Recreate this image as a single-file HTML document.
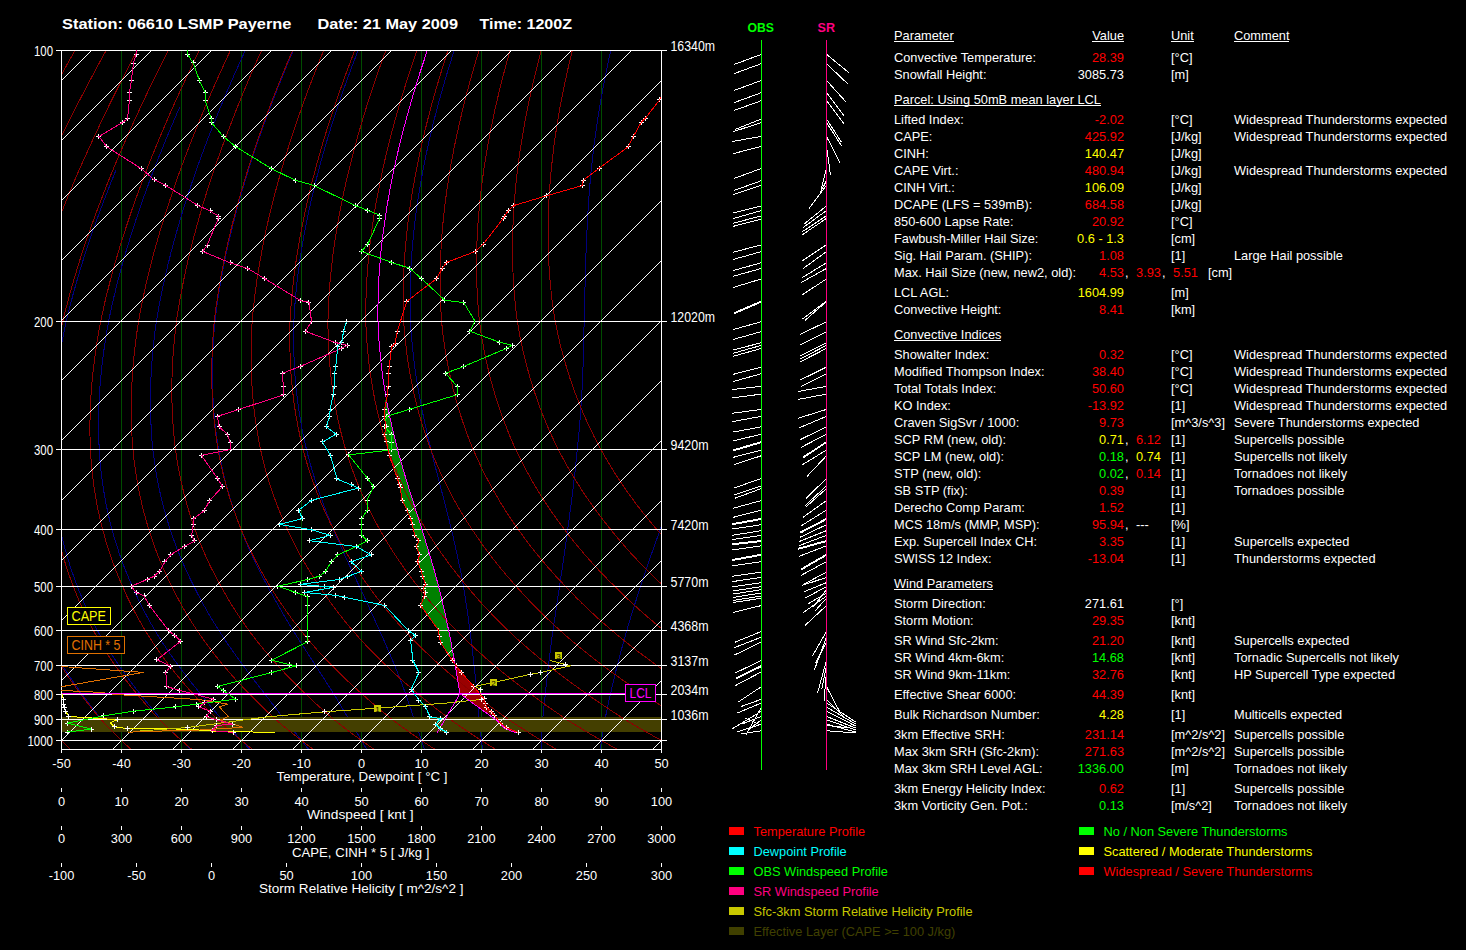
<!DOCTYPE html><html><head><meta charset="utf-8"><style>html,body{margin:0;padding:0;background:#000;overflow:hidden}</style></head><body><svg width="1466" height="950" viewBox="0 0 1466 950" style="display:block;font-family:'Liberation Sans',sans-serif">
<rect width="1466" height="950" fill="#000"/>
<defs><clipPath id="plot"><rect x="62" y="51" width="599" height="698"/></clipPath></defs>
<g clip-path="url(#plot)">
<line x1="121.50" y1="50.50" x2="121.50" y2="749.50" stroke="#004c00" stroke-width="1" shape-rendering="crispEdges"/>
<line x1="181.50" y1="50.50" x2="181.50" y2="749.50" stroke="#004c00" stroke-width="1" shape-rendering="crispEdges"/>
<line x1="241.50" y1="50.50" x2="241.50" y2="749.50" stroke="#004c00" stroke-width="1" shape-rendering="crispEdges"/>
<line x1="301.50" y1="50.50" x2="301.50" y2="749.50" stroke="#004c00" stroke-width="1" shape-rendering="crispEdges"/>
<line x1="361.50" y1="50.50" x2="361.50" y2="749.50" stroke="#004c00" stroke-width="1" shape-rendering="crispEdges"/>
<line x1="421.50" y1="50.50" x2="421.50" y2="749.50" stroke="#004c00" stroke-width="1" shape-rendering="crispEdges"/>
<line x1="481.50" y1="50.50" x2="481.50" y2="749.50" stroke="#004c00" stroke-width="1" shape-rendering="crispEdges"/>
<line x1="541.50" y1="50.50" x2="541.50" y2="749.50" stroke="#004c00" stroke-width="1" shape-rendering="crispEdges"/>
<line x1="601.50" y1="50.50" x2="601.50" y2="749.50" stroke="#004c00" stroke-width="1" shape-rendering="crispEdges"/>
<polyline points="56.1,230.1 55.2,232.5 54.3,235.0 53.4,237.3 52.5,239.7 51.7,242.1 50.8,244.4 50.0,246.7 49.2,249.0 48.4,251.3 47.6,253.5 46.8,255.8 46.0,258.0 45.3,260.2 44.5,262.4 43.8,264.5 43.0,266.7 42.3,268.8 41.6,270.9 40.9,273.0 40.2,275.1 39.6,277.1 38.9,279.2 38.2,281.2 37.6,283.2 37.0,285.3 36.3,287.2 35.7,289.2 35.1,291.2 34.5,293.1 33.9,295.0 33.4,297.0 32.8,298.9 32.2,300.7 31.7,302.6 31.1,304.5 30.6,306.3 30.1,308.2 29.6,310.0 29.0,311.8 28.5,313.6 28.0,315.4 27.5,317.1 27.1,318.9 26.6,320.7 26.1,322.4 25.7,324.1 25.3,325.7 24.9,327.4 24.5,329.1 24.1,330.7 23.7,332.3 23.3,334.0 22.9,335.6 22.6,337.2 22.2,338.8 21.8,340.4 21.5,341.9 21.1,343.5 20.8,345.0 20.4,346.6 20.1,348.1 19.8,349.6 19.5,351.2 19.1,352.7 18.8,354.2 18.5,355.6 18.2,357.1 17.9,358.6 17.6,360.0 17.4,361.5 17.1,362.9 16.8,364.4 16.5,365.8 16.3,367.2 16.0,368.6 15.8,370.0 15.5,371.4 15.3,372.8 15.0,374.2 14.8,375.5 14.6,376.9 14.3,378.2 14.1,379.6 13.9,380.9 13.7,382.2 13.5,383.6 13.2,384.9 13.0,386.2 12.8,387.5 12.6,388.8 12.5,390.1 12.3,391.3 12.1,392.6 11.9,393.9 11.7,395.1 11.6,396.4 11.4,397.6 11.2,398.9 11.1,400.1 10.9,401.3 10.7,402.5 10.6,403.7 10.4,405.0 10.3,406.2 10.2,407.3 10.0,408.5 9.9,409.7 9.8,410.9 9.6,412.0 9.5,413.2 9.4,414.4 9.3,415.5 9.2,416.7 9.0,417.8 8.9,418.9 8.8,420.1 8.7,421.2 8.6,422.3 8.5,423.4 8.4,424.5 8.3,425.6 8.2,426.7 8.2,427.8 8.1,428.9 8.0,430.0 7.9,431.0 7.8,432.1 7.8,433.2 7.7,434.2 7.6,435.3 7.6,436.3 7.5,437.4 7.4,438.4 7.4,439.4 7.3,440.5 7.3,441.5 7.2,442.5 7.2,443.5 7.1,444.5 7.1,445.5 7.0,446.5 7.0,447.5 6.9,448.5 6.9,449.5 6.9,451.4 6.7,457.0 6.7,462.5 6.7,467.8 6.8,473.0 6.9,478.0 7.1,483.0 7.4,487.8 7.7,492.5 8.0,497.1 8.4,501.6 8.8,506.0 9.3,510.4 9.8,514.6 10.3,518.7 10.9,522.8 11.5,526.7 12.1,530.6 12.7,534.5 13.4,538.2 14.1,541.9 14.8,545.5 15.6,549.1 16.3,552.6 17.1,556.0 17.9,559.4 18.8,562.7 19.6,565.9 20.5,569.1 21.4,572.3 22.3,575.3 23.2,578.4 24.1,581.4 25.1,584.3 26.0,587.2 27.0,590.1 27.9,592.9 28.9,595.7 29.9,598.5 30.8,601.2 31.8,603.9 32.8,606.5 33.8,609.1 34.9,611.7 35.9,614.2 36.9,616.7 38.0,619.2 39.1,621.6 40.1,624.0 41.2,626.3 42.3,628.7 43.4,630.9 44.5,633.2 45.6,635.4 46.7,637.6 47.8,639.8 48.9,642.0 50.0,644.1 51.2,646.2 52.3,648.2 53.4,650.3 54.6,652.3 55.7,654.3 56.9,656.3 58.0,658.2 59.2,660.1 60.3,662.0 61.5,663.9 62.7,665.8 63.8,667.6 65.0,669.4 66.1,671.3 67.3,673.0 68.4,674.8 69.6,676.6 70.8,678.3 71.9,680.0 73.1,681.7 74.3,683.4 75.5,685.0 76.6,686.7 77.8,688.3 79.0,689.9 80.1,691.5 81.3,693.1 82.5,694.7 83.6,696.2 84.8,697.8 85.9,699.3 87.1,700.9 88.2,702.4 89.3,703.9 90.5,705.4 91.6,706.9 92.8,708.3 93.9,709.8 95.0,711.2 96.2,712.6 97.3,714.1 98.5,715.4 99.6,716.8 100.7,718.2 101.9,719.6 103.0,720.9 104.2,722.2 105.4,723.5 106.5,724.8 107.7,726.0 108.9,727.3 110.0,728.5 111.2,729.8 112.3,731.0 113.5,732.2 114.6,733.4 115.8,734.6 116.9,735.8 118.1,737.0 119.2,738.2 120.4,739.3 121.5,740.5 123.4,742.4 127.3,746.3 131.1,750.0 134.9,753.6" fill="none" stroke="#000080" stroke-width="1" shape-rendering="crispEdges"/>
<polyline points="115.8,170.6 114.6,173.6 113.4,176.5 112.2,179.4 111.0,182.3 109.9,185.2 108.8,188.1 107.7,190.9 106.6,193.7 105.5,196.4 104.5,199.2 103.4,201.9 102.4,204.6 101.4,207.2 100.4,209.9 99.5,212.5 98.5,215.1 97.6,217.6 96.7,220.2 95.8,222.7 94.9,225.2 94.0,227.7 93.1,230.1 92.3,232.5 91.5,235.0 90.6,237.3 89.8,239.7 89.0,242.1 88.3,244.4 87.5,246.7 86.7,249.0 86.0,251.3 85.3,253.5 84.5,255.8 83.8,258.0 83.1,260.2 82.5,262.4 81.8,264.5 81.1,266.7 80.5,268.8 79.8,270.9 79.2,273.0 78.6,275.1 78.0,277.1 77.4,279.2 76.8,281.2 76.2,283.2 75.6,285.3 75.1,287.2 74.5,289.2 74.0,291.2 73.4,293.1 72.9,295.0 72.4,297.0 71.9,298.9 71.4,300.7 70.9,302.6 70.4,304.5 69.9,306.3 69.4,308.2 69.0,310.0 68.5,311.8 68.1,313.6 67.6,315.4 67.2,317.1 66.8,318.9 66.4,320.7 66.0,322.4 65.6,324.1 65.2,325.7 64.9,327.4 64.5,329.1 64.2,330.7 63.9,332.3 63.5,334.0 63.2,335.6 62.9,337.2 62.6,338.8 62.3,340.4 62.0,341.9 61.7,343.5 61.4,345.0 61.1,346.6 60.8,348.1 60.5,349.6 60.3,351.2 60.0,352.7 59.8,354.2 59.5,355.6 59.3,357.1 59.0,358.6 58.8,360.0 58.6,361.5 58.3,362.9 58.1,364.4 57.9,365.8 57.7,367.2 57.5,368.6 57.3,370.0 57.1,371.4 56.9,372.8 56.7,374.2 56.5,375.5 56.3,376.9 56.1,378.2 56.0,379.6 55.8,380.9 55.6,382.2 55.5,383.6 55.3,384.9 55.2,386.2 55.0,387.5 54.9,388.8 54.7,390.1 54.6,391.3 54.4,392.6 54.3,393.9 54.2,395.1 54.1,396.4 53.9,397.6 53.8,398.9 53.7,400.1 53.6,401.3 53.5,402.5 53.4,403.7 53.3,405.0 53.2,406.2 53.1,407.3 53.0,408.5 52.9,409.7 52.8,410.9 52.8,412.0 52.7,413.2 52.6,414.4 52.5,415.5 52.5,416.7 52.4,417.8 52.3,418.9 52.3,420.1 52.2,421.2 52.2,422.3 52.1,423.4 52.1,424.5 52.0,425.6 52.0,426.7 51.9,427.8 51.9,428.9 51.8,430.0 51.8,431.0 51.8,432.1 51.7,433.2 51.7,434.2 51.7,435.3 51.7,436.3 51.7,437.4 51.6,438.4 51.6,439.4 51.6,440.5 51.6,441.5 51.6,442.5 51.6,443.5 51.6,444.5 51.6,445.5 51.6,446.5 51.6,447.5 51.6,448.5 51.6,449.5 51.6,451.4 51.8,457.0 52.0,462.5 52.2,467.8 52.5,473.0 52.9,478.0 53.3,483.0 53.8,487.8 54.3,492.5 54.9,497.1 55.5,501.6 56.1,506.0 56.8,510.4 57.5,514.6 58.2,518.7 59.0,522.8 59.8,526.7 60.7,530.6 61.5,534.5 62.4,538.2 63.3,541.9 64.2,545.5 65.1,549.1 66.1,552.6 67.0,556.0 68.0,559.4 69.1,562.7 70.1,565.9 71.1,569.1 72.2,572.3 73.3,575.3 74.4,578.4 75.5,581.4 76.6,584.3 77.7,587.2 78.8,590.1 79.9,592.9 81.1,595.7 82.2,598.5 83.4,601.2 84.5,603.9 85.7,606.5 86.8,609.1 88.0,611.7 89.2,614.2 90.4,616.7 91.6,619.2 92.8,621.6 94.0,624.0 95.2,626.3 96.5,628.7 97.7,630.9 98.9,633.2 100.2,635.4 101.4,637.6 102.7,639.8 103.9,642.0 105.2,644.1 106.5,646.2 107.7,648.2 109.0,650.3 110.3,652.3 111.5,654.3 112.8,656.3 114.1,658.2 115.3,660.1 116.6,662.0 117.9,663.9 119.2,665.8 120.4,667.6 121.7,669.4 123.0,671.3 124.3,673.0 125.5,674.8 126.8,676.6 128.1,678.3 129.3,680.0 130.6,681.7 131.9,683.4 133.1,685.0 134.4,686.7 135.7,688.3 136.9,689.9 138.2,691.5 139.5,693.1 140.7,694.7 141.9,696.2 143.2,697.8 144.4,699.3 145.6,700.9 146.8,702.4 148.0,703.9 149.3,705.4 150.5,706.9 151.7,708.3 152.9,709.8 154.1,711.2 155.3,712.6 156.5,714.1 157.7,715.4 158.9,716.8 160.1,718.2 161.3,719.6 162.5,720.9 163.7,722.2 164.9,723.5 166.1,724.8 167.3,726.0 168.5,727.3 169.7,728.5 170.9,729.8 172.1,731.0 173.3,732.2 174.5,733.4 175.7,734.6 176.8,735.8 178.0,737.0 179.2,738.2 180.3,739.3 181.5,740.5 183.5,742.4 187.4,746.3 191.2,750.0 195.0,753.6" fill="none" stroke="#000080" stroke-width="1" shape-rendering="crispEdges"/>
<polyline points="179.7,107.2 178.1,110.9 176.5,114.6 174.9,118.1 173.4,121.7 171.9,125.2 170.4,128.7 169.0,132.1 167.6,135.5 166.2,138.9 164.8,142.2 163.5,145.5 162.2,148.7 160.9,152.0 159.6,155.1 158.3,158.3 157.1,161.4 155.9,164.5 154.7,167.5 153.6,170.6 152.4,173.6 151.3,176.5 150.2,179.4 149.1,182.3 148.1,185.2 147.0,188.1 146.0,190.9 145.0,193.7 144.0,196.4 143.0,199.2 142.1,201.9 141.1,204.6 140.2,207.2 139.3,209.9 138.4,212.5 137.5,215.1 136.7,217.6 135.8,220.2 135.0,222.7 134.2,225.2 133.4,227.7 132.6,230.1 131.8,232.5 131.1,235.0 130.3,237.3 129.6,239.7 128.9,242.1 128.1,244.4 127.5,246.7 126.8,249.0 126.1,251.3 125.4,253.5 124.8,255.8 124.1,258.0 123.5,260.2 122.9,262.4 122.3,264.5 121.7,266.7 121.1,268.8 120.5,270.9 120.0,273.0 119.4,275.1 118.9,277.1 118.3,279.2 117.8,281.2 117.3,283.2 116.8,285.3 116.3,287.2 115.8,289.2 115.3,291.2 114.9,293.1 114.4,295.0 113.9,297.0 113.5,298.9 113.1,300.7 112.6,302.6 112.2,304.5 111.8,306.3 111.4,308.2 111.0,310.0 110.6,311.8 110.2,313.6 109.8,315.4 109.5,317.1 109.1,318.9 108.7,320.7 108.4,322.4 108.1,324.1 107.8,325.7 107.5,327.4 107.2,329.1 106.9,330.7 106.7,332.3 106.4,334.0 106.1,335.6 105.9,337.2 105.6,338.8 105.4,340.4 105.1,341.9 104.9,343.5 104.7,345.0 104.4,346.6 104.2,348.1 104.0,349.6 103.8,351.2 103.6,352.7 103.4,354.2 103.2,355.6 103.0,357.1 102.8,358.6 102.6,360.0 102.4,361.5 102.3,362.9 102.1,364.4 101.9,365.8 101.8,367.2 101.6,368.6 101.5,370.0 101.3,371.4 101.2,372.8 101.1,374.2 100.9,375.5 100.8,376.9 100.7,378.2 100.6,379.6 100.4,380.9 100.3,382.2 100.2,383.6 100.1,384.9 100.0,386.2 99.9,387.5 99.8,388.8 99.7,390.1 99.7,391.3 99.6,392.6 99.5,393.9 99.4,395.1 99.3,396.4 99.3,397.6 99.2,398.9 99.1,400.1 99.1,401.3 99.0,402.5 99.0,403.7 98.9,405.0 98.9,406.2 98.8,407.3 98.8,408.5 98.8,409.7 98.7,410.9 98.7,412.0 98.7,413.2 98.6,414.4 98.6,415.5 98.6,416.7 98.6,417.8 98.6,418.9 98.6,420.1 98.5,421.2 98.5,422.3 98.5,423.4 98.5,424.5 98.5,425.6 98.5,426.7 98.5,427.8 98.6,428.9 98.6,430.0 98.6,431.0 98.6,432.1 98.6,433.2 98.6,434.2 98.7,435.3 98.7,436.3 98.7,437.4 98.7,438.4 98.8,439.4 98.8,440.5 98.8,441.5 98.9,442.5 98.9,443.5 99.0,444.5 99.0,445.5 99.1,446.5 99.1,447.5 99.2,448.5 99.2,449.5 99.3,451.4 99.7,457.0 100.2,462.5 100.7,467.8 101.3,473.0 101.9,478.0 102.5,483.0 103.3,487.8 104.0,492.5 104.8,497.1 105.6,501.6 106.5,506.0 107.4,510.4 108.3,514.6 109.3,518.7 110.3,522.8 111.3,526.7 112.4,530.6 113.4,534.5 114.5,538.2 115.6,541.9 116.7,545.5 117.9,549.1 119.0,552.6 120.2,556.0 121.4,559.4 122.6,562.7 123.8,565.9 125.1,569.1 126.3,572.3 127.6,575.3 128.8,578.4 130.1,581.4 131.4,584.3 132.7,587.2 134.0,590.1 135.3,592.9 136.6,595.7 137.9,598.5 139.2,601.2 140.5,603.9 141.8,606.5 143.1,609.1 144.5,611.7 145.8,614.2 147.1,616.7 148.5,619.2 149.8,621.6 151.2,624.0 152.6,626.3 153.9,628.7 155.3,630.9 156.6,633.2 158.0,635.4 159.4,637.6 160.8,639.8 162.1,642.0 163.5,644.1 164.9,646.2 166.3,648.2 167.6,650.3 169.0,652.3 170.4,654.3 171.8,656.3 173.1,658.2 174.5,660.1 175.9,662.0 177.3,663.9 178.6,665.8 180.0,667.6 181.3,669.4 182.7,671.3 184.0,673.0 185.4,674.8 186.7,676.6 188.0,678.3 189.4,680.0 190.7,681.7 192.0,683.4 193.3,685.0 194.7,686.7 196.0,688.3 197.3,689.9 198.6,691.5 199.9,693.1 201.2,694.7 202.5,696.2 203.7,697.8 205.0,699.3 206.2,700.9 207.5,702.4 208.7,703.9 209.9,705.4 211.1,706.9 212.4,708.3 213.6,709.8 214.8,711.2 216.0,712.6 217.2,714.1 218.4,715.4 219.6,716.8 220.8,718.2 221.9,719.6 223.1,720.9 224.3,722.2 225.5,723.5 226.7,724.8 227.9,726.0 229.1,727.3 230.2,728.5 231.4,729.8 232.5,731.0 233.7,732.2 234.8,733.4 235.9,734.6 237.1,735.8 238.2,737.0 239.3,738.2 240.4,739.3 241.5,740.5 243.4,742.4 247.0,746.3 250.6,750.0 254.1,753.6" fill="none" stroke="#000080" stroke-width="1" shape-rendering="crispEdges"/>
<polyline points="253.7,32.4 251.5,37.1 249.4,41.6 247.3,46.2 245.2,50.6 243.2,55.0 241.2,59.3 239.3,63.6 237.4,67.8 235.5,72.0 233.7,76.1 232.0,80.2 230.2,84.2 228.5,88.1 226.8,92.1 225.2,95.9 223.6,99.7 222.0,103.5 220.5,107.2 218.9,110.9 217.5,114.6 216.0,118.1 214.6,121.7 213.2,125.2 211.8,128.7 210.5,132.1 209.1,135.5 207.8,138.9 206.6,142.2 205.3,145.5 204.1,148.7 202.9,152.0 201.7,155.1 200.6,158.3 199.4,161.4 198.3,164.5 197.2,167.5 196.2,170.6 195.1,173.6 194.1,176.5 193.1,179.4 192.1,182.3 191.1,185.2 190.2,188.1 189.2,190.9 188.3,193.7 187.4,196.4 186.5,199.2 185.6,201.9 184.8,204.6 184.0,207.2 183.1,209.9 182.3,212.5 181.5,215.1 180.8,217.6 180.0,220.2 179.3,222.7 178.5,225.2 177.8,227.7 177.1,230.1 176.4,232.5 175.7,235.0 175.1,237.3 174.4,239.7 173.8,242.1 173.1,244.4 172.5,246.7 171.9,249.0 171.3,251.3 170.7,253.5 170.2,255.8 169.6,258.0 169.1,260.2 168.5,262.4 168.0,264.5 167.5,266.7 167.0,268.8 166.5,270.9 166.0,273.0 165.5,275.1 165.0,277.1 164.6,279.2 164.1,281.2 163.7,283.2 163.2,285.3 162.8,287.2 162.4,289.2 162.0,291.2 161.6,293.1 161.2,295.0 160.8,297.0 160.5,298.9 160.1,300.7 159.7,302.6 159.4,304.5 159.0,306.3 158.7,308.2 158.4,310.0 158.1,311.8 157.7,313.6 157.4,315.4 157.1,317.1 156.8,318.9 156.6,320.7 156.3,322.4 156.0,324.1 155.8,325.7 155.6,327.4 155.4,329.1 155.1,330.7 154.9,332.3 154.7,334.0 154.5,335.6 154.3,337.2 154.2,338.8 154.0,340.4 153.8,341.9 153.6,343.5 153.5,345.0 153.3,346.6 153.1,348.1 153.0,349.6 152.8,351.2 152.7,352.7 152.6,354.2 152.4,355.6 152.3,357.1 152.2,358.6 152.1,360.0 152.0,361.5 151.9,362.9 151.8,364.4 151.7,365.8 151.6,367.2 151.5,368.6 151.4,370.0 151.3,371.4 151.2,372.8 151.1,374.2 151.1,375.5 151.0,376.9 150.9,378.2 150.9,379.6 150.8,380.9 150.8,382.2 150.7,383.6 150.7,384.9 150.6,386.2 150.6,387.5 150.6,388.8 150.5,390.1 150.5,391.3 150.5,392.6 150.5,393.9 150.4,395.1 150.4,396.4 150.4,397.6 150.4,398.9 150.4,400.1 150.4,401.3 150.4,402.5 150.4,403.7 150.4,405.0 150.4,406.2 150.4,407.3 150.5,408.5 150.5,409.7 150.5,410.9 150.5,412.0 150.6,413.2 150.6,414.4 150.6,415.5 150.7,416.7 150.7,417.8 150.7,418.9 150.8,420.1 150.8,421.2 150.9,422.3 150.9,423.4 151.0,424.5 151.0,425.6 151.1,426.7 151.1,427.8 151.2,428.9 151.3,430.0 151.3,431.0 151.4,432.1 151.5,433.2 151.5,434.2 151.6,435.3 151.7,436.3 151.8,437.4 151.9,438.4 151.9,439.4 152.0,440.5 152.1,441.5 152.2,442.5 152.3,443.5 152.4,444.5 152.5,445.5 152.6,446.5 152.7,447.5 152.8,448.5 152.9,449.5 153.1,451.4 153.8,457.0 154.6,462.5 155.4,467.8 156.2,473.0 157.1,478.0 158.0,483.0 159.0,487.8 160.0,492.5 161.1,497.1 162.2,501.6 163.3,506.0 164.5,510.4 165.7,514.6 166.9,518.7 168.1,522.8 169.3,526.7 170.6,530.6 171.9,534.5 173.2,538.2 174.5,541.9 175.9,545.5 177.2,549.1 178.6,552.6 180.0,556.0 181.4,559.4 182.8,562.7 184.2,565.9 185.6,569.1 187.1,572.3 188.5,575.3 190.0,578.4 191.4,581.4 192.9,584.3 194.4,587.2 195.8,590.1 197.2,592.9 198.7,595.7 200.1,598.5 201.6,601.2 203.0,603.9 204.5,606.5 206.0,609.1 207.4,611.7 208.9,614.2 210.4,616.7 211.8,619.2 213.3,621.6 214.8,624.0 216.2,626.3 217.7,628.7 219.1,630.9 220.6,633.2 222.1,635.4 223.5,637.6 225.0,639.8 226.4,642.0 227.8,644.1 229.3,646.2 230.7,648.2 232.1,650.3 233.6,652.3 235.0,654.3 236.4,656.3 237.8,658.2 239.2,660.1 240.6,662.0 242.0,663.9 243.4,665.8 244.7,667.6 246.1,669.4 247.4,671.3 248.8,673.0 250.1,674.8 251.4,676.6 252.7,678.3 254.0,680.0 255.3,681.7 256.6,683.4 257.9,685.0 259.2,686.7 260.5,688.3 261.7,689.9 263.0,691.5 264.2,693.1 265.4,694.7 266.6,696.2 267.8,697.8 269.0,699.3 270.1,700.9 271.3,702.4 272.4,703.9 273.6,705.4 274.7,706.9 275.8,708.3 276.9,709.8 278.0,711.2 279.1,712.6 280.2,714.1 281.3,715.4 282.4,716.8 283.4,718.2 284.5,719.6 285.5,720.9 286.6,722.2 287.7,723.5 288.7,724.8 289.7,726.0 290.8,727.3 291.8,728.5 292.8,729.8 293.8,731.0 294.8,732.2 295.8,733.4 296.7,734.6 297.7,735.8 298.7,737.0 299.6,738.2 300.6,739.3 301.5,740.5 303.1,742.4 306.2,746.3 309.1,750.0 312.0,753.6" fill="none" stroke="#000080" stroke-width="1" shape-rendering="crispEdges"/>
<polyline points="303.3,27.7 301.2,32.4 299.1,37.1 297.1,41.6 295.2,46.2 293.3,50.6 291.4,55.0 289.5,59.3 287.7,63.6 286.0,67.8 284.3,72.0 282.6,76.1 280.9,80.2 279.3,84.2 277.7,88.1 276.2,92.1 274.7,95.9 273.2,99.7 271.8,103.5 270.3,107.2 268.9,110.9 267.6,114.6 266.3,118.1 264.9,121.7 263.7,125.2 262.4,128.7 261.2,132.1 260.0,135.5 258.8,138.9 257.7,142.2 256.5,145.5 255.4,148.7 254.3,152.0 253.3,155.1 252.2,158.3 251.2,161.4 250.2,164.5 249.3,167.5 248.3,170.6 247.4,173.6 246.4,176.5 245.5,179.4 244.7,182.3 243.8,185.2 243.0,188.1 242.1,190.9 241.3,193.7 240.5,196.4 239.7,199.2 239.0,201.9 238.2,204.6 237.5,207.2 236.8,209.9 236.1,212.5 235.4,215.1 234.7,217.6 234.1,220.2 233.4,222.7 232.8,225.2 232.2,227.7 231.6,230.1 231.0,232.5 230.4,235.0 229.8,237.3 229.3,239.7 228.7,242.1 228.2,244.4 227.7,246.7 227.2,249.0 226.7,251.3 226.2,253.5 225.7,255.8 225.3,258.0 224.8,260.2 224.4,262.4 223.9,264.5 223.5,266.7 223.1,268.8 222.7,270.9 222.3,273.0 221.9,275.1 221.5,277.1 221.1,279.2 220.8,281.2 220.4,283.2 220.1,285.3 219.8,287.2 219.4,289.2 219.1,291.2 218.8,293.1 218.5,295.0 218.2,297.0 217.9,298.9 217.7,300.7 217.4,302.6 217.1,304.5 216.9,306.3 216.6,308.2 216.4,310.0 216.1,311.8 215.9,313.6 215.7,315.4 215.5,317.1 215.3,318.9 215.1,320.7 214.9,322.4 214.7,324.1 214.6,325.7 214.4,327.4 214.3,329.1 214.1,330.7 214.0,332.3 213.9,334.0 213.8,335.6 213.7,337.2 213.6,338.8 213.5,340.4 213.4,341.9 213.3,343.5 213.2,345.0 213.1,346.6 213.0,348.1 213.0,349.6 212.9,351.2 212.8,352.7 212.8,354.2 212.7,355.6 212.7,357.1 212.6,358.6 212.6,360.0 212.6,361.5 212.5,362.9 212.5,364.4 212.5,365.8 212.4,367.2 212.4,368.6 212.4,370.0 212.4,371.4 212.4,372.8 212.4,374.2 212.4,375.5 212.4,376.9 212.4,378.2 212.4,379.6 212.5,380.9 212.5,382.2 212.5,383.6 212.5,384.9 212.6,386.2 212.6,387.5 212.6,388.8 212.7,390.1 212.7,391.3 212.8,392.6 212.8,393.9 212.9,395.1 212.9,396.4 213.0,397.6 213.1,398.9 213.1,400.1 213.2,401.3 213.3,402.5 213.3,403.7 213.4,405.0 213.5,406.2 213.6,407.3 213.7,408.5 213.7,409.7 213.8,410.9 213.9,412.0 214.0,413.2 214.1,414.4 214.2,415.5 214.3,416.7 214.4,417.8 214.5,418.9 214.6,420.1 214.8,421.2 214.9,422.3 215.0,423.4 215.1,424.5 215.2,425.6 215.3,426.7 215.5,427.8 215.6,428.9 215.7,430.0 215.9,431.0 216.0,432.1 216.1,433.2 216.3,434.2 216.4,435.3 216.5,436.3 216.7,437.4 216.8,438.4 217.0,439.4 217.1,440.5 217.3,441.5 217.4,442.5 217.6,443.5 217.7,444.5 217.9,445.5 218.1,446.5 218.2,447.5 218.4,448.5 218.5,449.5 218.9,451.4 219.9,457.0 221.0,462.5 222.2,467.8 223.3,473.0 224.6,478.0 225.8,483.0 227.1,487.8 228.4,492.5 229.8,497.1 231.2,501.6 232.6,506.0 234.0,510.4 235.5,514.6 236.9,518.7 238.4,522.8 239.9,526.7 241.4,530.6 243.0,534.5 244.5,538.2 246.0,541.9 247.6,545.5 249.2,549.1 250.7,552.6 252.3,556.0 253.9,559.4 255.5,562.7 257.0,565.9 258.6,569.1 260.2,572.3 261.8,575.3 263.4,578.4 265.0,581.4 266.6,584.3 268.2,587.2 269.7,590.1 271.2,592.9 272.8,595.7 274.3,598.5 275.8,601.2 277.3,603.9 278.8,606.5 280.3,609.1 281.8,611.7 283.3,614.2 284.8,616.7 286.2,619.2 287.7,621.6 289.1,624.0 290.6,626.3 292.0,628.7 293.4,630.9 294.8,633.2 296.2,635.4 297.6,637.6 299.0,639.8 300.4,642.0 301.7,644.1 303.1,646.2 304.4,648.2 305.7,650.3 307.0,652.3 308.3,654.3 309.6,656.3 310.8,658.2 312.1,660.1 313.3,662.0 314.5,663.9 315.7,665.8 316.9,667.6 318.1,669.4 319.3,671.3 320.4,673.0 321.6,674.8 322.7,676.6 323.8,678.3 324.9,680.0 326.0,681.7 327.0,683.4 328.1,685.0 329.2,686.7 330.2,688.3 331.2,689.9 332.2,691.5 333.2,693.1 334.2,694.7 335.2,696.2 336.1,697.8 337.0,699.3 337.9,700.9 338.8,702.4 339.7,703.9 340.6,705.4 341.5,706.9 342.3,708.3 343.2,709.8 344.0,711.2 344.9,712.6 345.7,714.1 346.5,715.4 347.3,716.8 348.1,718.2 348.9,719.6 349.7,720.9 350.5,722.2 351.3,723.5 352.1,724.8 352.8,726.0 353.6,727.3 354.4,728.5 355.1,729.8 355.9,731.0 356.6,732.2 357.3,733.4 358.0,734.6 358.7,735.8 359.4,737.0 360.1,738.2 360.8,739.3 361.5,740.5 362.6,742.4 364.9,746.3 367.0,750.0 369.1,753.6" fill="none" stroke="#000080" stroke-width="1" shape-rendering="crispEdges"/>
<polyline points="367.1,27.7 365.2,32.4 363.3,37.1 361.5,41.6 359.7,46.2 358.0,50.6 356.3,55.0 354.7,59.3 353.0,63.6 351.5,67.8 349.9,72.0 348.4,76.1 347.0,80.2 345.5,84.2 344.1,88.1 342.7,92.1 341.4,95.9 340.1,99.7 338.8,103.5 337.6,107.2 336.3,110.9 335.1,114.6 334.0,118.1 332.8,121.7 331.7,125.2 330.6,128.7 329.6,132.1 328.5,135.5 327.5,138.9 326.5,142.2 325.6,145.5 324.6,148.7 323.7,152.0 322.8,155.1 321.9,158.3 321.0,161.4 320.2,164.5 319.4,167.5 318.6,170.6 317.8,173.6 317.0,176.5 316.3,179.4 315.5,182.3 314.8,185.2 314.1,188.1 313.4,190.9 312.8,193.7 312.1,196.4 311.5,199.2 310.9,201.9 310.3,204.6 309.7,207.2 309.1,209.9 308.5,212.5 308.0,215.1 307.4,217.6 306.9,220.2 306.4,222.7 305.9,225.2 305.4,227.7 305.0,230.1 304.5,232.5 304.1,235.0 303.6,237.3 303.2,239.7 302.8,242.1 302.4,244.4 302.0,246.7 301.6,249.0 301.3,251.3 300.9,253.5 300.6,255.8 300.2,258.0 299.9,260.2 299.6,262.4 299.3,264.5 299.0,266.7 298.7,268.8 298.4,270.9 298.2,273.0 297.9,275.1 297.6,277.1 297.4,279.2 297.2,281.2 296.9,283.2 296.7,285.3 296.5,287.2 296.3,289.2 296.1,291.2 295.9,293.1 295.7,295.0 295.5,297.0 295.4,298.9 295.2,300.7 295.1,302.6 294.9,304.5 294.8,306.3 294.6,308.2 294.5,310.0 294.4,311.8 294.3,313.6 294.2,315.4 294.1,317.1 294.0,318.9 293.9,320.7 293.8,322.4 293.8,324.1 293.7,325.7 293.7,327.4 293.7,329.1 293.6,330.7 293.6,332.3 293.6,334.0 293.6,335.6 293.6,337.2 293.6,338.8 293.6,340.4 293.6,341.9 293.6,343.5 293.6,345.0 293.7,346.6 293.7,348.1 293.7,349.6 293.8,351.2 293.8,352.7 293.8,354.2 293.9,355.6 294.0,357.1 294.0,358.6 294.1,360.0 294.1,361.5 294.2,362.9 294.3,364.4 294.4,365.8 294.4,367.2 294.5,368.6 294.6,370.0 294.7,371.4 294.8,372.8 294.9,374.2 295.0,375.5 295.1,376.9 295.2,378.2 295.3,379.6 295.4,380.9 295.5,382.2 295.7,383.6 295.8,384.9 295.9,386.2 296.0,387.5 296.2,388.8 296.3,390.1 296.4,391.3 296.6,392.6 296.7,393.9 296.9,395.1 297.0,396.4 297.2,397.6 297.3,398.9 297.5,400.1 297.6,401.3 297.8,402.5 297.9,403.7 298.1,405.0 298.3,406.2 298.4,407.3 298.6,408.5 298.8,409.7 299.0,410.9 299.1,412.0 299.3,413.2 299.5,414.4 299.7,415.5 299.9,416.7 300.1,417.8 300.2,418.9 300.4,420.1 300.6,421.2 300.8,422.3 301.0,423.4 301.2,424.5 301.4,425.6 301.6,426.7 301.8,427.8 302.0,428.9 302.2,430.0 302.5,431.0 302.7,432.1 302.9,433.2 303.1,434.2 303.3,435.3 303.5,436.3 303.7,437.4 304.0,438.4 304.2,439.4 304.4,440.5 304.6,441.5 304.9,442.5 305.1,443.5 305.3,444.5 305.6,445.5 305.8,446.5 306.0,447.5 306.3,448.5 306.5,449.5 307.0,451.4 308.4,457.0 309.9,462.5 311.4,467.8 312.9,473.0 314.5,478.0 316.0,483.0 317.6,487.8 319.2,492.5 320.9,497.1 322.5,501.6 324.1,506.0 325.8,510.4 327.4,514.6 329.1,518.7 330.7,522.8 332.4,526.7 334.0,530.6 335.6,534.5 337.2,538.2 338.8,541.9 340.4,545.5 342.0,549.1 343.6,552.6 345.1,556.0 346.7,559.4 348.2,562.7 349.7,565.9 351.2,569.1 352.7,572.3 354.1,575.3 355.6,578.4 357.0,581.4 358.4,584.3 359.8,587.2 361.1,590.1 362.4,592.9 363.7,595.7 365.0,598.5 366.2,601.2 367.4,603.9 368.7,606.5 369.8,609.1 371.0,611.7 372.2,614.2 373.3,616.7 374.4,619.2 375.5,621.6 376.6,624.0 377.7,626.3 378.7,628.7 379.7,630.9 380.7,633.2 381.7,635.4 382.7,637.6 383.7,639.8 384.6,642.0 385.5,644.1 386.4,646.2 387.3,648.2 388.2,650.3 389.1,652.3 389.9,654.3 390.8,656.3 391.6,658.2 392.4,660.1 393.2,662.0 394.0,663.9 394.8,665.8 395.5,667.6 396.2,669.4 397.0,671.3 397.7,673.0 398.4,674.8 399.1,676.6 399.7,678.3 400.4,680.0 401.1,681.7 401.7,683.4 402.3,685.0 403.0,686.7 403.6,688.3 404.2,689.9 404.8,691.5 405.4,693.1 406.0,694.7 406.5,696.2 407.0,697.8 407.6,699.3 408.1,700.9 408.6,702.4 409.1,703.9 409.6,705.4 410.1,706.9 410.6,708.3 411.1,709.8 411.5,711.2 412.0,712.6 412.5,714.1 412.9,715.4 413.4,716.8 413.8,718.2 414.2,719.6 414.7,720.9 415.2,722.2 415.6,723.5 416.1,724.8 416.5,726.0 417.0,727.3 417.4,728.5 417.8,729.8 418.2,731.0 418.7,732.2 419.1,733.4 419.5,734.6 419.9,735.8 420.3,737.0 420.7,738.2 421.1,739.3 421.5,740.5 422.2,742.4 423.5,746.3 424.7,750.0 425.9,753.6" fill="none" stroke="#000080" stroke-width="1" shape-rendering="crispEdges"/>
<polyline points="461.9,27.7 460.3,32.4 458.7,37.1 457.2,41.6 455.7,46.2 454.2,50.6 452.8,55.0 451.4,59.3 450.1,63.6 448.8,67.8 447.5,72.0 446.2,76.1 445.0,80.2 443.9,84.2 442.7,88.1 441.6,92.1 440.5,95.9 439.5,99.7 438.4,103.5 437.4,107.2 436.5,110.9 435.5,114.6 434.6,118.1 433.7,121.7 432.8,125.2 432.0,128.7 431.2,132.1 430.4,135.5 429.6,138.9 428.8,142.2 428.1,145.5 427.4,148.7 426.7,152.0 426.0,155.1 425.4,158.3 424.7,161.4 424.1,164.5 423.5,167.5 422.9,170.6 422.4,173.6 421.8,176.5 421.3,179.4 420.8,182.3 420.3,185.2 419.8,188.1 419.3,190.9 418.9,193.7 418.4,196.4 418.0,199.2 417.6,201.9 417.2,204.6 416.8,207.2 416.5,209.9 416.1,212.5 415.8,215.1 415.4,217.6 415.1,220.2 414.8,222.7 414.5,225.2 414.2,227.7 414.0,230.1 413.7,232.5 413.4,235.0 413.2,237.3 413.0,239.7 412.8,242.1 412.6,244.4 412.4,246.7 412.2,249.0 412.0,251.3 411.8,253.5 411.7,255.8 411.5,258.0 411.4,260.2 411.2,262.4 411.1,264.5 411.0,266.7 410.9,268.8 410.8,270.9 410.7,273.0 410.6,275.1 410.5,277.1 410.4,279.2 410.4,281.2 410.3,283.2 410.2,285.3 410.2,287.2 410.2,289.2 410.1,291.2 410.1,293.1 410.1,295.0 410.1,297.0 410.1,298.9 410.1,300.7 410.1,302.6 410.1,304.5 410.1,306.3 410.1,308.2 410.2,310.0 410.2,311.8 410.2,313.6 410.3,315.4 410.3,317.1 410.4,318.9 410.4,320.7 410.5,322.4 410.6,324.1 410.7,325.7 410.8,327.4 410.9,329.1 411.0,330.7 411.2,332.3 411.3,334.0 411.4,335.6 411.5,337.2 411.7,338.8 411.8,340.4 412.0,341.9 412.1,343.5 412.3,345.0 412.4,346.6 412.6,348.1 412.7,349.6 412.9,351.2 413.1,352.7 413.2,354.2 413.4,355.6 413.6,357.1 413.7,358.6 413.9,360.0 414.1,361.5 414.3,362.9 414.5,364.4 414.7,365.8 414.8,367.2 415.0,368.6 415.2,370.0 415.4,371.4 415.6,372.8 415.8,374.2 416.0,375.5 416.2,376.9 416.4,378.2 416.6,379.6 416.9,380.9 417.1,382.2 417.3,383.6 417.5,384.9 417.7,386.2 417.9,387.5 418.1,388.8 418.4,390.1 418.6,391.3 418.8,392.6 419.0,393.9 419.3,395.1 419.5,396.4 419.7,397.6 419.9,398.9 420.2,400.1 420.4,401.3 420.6,402.5 420.9,403.7 421.1,405.0 421.3,406.2 421.6,407.3 421.8,408.5 422.0,409.7 422.3,410.9 422.5,412.0 422.7,413.2 423.0,414.4 423.2,415.5 423.5,416.7 423.7,417.8 423.9,418.9 424.2,420.1 424.4,421.2 424.7,422.3 424.9,423.4 425.1,424.5 425.4,425.6 425.6,426.7 425.9,427.8 426.1,428.9 426.3,430.0 426.6,431.0 426.8,432.1 427.1,433.2 427.3,434.2 427.6,435.3 427.8,436.3 428.0,437.4 428.3,438.4 428.5,439.4 428.8,440.5 429.0,441.5 429.2,442.5 429.5,443.5 429.7,444.5 430.0,445.5 430.2,446.5 430.4,447.5 430.7,448.5 430.9,449.5 431.4,451.4 432.8,457.0 434.2,462.5 435.6,467.8 436.9,473.0 438.3,478.0 439.5,483.0 440.8,487.8 442.0,492.5 443.2,497.1 444.4,501.6 445.6,506.0 446.7,510.4 447.7,514.6 448.8,518.7 449.8,522.8 450.8,526.7 451.7,530.6 452.6,534.5 453.5,538.2 454.3,541.9 455.2,545.5 455.9,549.1 456.7,552.6 457.4,556.0 458.2,559.4 458.8,562.7 459.5,565.9 460.2,569.1 460.8,572.3 461.4,575.3 462.0,578.4 462.5,581.4 463.1,584.3 463.6,587.2 464.1,590.1 464.5,592.9 465.0,595.7 465.4,598.5 465.8,601.2 466.2,603.9 466.6,606.5 467.0,609.1 467.4,611.7 467.7,614.2 468.1,616.7 468.4,619.2 468.7,621.6 469.0,624.0 469.4,626.3 469.7,628.7 470.0,630.9 470.2,633.2 470.5,635.4 470.8,637.6 471.1,639.8 471.3,642.0 471.6,644.1 471.9,646.2 472.1,648.2 472.3,650.3 472.6,652.3 472.8,654.3 473.0,656.3 473.3,658.2 473.5,660.1 473.7,662.0 473.9,663.9 474.1,665.8 474.3,667.6 474.5,669.4 474.7,671.3 474.9,673.0 475.1,674.8 475.3,676.6 475.4,678.3 475.6,680.0 475.8,681.7 476.0,683.4 476.1,685.0 476.3,686.7 476.5,688.3 476.6,689.9 476.8,691.5 476.9,693.1 477.1,694.7 477.2,696.2 477.3,697.8 477.5,699.3 477.6,700.9 477.7,702.4 477.8,703.9 477.9,705.4 478.1,706.9 478.2,708.3 478.3,709.8 478.4,711.2 478.5,712.6 478.6,714.1 478.8,715.4 478.9,716.8 479.0,718.2 479.1,719.6 479.2,720.9 479.4,722.2 479.5,723.5 479.7,724.8 479.8,726.0 480.0,727.3 480.1,728.5 480.2,729.8 480.4,731.0 480.5,732.2 480.7,733.4 480.8,734.6 480.9,735.8 481.1,737.0 481.2,738.2 481.4,739.3 481.5,740.5 481.7,742.4 482.2,746.3 482.7,750.0 483.1,753.6" fill="none" stroke="#000080" stroke-width="1" shape-rendering="crispEdges"/>
<polyline points="616.3,27.7 615.1,32.4 614.0,37.1 612.9,41.6 611.8,46.2 610.8,50.6 609.8,55.0 608.8,59.3 607.9,63.6 607.0,67.8 606.2,72.0 605.3,76.1 604.5,80.2 603.7,84.2 603.0,88.1 602.3,92.1 601.6,95.9 600.9,99.7 600.2,103.5 599.6,107.2 599.0,110.9 598.4,114.6 597.9,118.1 597.3,121.7 596.8,125.2 596.3,128.7 595.8,132.1 595.3,135.5 594.9,138.9 594.5,142.2 594.0,145.5 593.6,148.7 593.3,152.0 592.9,155.1 592.5,158.3 592.2,161.4 591.9,164.5 591.5,167.5 591.2,170.6 590.9,173.6 590.7,176.5 590.4,179.4 590.1,182.3 589.9,185.2 589.7,188.1 589.4,190.9 589.2,193.7 589.0,196.4 588.8,199.2 588.6,201.9 588.4,204.6 588.2,207.2 588.1,209.9 587.9,212.5 587.8,215.1 587.6,217.6 587.5,220.2 587.3,222.7 587.2,225.2 587.1,227.7 587.0,230.1 586.8,232.5 586.7,235.0 586.6,237.3 586.5,239.7 586.4,242.1 586.3,244.4 586.2,246.7 586.2,249.0 586.1,251.3 586.0,253.5 585.9,255.8 585.8,258.0 585.8,260.2 585.7,262.4 585.6,264.5 585.6,266.7 585.5,268.8 585.4,270.9 585.4,273.0 585.3,275.1 585.3,277.1 585.2,279.2 585.1,281.2 585.1,283.2 585.0,285.3 585.0,287.2 584.9,289.2 584.9,291.2 584.8,293.1 584.8,295.0 584.7,297.0 584.7,298.9 584.6,300.7 584.6,302.6 584.5,304.5 584.5,306.3 584.4,308.2 584.4,310.0 584.3,311.8 584.3,313.6 584.2,315.4 584.2,317.1 584.1,318.9 584.1,320.7 584.0,322.4 584.0,324.1 584.0,325.7 584.0,327.4 583.9,329.1 583.9,330.7 583.9,332.3 583.9,334.0 583.8,335.6 583.8,337.2 583.8,338.8 583.7,340.4 583.7,341.9 583.7,343.5 583.6,345.0 583.6,346.6 583.6,348.1 583.5,349.6 583.5,351.2 583.4,352.7 583.4,354.2 583.4,355.6 583.3,357.1 583.3,358.6 583.2,360.0 583.2,361.5 583.1,362.9 583.1,364.4 583.0,365.8 583.0,367.2 582.9,368.6 582.9,370.0 582.8,371.4 582.8,372.8 582.7,374.2 582.7,375.5 582.6,376.9 582.5,378.2 582.5,379.6 582.4,380.9 582.4,382.2 582.3,383.6 582.2,384.9 582.2,386.2 582.1,387.5 582.0,388.8 582.0,390.1 581.9,391.3 581.8,392.6 581.7,393.9 581.7,395.1 581.6,396.4 581.5,397.6 581.4,398.9 581.4,400.1 581.3,401.3 581.2,402.5 581.1,403.7 581.1,405.0 581.0,406.2 580.9,407.3 580.8,408.5 580.7,409.7 580.7,410.9 580.6,412.0 580.5,413.2 580.4,414.4 580.3,415.5 580.2,416.7 580.1,417.8 580.1,418.9 580.0,420.1 579.9,421.2 579.8,422.3 579.7,423.4 579.6,424.5 579.5,425.6 579.4,426.7 579.3,427.8 579.2,428.9 579.2,430.0 579.1,431.0 579.0,432.1 578.9,433.2 578.8,434.2 578.7,435.3 578.6,436.3 578.5,437.4 578.4,438.4 578.3,439.4 578.2,440.5 578.1,441.5 578.0,442.5 577.9,443.5 577.8,444.5 577.7,445.5 577.6,446.5 577.5,447.5 577.4,448.5 577.3,449.5 577.1,451.4 576.6,457.0 576.0,462.5 575.4,467.8 574.9,473.0 574.3,478.0 573.7,483.0 573.1,487.8 572.6,492.5 572.0,497.1 571.4,501.6 570.9,506.0 570.3,510.4 569.7,514.6 569.2,518.7 568.7,522.8 568.1,526.7 567.6,530.6 567.0,534.5 566.5,538.2 566.0,541.9 565.5,545.5 565.0,549.1 564.5,552.6 564.0,556.0 563.5,559.4 563.0,562.7 562.5,565.9 562.1,569.1 561.6,572.3 561.2,575.3 560.7,578.4 560.3,581.4 559.9,584.3 559.5,587.2 559.0,590.1 558.6,592.9 558.1,595.7 557.7,598.5 557.3,601.2 556.9,603.9 556.5,606.5 556.1,609.1 555.7,611.7 555.4,614.2 555.0,616.7 554.6,619.2 554.3,621.6 553.9,624.0 553.6,626.3 553.3,628.7 553.0,630.9 552.6,633.2 552.3,635.4 552.0,637.6 551.7,639.8 551.5,642.0 551.2,644.1 550.9,646.2 550.6,648.2 550.4,650.3 550.1,652.3 549.9,654.3 549.6,656.3 549.4,658.2 549.1,660.1 548.9,662.0 548.7,663.9 548.5,665.8 548.2,667.6 548.0,669.4 547.8,671.3 547.6,673.0 547.4,674.8 547.2,676.6 547.0,678.3 546.8,680.0 546.6,681.7 546.4,683.4 546.3,685.0 546.1,686.7 545.9,688.3 545.7,689.9 545.6,691.5 545.4,693.1 545.3,694.7 545.1,696.2 544.9,697.8 544.7,699.3 544.6,700.9 544.4,702.4 544.2,703.9 544.1,705.4 543.9,706.9 543.8,708.3 543.6,709.8 543.5,711.2 543.3,712.6 543.2,714.1 543.1,715.4 542.9,716.8 542.8,718.2 542.7,719.6 542.6,720.9 542.5,722.2 542.4,723.5 542.3,724.8 542.3,726.0 542.2,727.3 542.1,728.5 542.0,729.8 542.0,731.0 541.9,732.2 541.8,733.4 541.8,734.6 541.7,735.8 541.7,737.0 541.6,738.2 541.5,739.3 541.5,740.5 541.4,742.4 541.3,746.3 541.2,750.0 541.1,753.6" fill="none" stroke="#000080" stroke-width="1" shape-rendering="crispEdges"/>
<polyline points="863.3,27.7 861.7,32.4 860.1,37.1 858.5,41.6 857.0,46.2 855.4,50.6 853.8,55.0 852.3,59.3 850.8,63.6 849.3,67.8 847.7,72.0 846.2,76.1 844.8,80.2 843.3,84.2 841.8,88.1 840.3,92.1 838.9,95.9 837.5,99.7 836.0,103.5 834.6,107.2 833.2,110.9 831.8,114.6 830.4,118.1 829.1,121.7 827.7,125.2 826.3,128.7 825.0,132.1 823.6,135.5 822.3,138.9 821.0,142.2 819.7,145.5 818.4,148.7 817.1,152.0 815.8,155.1 814.5,158.3 813.3,161.4 812.0,164.5 810.8,167.5 809.5,170.6 808.3,173.6 807.1,176.5 805.9,179.4 804.7,182.3 803.5,185.2 802.3,188.1 801.1,190.9 800.0,193.7 798.8,196.4 797.7,199.2 796.5,201.9 795.4,204.6 794.3,207.2 793.1,209.9 792.0,212.5 790.9,215.1 789.9,217.6 788.8,220.2 787.7,222.7 786.6,225.2 785.6,227.7 784.5,230.1 783.5,232.5 782.4,235.0 781.4,237.3 780.4,239.7 779.4,242.1 778.4,244.4 777.4,246.7 776.4,249.0 775.4,251.3 774.4,253.5 773.5,255.8 772.5,258.0 771.5,260.2 770.6,262.4 769.7,264.5 768.7,266.7 767.8,268.8 766.9,270.9 766.0,273.0 765.0,275.1 764.1,277.1 763.2,279.2 762.4,281.2 761.5,283.2 760.6,285.3 759.7,287.2 758.9,289.2 758.0,291.2 757.2,293.1 756.3,295.0 755.5,297.0 754.6,298.9 753.8,300.7 753.0,302.6 752.2,304.5 751.4,306.3 750.6,308.2 749.8,310.0 749.0,311.8 748.2,313.6 747.4,315.4 746.6,317.1 745.8,318.9 745.1,320.7 744.3,322.4 743.6,324.1 742.9,325.7 742.2,327.4 741.5,329.1 740.8,330.7 740.1,332.3 739.4,334.0 738.7,335.6 738.0,337.2 737.3,338.8 736.6,340.4 736.0,341.9 735.3,343.5 734.6,345.0 734.0,346.6 733.3,348.1 732.7,349.6 732.0,351.2 731.4,352.7 730.7,354.2 730.1,355.6 729.5,357.1 728.8,358.6 728.2,360.0 727.6,361.5 727.0,362.9 726.4,364.4 725.8,365.8 725.2,367.2 724.6,368.6 724.0,370.0 723.4,371.4 722.8,372.8 722.2,374.2 721.6,375.5 721.1,376.9 720.5,378.2 719.9,379.6 719.4,380.9 718.8,382.2 718.2,383.6 717.7,384.9 717.1,386.2 716.6,387.5 716.0,388.8 715.5,390.1 715.0,391.3 714.4,392.6 713.9,393.9 713.4,395.1 712.8,396.4 712.3,397.6 711.8,398.9 711.3,400.1 710.8,401.3 710.3,402.5 709.8,403.7 709.2,405.0 708.7,406.2 708.2,407.3 707.8,408.5 707.3,409.7 706.8,410.9 706.3,412.0 705.8,413.2 705.3,414.4 704.8,415.5 704.4,416.7 703.9,417.8 703.4,418.9 703.0,420.1 702.5,421.2 702.0,422.3 701.6,423.4 701.1,424.5 700.7,425.6 700.2,426.7 699.8,427.8 699.3,428.9 698.9,430.0 698.4,431.0 698.0,432.1 697.6,433.2 697.1,434.2 696.7,435.3 696.3,436.3 695.8,437.4 695.4,438.4 695.0,439.4 694.6,440.5 694.2,441.5 693.7,442.5 693.3,443.5 692.9,444.5 692.5,445.5 692.1,446.5 691.7,447.5 691.3,448.5 690.9,449.5 690.1,451.4 687.9,457.0 685.7,462.5 683.6,467.8 681.6,473.0 679.6,478.0 677.7,483.0 675.8,487.8 674.0,492.5 672.3,497.1 670.5,501.6 668.9,506.0 667.3,510.4 665.7,514.6 664.2,518.7 662.7,522.8 661.2,526.7 659.8,530.6 658.4,534.5 657.1,538.2 655.7,541.9 654.5,545.5 653.2,549.1 652.0,552.6 650.8,556.0 649.6,559.4 648.5,562.7 647.4,565.9 646.3,569.1 645.3,572.3 644.2,575.3 643.2,578.4 642.2,581.4 641.3,584.3 640.3,587.2 639.4,590.1 638.4,592.9 637.5,595.7 636.6,598.5 635.8,601.2 634.9,603.9 634.1,606.5 633.3,609.1 632.5,611.7 631.7,614.2 630.9,616.7 630.2,619.2 629.4,621.6 628.7,624.0 628.0,626.3 627.3,628.7 626.7,630.9 626.0,633.2 625.4,635.4 624.8,637.6 624.1,639.8 623.5,642.0 623.0,644.1 622.4,646.2 621.8,648.2 621.3,650.3 620.7,652.3 620.2,654.3 619.7,656.3 619.2,658.2 618.7,660.1 618.2,662.0 617.7,663.9 617.2,665.8 616.8,667.6 616.3,669.4 615.8,671.3 615.4,673.0 615.0,674.8 614.5,676.6 614.1,678.3 613.7,680.0 613.3,681.7 612.9,683.4 612.5,685.0 612.1,686.7 611.8,688.3 611.4,689.9 611.1,691.5 610.7,693.1 610.4,694.7 610.0,696.2 609.6,697.8 609.3,699.3 608.9,700.9 608.6,702.4 608.2,703.9 607.9,705.4 607.6,706.9 607.3,708.3 607.0,709.8 606.7,711.2 606.4,712.6 606.1,714.1 605.8,715.4 605.5,716.8 605.2,718.2 604.9,719.6 604.7,720.9 604.5,722.2 604.2,723.5 604.0,724.8 603.8,726.0 603.6,727.3 603.4,728.5 603.2,729.8 603.0,731.0 602.8,732.2 602.6,733.4 602.4,734.6 602.2,735.8 602.0,737.0 601.8,738.2 601.7,739.3 601.5,740.5 601.2,742.4 600.7,746.3 600.2,750.0 599.7,753.6" fill="none" stroke="#000080" stroke-width="1" shape-rendering="crispEdges"/>
<rect x="62" y="717" width="599" height="15" fill="#443f00"/>
<polygon points="385.5,400.0 387.3,404.2 388.6,411.1 390.0,417.8 391.5,424.3 392.9,430.7 394.4,436.8 395.9,442.8 397.4,448.7 398.9,454.3 400.5,459.8 402.0,465.2 403.5,470.4 405.0,475.5 406.6,480.5 408.0,485.4 409.5,490.2 411.0,494.8 412.4,499.4 413.8,503.8 415.2,508.2 416.5,512.5 417.9,516.6 419.2,520.7 420.5,524.7 421.7,528.6 422.9,532.5 424.1,536.3 425.2,540.0 426.3,543.7 427.4,547.3 428.5,550.8 429.5,554.2 430.5,557.6 431.5,560.9 432.5,564.2 433.4,567.4 434.3,570.6 435.2,573.7 436.0,576.8 436.8,579.8 437.7,582.7 438.4,585.7 439.2,588.5 439.9,591.4 440.6,594.2 441.2,597.0 441.9,599.7 442.5,602.4 443.1,605.1 443.7,607.7 444.3,610.3 444.9,612.8 445.4,615.3 446.0,617.8 446.5,620.2 447.0,622.6 447.5,625.0 448.0,627.4 448.5,629.7 448.9,631.9 449.4,634.2 449.8,636.4 450.3,638.6 450.7,640.7 451.1,642.9 451.5,645.0 451.9,647.1 452.3,649.1 452.7,651.1 453.1,653.1 453.4,655.1 451.5,657.5 440.8,642.8 439.1,636.0 438.3,630.0 420.6,605.5 424.0,596.3 425.1,592.9 423.1,588.7 425.6,584.5 422.8,576.9 421.4,571.3 417.7,561.7 419.4,555.0 416.4,546.6 418.9,540.7 414.7,535.3 412.2,524.7 410.5,518.8 407.1,510.4 402.0,500.3 400.2,487.4 399.3,484.9 397.6,479.0 389.2,455.4 386.7,441.8 384.5,434.4 386.0,426.7 384.2,416.4 384.5,409.4" fill="#008000" stroke="none" stroke-width="0" shape-rendering="crispEdges"/>
<polygon points="451.5,657.5 452.0,660.0 456.3,665.8 461.5,672.6 473.6,686.3 484.2,699.0 485.2,703.2 486.8,707.4 491.5,711.6 494.7,715.3 494.0,716.5 481.5,709.5 470.5,701.5 460.0,693.7 459.9,693.7 459.6,692.1 459.4,690.5 459.1,688.9 458.9,687.3 458.6,685.7 458.3,684.0 458.1,682.4 457.8,680.7 457.5,679.0 457.3,677.3 457.0,675.5 456.7,673.8 456.4,672.0 456.1,670.2 455.8,668.4 455.5,666.5 455.1,664.7 454.8,662.8 454.5,660.9 454.1,659.0 453.8,657.1" fill="#9a0000" stroke="none" stroke-width="0" shape-rendering="crispEdges"/>
<polyline points="88.2,27.7 78.2,45.0 68.8,61.4 60.1,77.1 51.9,92.0 44.3,106.2 37.1,119.8 30.3,132.9 23.9,145.4 17.9,157.4 12.3,168.9 6.9,180.0 1.9,190.7 -2.9,201.1 -7.4,211.0 -11.7,220.7 -15.8,230.0 -19.6,239.0 -23.3,247.7 -26.7,256.1 -30.0,264.4 -33.1,272.3 -36.1,280.0 -38.9,287.6 -41.6,294.9 -44.2,302.0 -46.6,308.9 -48.9,315.6 -51.1,322.2 -53.1,328.5 -55.0,334.6 -56.7,340.6 -58.4,346.4 -60.0,352.1 -61.6,357.7 -63.0,363.1 -64.4,368.4 -65.7,373.6 -66.9,378.7 -68.1,383.7 -69.2,388.6 -70.3,393.4 -71.2,398.0 -72.2,402.6 -73.1,407.1 -73.9,411.6 -74.7,415.9 -75.5,420.1 -76.2,424.3 -76.8,428.4 -77.4,432.4 -78.0,436.4 -78.6,440.3 -79.1,444.1 -79.5,447.8 -80.0,451.5 -80.3,455.1 -80.7,458.6 -81.0,462.1 -81.3,465.6 -81.6,468.9 -81.8,472.3 -82.0,475.5 -82.2,478.7 -82.4,481.9 -82.5,485.0 -82.6,488.1 -82.7,491.2 -82.8,494.1 -82.8,497.1 -82.9,500.0 -82.9,502.9 -82.9,505.7 -82.9,508.5 -82.8,511.2 -82.8,513.9 -82.7,516.6 -82.6,519.2 -82.5,521.8 -82.4,524.4 -82.2,526.9 -82.1,529.4 -81.9,531.9 -81.7,534.4 -81.6,536.8 -81.4,539.2 -81.2,541.6 -80.9,543.9 -80.7,546.2 -80.5,548.5 -80.2,550.7 -80.0,553.0 -79.7,555.2 -79.4,557.3 -79.1,559.5 -78.8,561.6 -78.5,563.7 -78.2,565.8 -77.8,567.9 -77.5,569.9 -77.1,571.9 -76.8,573.9 -76.4,575.9 -76.1,577.8 -75.7,579.7 -75.3,581.7 -74.9,583.5 -74.5,585.4 -74.1,587.3 -73.7,589.1 -73.3,591.0 -72.9,592.8 -72.5,594.6 -72.1,596.4 -71.7,598.2 -71.3,599.9 -70.8,601.6 -70.4,603.4 -69.9,605.1 -69.5,606.7 -69.0,608.4 -68.6,610.1 -68.1,611.7 -67.7,613.3 -67.2,614.9 -66.7,616.5 -66.2,618.1 -65.7,619.7 -65.3,621.2 -64.8,622.8 -64.3,624.3 -63.8,625.8 -63.3,627.3 -62.8,628.8 -62.2,630.3 -61.7,631.7 -61.2,633.2 -60.7,634.6 -60.1,636.0 -59.6,637.5 -59.1,638.9 -58.5,640.2 -58.0,641.6 -57.5,643.0 -56.9,644.3 -56.4,645.7 -55.8,647.0 -55.2,648.3 -54.7,649.7 -54.1,651.0 -53.6,652.3 -53.0,653.5 -52.4,654.8 -51.9,656.1 -51.3,657.3 -50.7,658.6 -50.1,659.8 -49.6,661.0 -49.0,662.2 -48.4,663.5 -47.8,664.7 -47.2,665.8 -46.7,667.0 -46.1,668.2 -45.5,669.4 -44.9,670.5 -44.3,671.7 -43.7,672.8 -43.1,674.0 -42.5,675.1 -41.9,676.2 -41.4,677.4 -40.8,678.5 -40.2,679.6 -39.6,680.7 -39.0,681.7 -38.4,682.8 -37.8,683.9 -37.1,685.0 -36.5,686.0 -35.9,687.1 -35.3,688.1 -34.7,689.1 -34.1,690.2 -33.5,691.2 -32.9,692.2 -32.3,693.2 -31.7,694.2 -31.1,695.2 -30.5,696.2 -29.9,697.3 -29.3,698.3 -28.7,699.2 -28.1,700.2 -27.5,701.2 -26.9,702.2 -26.3,703.2 -25.7,704.1 -25.1,705.1 -24.5,706.0 -23.9,707.0 -23.3,707.9 -22.6,708.8 -22.0,709.8 -21.4,710.7 -20.8,711.6 -20.2,712.5 -19.6,713.4 -19.0,714.3 -18.4,715.2 -17.8,716.1 -17.2,717.0 -16.6,717.9 -15.9,718.8 -15.3,719.6 -14.7,720.5 -14.1,721.3 -13.4,722.2 -12.8,723.0 -12.1,723.8 -11.5,724.6 -10.9,725.5 -10.2,726.3 -9.6,727.1 -9.0,727.9 -8.3,728.7 -7.7,729.5 -7.1,730.3 -6.4,731.1 -5.8,731.8 -5.1,732.6 -4.5,733.4 -3.9,734.2 -3.2,734.9 -2.6,735.7 -2.0,736.5 -1.3,737.2 -0.7,738.0 -0.0,738.7 0.6,739.5 1.2,740.2 1.9,740.9 2.5,741.7 3.2,742.4 3.8,743.1 4.4,743.8 5.1,744.6 5.7,745.3 6.4,746.0 7.0,746.7 7.6,747.4 8.3,748.1 8.9,748.8 9.5,749.5 10.2,750.2 10.8,750.9 11.5,751.6 12.1,752.2 12.7,752.9 13.4,753.6" fill="none" stroke="#8c0000" stroke-width="1" shape-rendering="crispEdges"/>
<polyline points="118.8,27.7 109.1,45.0 100.1,61.4 91.7,77.1 83.9,92.0 76.5,106.2 69.6,119.8 63.1,132.9 57.1,145.4 51.3,157.4 46.0,168.9 40.9,180.0 36.1,190.7 31.6,201.1 27.3,211.0 23.3,220.7 19.5,230.0 15.9,239.0 12.5,247.7 9.2,256.1 6.2,264.4 3.3,272.3 0.5,280.0 -2.1,287.6 -4.6,294.9 -6.9,302.0 -9.1,308.9 -11.2,315.6 -13.2,322.2 -15.0,328.5 -16.7,334.6 -18.2,340.6 -19.7,346.4 -21.1,352.1 -22.5,357.7 -23.7,363.1 -24.9,368.4 -26.0,373.6 -27.1,378.7 -28.1,383.7 -29.0,388.6 -29.9,393.4 -30.7,398.0 -31.5,402.6 -32.2,407.1 -32.9,411.6 -33.5,415.9 -34.1,420.1 -34.6,424.3 -35.1,428.4 -35.6,432.4 -36.0,436.4 -36.4,440.3 -36.7,444.1 -37.1,447.8 -37.3,451.5 -37.6,455.1 -37.8,458.6 -37.9,462.1 -38.1,465.6 -38.2,468.9 -38.3,472.3 -38.4,475.5 -38.4,478.7 -38.4,481.9 -38.4,485.0 -38.4,488.1 -38.4,491.2 -38.3,494.1 -38.2,497.1 -38.1,500.0 -38.0,502.9 -37.9,505.7 -37.7,508.5 -37.5,511.2 -37.3,513.9 -37.1,516.6 -36.9,519.2 -36.7,521.8 -36.4,524.4 -36.2,526.9 -35.9,529.4 -35.6,531.9 -35.3,534.4 -35.0,536.8 -34.7,539.2 -34.4,541.6 -34.0,543.9 -33.7,546.2 -33.3,548.5 -33.0,550.7 -32.6,553.0 -32.2,555.2 -31.8,557.3 -31.4,559.5 -31.0,561.6 -30.5,563.7 -30.1,565.8 -29.7,567.9 -29.2,569.9 -28.7,571.9 -28.3,573.9 -27.8,575.9 -27.3,577.8 -26.8,579.7 -26.3,581.7 -25.8,583.5 -25.3,585.4 -24.8,587.3 -24.3,589.1 -23.8,591.0 -23.3,592.8 -22.8,594.6 -22.3,596.4 -21.8,598.2 -21.3,599.9 -20.7,601.6 -20.2,603.4 -19.7,605.1 -19.1,606.7 -18.6,608.4 -18.0,610.1 -17.4,611.7 -16.9,613.3 -16.3,614.9 -15.7,616.5 -15.2,618.1 -14.6,619.7 -14.0,621.2 -13.4,622.8 -12.8,624.3 -12.2,625.8 -11.6,627.3 -11.0,628.8 -10.4,630.3 -9.8,631.7 -9.2,633.2 -8.6,634.6 -7.9,636.0 -7.3,637.5 -6.7,638.9 -6.1,640.2 -5.4,641.6 -4.8,643.0 -4.2,644.3 -3.5,645.7 -2.9,647.0 -2.2,648.3 -1.6,649.7 -0.9,651.0 -0.3,652.3 0.4,653.5 1.0,654.8 1.7,656.1 2.3,657.3 3.0,658.6 3.6,659.8 4.3,661.0 5.0,662.2 5.6,663.5 6.3,664.7 7.0,665.8 7.6,667.0 8.3,668.2 9.0,669.4 9.6,670.5 10.3,671.7 11.0,672.8 11.6,674.0 12.3,675.1 13.0,676.2 13.7,677.4 14.3,678.5 15.0,679.6 15.7,680.7 16.4,681.7 17.1,682.8 17.7,683.9 18.4,685.0 19.1,686.0 19.8,687.1 20.5,688.1 21.2,689.1 21.9,690.2 22.5,691.2 23.2,692.2 23.9,693.2 24.6,694.2 25.3,695.2 26.0,696.2 26.6,697.3 27.3,698.3 28.0,699.2 28.6,700.2 29.3,701.2 30.0,702.2 30.7,703.2 31.3,704.1 32.0,705.1 32.7,706.0 33.4,707.0 34.1,707.9 34.7,708.8 35.4,709.8 36.1,710.7 36.8,711.6 37.5,712.5 38.1,713.4 38.8,714.3 39.5,715.2 40.2,716.1 40.9,717.0 41.5,717.9 42.2,718.8 42.9,719.6 43.6,720.5 44.3,721.3 45.0,722.2 45.7,723.0 46.4,723.8 47.1,724.6 47.8,725.5 48.5,726.3 49.2,727.1 49.9,727.9 50.7,728.7 51.4,729.5 52.1,730.3 52.8,731.1 53.5,731.8 54.2,732.6 54.9,733.4 55.6,734.2 56.3,734.9 57.0,735.7 57.7,736.5 58.4,737.2 59.1,738.0 59.8,738.7 60.5,739.5 61.2,740.2 61.9,740.9 62.6,741.7 63.3,742.4 64.0,743.1 64.7,743.8 65.4,744.6 66.1,745.3 66.8,746.0 67.5,746.7 68.2,747.4 68.9,748.1 69.6,748.8 70.3,749.5 71.0,750.2 71.7,750.9 72.4,751.6 73.1,752.2 73.9,752.9 74.6,753.6" fill="none" stroke="#8c0000" stroke-width="1" shape-rendering="crispEdges"/>
<polyline points="149.4,27.7 140.1,45.0 131.4,61.4 123.3,77.1 115.8,92.0 108.7,106.2 102.2,119.8 96.0,132.9 90.2,145.4 84.8,157.4 79.6,168.9 74.8,180.0 70.3,190.7 66.1,201.1 62.1,211.0 58.3,220.7 54.7,230.0 51.4,239.0 48.2,247.7 45.2,256.1 42.4,264.4 39.7,272.3 37.2,280.0 34.8,287.6 32.5,294.9 30.4,302.0 28.4,308.9 26.5,315.6 24.7,322.2 23.1,328.5 21.7,334.6 20.3,340.6 19.0,346.4 17.7,352.1 16.6,357.7 15.5,363.1 14.5,368.4 13.6,373.6 12.7,378.7 11.9,383.7 11.1,388.6 10.4,393.4 9.8,398.0 9.2,402.6 8.6,407.1 8.1,411.6 7.7,415.9 7.3,420.1 6.9,424.3 6.6,428.4 6.3,432.4 6.0,436.4 5.8,440.3 5.6,444.1 5.4,447.8 5.3,451.5 5.2,455.1 5.2,458.6 5.1,462.1 5.1,465.6 5.2,468.9 5.2,472.3 5.3,475.5 5.4,478.7 5.5,481.9 5.6,485.0 5.8,488.1 6.0,491.2 6.2,494.1 6.4,497.1 6.6,500.0 6.9,502.9 7.2,505.7 7.5,508.5 7.8,511.2 8.1,513.9 8.4,516.6 8.8,519.2 9.1,521.8 9.5,524.4 9.9,526.9 10.3,529.4 10.7,531.9 11.1,534.4 11.5,536.8 12.0,539.2 12.4,541.6 12.9,543.9 13.3,546.2 13.8,548.5 14.3,550.7 14.8,553.0 15.3,555.2 15.8,557.3 16.3,559.5 16.9,561.6 17.4,563.7 18.0,565.8 18.5,567.9 19.1,569.9 19.7,571.9 20.2,573.9 20.8,575.9 21.4,577.8 22.0,579.7 22.6,581.7 23.2,583.5 23.8,585.4 24.4,587.3 25.0,589.1 25.6,591.0 26.2,592.8 26.9,594.6 27.5,596.4 28.1,598.2 28.7,599.9 29.4,601.6 30.0,603.4 30.6,605.1 31.3,606.7 31.9,608.4 32.6,610.1 33.3,611.7 33.9,613.3 34.6,614.9 35.3,616.5 35.9,618.1 36.6,619.7 37.3,621.2 38.0,622.8 38.7,624.3 39.3,625.8 40.0,627.3 40.7,628.8 41.4,630.3 42.1,631.7 42.8,633.2 43.6,634.6 44.3,636.0 45.0,637.5 45.7,638.9 46.4,640.2 47.1,641.6 47.9,643.0 48.6,644.3 49.3,645.7 50.0,647.0 50.8,648.3 51.5,649.7 52.2,651.0 53.0,652.3 53.7,653.5 54.5,654.8 55.2,656.1 55.9,657.3 56.7,658.6 57.4,659.8 58.2,661.0 58.9,662.2 59.7,663.5 60.4,664.7 61.2,665.8 61.9,667.0 62.7,668.2 63.4,669.4 64.2,670.5 64.9,671.7 65.7,672.8 66.4,674.0 67.2,675.1 67.9,676.2 68.7,677.4 69.5,678.5 70.2,679.6 71.0,680.7 71.7,681.7 72.5,682.8 73.3,683.9 74.0,685.0 74.8,686.0 75.5,687.1 76.3,688.1 77.1,689.1 77.8,690.2 78.6,691.2 79.4,692.2 80.1,693.2 80.9,694.2 81.6,695.2 82.4,696.2 83.1,697.3 83.9,698.3 84.6,699.2 85.4,700.2 86.1,701.2 86.9,702.2 87.6,703.2 88.4,704.1 89.1,705.1 89.9,706.0 90.6,707.0 91.4,707.9 92.1,708.8 92.9,709.8 93.6,710.7 94.4,711.6 95.1,712.5 95.9,713.4 96.6,714.3 97.4,715.2 98.1,716.1 98.9,717.0 99.6,717.9 100.4,718.8 101.1,719.6 101.9,720.5 102.7,721.3 103.5,722.2 104.2,723.0 105.0,723.8 105.8,724.6 106.6,725.5 107.3,726.3 108.1,727.1 108.9,727.9 109.6,728.7 110.4,729.5 111.2,730.3 112.0,731.1 112.7,731.8 113.5,732.6 114.3,733.4 115.0,734.2 115.8,734.9 116.6,735.7 117.3,736.5 118.1,737.2 118.9,738.0 119.7,738.7 120.4,739.5 121.2,740.2 122.0,740.9 122.7,741.7 123.5,742.4 124.3,743.1 125.0,743.8 125.8,744.6 126.6,745.3 127.3,746.0 128.1,746.7 128.9,747.4 129.6,748.1 130.4,748.8 131.1,749.5 131.9,750.2 132.7,750.9 133.4,751.6 134.2,752.2 135.0,752.9 135.7,753.6" fill="none" stroke="#8c0000" stroke-width="1" shape-rendering="crispEdges"/>
<polyline points="180.1,27.7 171.1,45.0 162.7,61.4 155.0,77.1 147.7,92.0 141.0,106.2 134.7,119.8 128.8,132.9 123.3,145.4 118.2,157.4 113.3,168.9 108.8,180.0 104.6,190.7 100.6,201.1 96.8,211.0 93.3,220.7 90.0,230.0 86.8,239.0 83.9,247.7 81.1,256.1 78.5,264.4 76.1,272.3 73.8,280.0 71.6,287.6 69.6,294.9 67.7,302.0 65.9,308.9 64.2,315.6 62.6,322.2 61.2,328.5 60.0,334.6 58.8,340.6 57.7,346.4 56.6,352.1 55.7,357.7 54.8,363.1 54.0,368.4 53.2,373.6 52.5,378.7 51.9,383.7 51.3,388.6 50.8,393.4 50.3,398.0 49.9,402.6 49.5,407.1 49.2,411.6 48.9,415.9 48.6,420.1 48.4,424.3 48.2,428.4 48.1,432.4 48.0,436.4 47.9,440.3 47.9,444.1 47.9,447.8 47.9,451.5 48.0,455.1 48.1,458.6 48.2,462.1 48.3,465.6 48.5,468.9 48.7,472.3 48.9,475.5 49.2,478.7 49.4,481.9 49.7,485.0 50.0,488.1 50.3,491.2 50.7,494.1 51.0,497.1 51.4,500.0 51.8,502.9 52.2,505.7 52.6,508.5 53.1,511.2 53.5,513.9 54.0,516.6 54.4,519.2 54.9,521.8 55.4,524.4 55.9,526.9 56.5,529.4 57.0,531.9 57.5,534.4 58.1,536.8 58.6,539.2 59.2,541.6 59.8,543.9 60.4,546.2 61.0,548.5 61.6,550.7 62.2,553.0 62.8,555.2 63.4,557.3 64.1,559.5 64.7,561.6 65.4,563.7 66.0,565.8 66.7,567.9 67.4,569.9 68.1,571.9 68.7,573.9 69.4,575.9 70.1,577.8 70.8,579.7 71.5,581.7 72.3,583.5 73.0,585.4 73.7,587.3 74.4,589.1 75.1,591.0 75.8,592.8 76.5,594.6 77.3,596.4 78.0,598.2 78.7,599.9 79.4,601.6 80.2,603.4 80.9,605.1 81.7,606.7 82.4,608.4 83.2,610.1 83.9,611.7 84.7,613.3 85.5,614.9 86.2,616.5 87.0,618.1 87.8,619.7 88.6,621.2 89.3,622.8 90.1,624.3 90.9,625.8 91.7,627.3 92.5,628.8 93.3,630.3 94.1,631.7 94.9,633.2 95.7,634.6 96.5,636.0 97.3,637.5 98.1,638.9 98.9,640.2 99.7,641.6 100.5,643.0 101.3,644.3 102.2,645.7 103.0,647.0 103.8,648.3 104.6,649.7 105.4,651.0 106.3,652.3 107.1,653.5 107.9,654.8 108.7,656.1 109.6,657.3 110.4,658.6 111.2,659.8 112.1,661.0 112.9,662.2 113.7,663.5 114.6,664.7 115.4,665.8 116.2,667.0 117.1,668.2 117.9,669.4 118.7,670.5 119.6,671.7 120.4,672.8 121.2,674.0 122.1,675.1 122.9,676.2 123.7,677.4 124.6,678.5 125.4,679.6 126.2,680.7 127.1,681.7 127.9,682.8 128.8,683.9 129.6,685.0 130.4,686.0 131.3,687.1 132.1,688.1 133.0,689.1 133.8,690.2 134.6,691.2 135.5,692.2 136.3,693.2 137.2,694.2 138.0,695.2 138.8,696.2 139.6,697.3 140.5,698.3 141.3,699.2 142.1,700.2 142.9,701.2 143.7,702.2 144.6,703.2 145.4,704.1 146.2,705.1 147.0,706.0 147.9,707.0 148.7,707.9 149.5,708.8 150.3,709.8 151.1,710.7 152.0,711.6 152.8,712.5 153.6,713.4 154.4,714.3 155.3,715.2 156.1,716.1 156.9,717.0 157.7,717.9 158.5,718.8 159.4,719.6 160.2,720.5 161.1,721.3 161.9,722.2 162.7,723.0 163.6,723.8 164.4,724.6 165.3,725.5 166.1,726.3 166.9,727.1 167.8,727.9 168.6,728.7 169.5,729.5 170.3,730.3 171.1,731.1 172.0,731.8 172.8,732.6 173.7,733.4 174.5,734.2 175.3,734.9 176.2,735.7 177.0,736.5 177.8,737.2 178.7,738.0 179.5,738.7 180.3,739.5 181.2,740.2 182.0,740.9 182.8,741.7 183.7,742.4 184.5,743.1 185.3,743.8 186.2,744.6 187.0,745.3 187.8,746.0 188.6,746.7 189.5,747.4 190.3,748.1 191.1,748.8 191.9,749.5 192.8,750.2 193.6,750.9 194.4,751.6 195.2,752.2 196.1,752.9 196.9,753.6" fill="none" stroke="#8c0000" stroke-width="1" shape-rendering="crispEdges"/>
<polyline points="210.7,27.7 202.0,45.0 194.0,61.4 186.6,77.1 179.7,92.0 173.2,106.2 167.3,119.8 161.7,132.9 156.5,145.4 151.6,157.4 147.0,168.9 142.8,180.0 138.8,190.7 135.0,201.1 131.5,211.0 128.3,220.7 125.2,230.0 122.3,239.0 119.6,247.7 117.1,256.1 114.7,264.4 112.5,272.3 110.4,280.0 108.5,287.6 106.6,294.9 104.9,302.0 103.4,308.9 101.9,315.6 100.5,322.2 99.3,328.5 98.3,334.6 97.3,340.6 96.4,346.4 95.5,352.1 94.8,357.7 94.1,363.1 93.4,368.4 92.9,373.6 92.3,378.7 91.9,383.7 91.5,388.6 91.1,393.4 90.8,398.0 90.6,402.6 90.4,407.1 90.2,411.6 90.1,415.9 90.0,420.1 89.9,424.3 89.9,428.4 89.9,432.4 90.0,436.4 90.1,440.3 90.2,444.1 90.3,447.8 90.5,451.5 90.7,455.1 91.0,458.6 91.3,462.1 91.6,465.6 91.9,468.9 92.2,472.3 92.6,475.5 93.0,478.7 93.4,481.9 93.8,485.0 94.2,488.1 94.7,491.2 95.2,494.1 95.7,497.1 96.2,500.0 96.7,502.9 97.2,505.7 97.8,508.5 98.3,511.2 98.9,513.9 99.5,516.6 100.1,519.2 100.7,521.8 101.4,524.4 102.0,526.9 102.6,529.4 103.3,531.9 104.0,534.4 104.6,536.8 105.3,539.2 106.0,541.6 106.7,543.9 107.4,546.2 108.1,548.5 108.8,550.7 109.6,553.0 110.3,555.2 111.0,557.3 111.8,559.5 112.6,561.6 113.3,563.7 114.1,565.8 114.9,567.9 115.7,569.9 116.5,571.9 117.2,573.9 118.1,575.9 118.9,577.8 119.7,579.7 120.5,581.7 121.3,583.5 122.1,585.4 123.0,587.3 123.8,589.1 124.6,591.0 125.4,592.8 126.2,594.6 127.0,596.4 127.9,598.2 128.7,599.9 129.5,601.6 130.4,603.4 131.2,605.1 132.1,606.7 132.9,608.4 133.8,610.1 134.6,611.7 135.5,613.3 136.4,614.9 137.2,616.5 138.1,618.1 139.0,619.7 139.8,621.2 140.7,622.8 141.6,624.3 142.5,625.8 143.3,627.3 144.2,628.8 145.1,630.3 146.0,631.7 146.9,633.2 147.8,634.6 148.7,636.0 149.6,637.5 150.5,638.9 151.4,640.2 152.3,641.6 153.2,643.0 154.1,644.3 155.0,645.7 155.9,647.0 156.8,648.3 157.7,649.7 158.6,651.0 159.5,652.3 160.4,653.5 161.4,654.8 162.3,656.1 163.2,657.3 164.1,658.6 165.0,659.8 165.9,661.0 166.9,662.2 167.8,663.5 168.7,664.7 169.6,665.8 170.5,667.0 171.4,668.2 172.3,669.4 173.3,670.5 174.2,671.7 175.1,672.8 176.0,674.0 176.9,675.1 177.8,676.2 178.8,677.4 179.7,678.5 180.6,679.6 181.5,680.7 182.4,681.7 183.3,682.8 184.3,683.9 185.2,685.0 186.1,686.0 187.0,687.1 187.9,688.1 188.8,689.1 189.8,690.2 190.7,691.2 191.6,692.2 192.5,693.2 193.4,694.2 194.3,695.2 195.2,696.2 196.1,697.3 197.0,698.3 197.9,699.2 198.8,700.2 199.7,701.2 200.6,702.2 201.5,703.2 202.4,704.1 203.3,705.1 204.2,706.0 205.1,707.0 206.0,707.9 206.9,708.8 207.8,709.8 208.7,710.7 209.6,711.6 210.5,712.5 211.4,713.4 212.2,714.3 213.1,715.2 214.0,716.1 214.9,717.0 215.8,717.9 216.7,718.8 217.6,719.6 218.5,720.5 219.4,721.3 220.3,722.2 221.2,723.0 222.2,723.8 223.1,724.6 224.0,725.5 224.9,726.3 225.8,727.1 226.7,727.9 227.6,728.7 228.5,729.5 229.4,730.3 230.3,731.1 231.2,731.8 232.1,732.6 233.0,733.4 233.9,734.2 234.8,734.9 235.7,735.7 236.6,736.5 237.5,737.2 238.4,738.0 239.3,738.7 240.2,739.5 241.1,740.2 242.0,740.9 242.9,741.7 243.8,742.4 244.7,743.1 245.6,743.8 246.5,744.6 247.4,745.3 248.3,746.0 249.2,746.7 250.1,747.4 251.0,748.1 251.9,748.8 252.7,749.5 253.6,750.2 254.5,750.9 255.4,751.6 256.3,752.2 257.2,752.9 258.1,753.6" fill="none" stroke="#8c0000" stroke-width="1" shape-rendering="crispEdges"/>
<polyline points="241.3,27.7 233.0,45.0 225.3,61.4 218.2,77.1 211.6,92.0 205.5,106.2 199.8,119.8 194.5,132.9 189.6,145.4 185.0,157.4 180.7,168.9 176.7,180.0 173.0,190.7 169.5,201.1 166.3,211.0 163.3,220.7 160.4,230.0 157.8,239.0 155.3,247.7 153.0,256.1 150.9,264.4 148.9,272.3 147.0,280.0 145.3,287.6 143.7,294.9 142.2,302.0 140.8,308.9 139.6,315.6 138.4,322.2 137.4,328.5 136.6,334.6 135.8,340.6 135.1,346.4 134.4,352.1 133.8,357.7 133.3,363.1 132.9,368.4 132.5,373.6 132.2,378.7 131.9,383.7 131.7,388.6 131.5,393.4 131.4,398.0 131.3,402.6 131.2,407.1 131.2,411.6 131.3,415.9 131.3,420.1 131.5,424.3 131.6,428.4 131.8,432.4 132.0,436.4 132.2,440.3 132.5,444.1 132.8,447.8 133.1,451.5 133.5,455.1 133.9,458.6 134.3,462.1 134.8,465.6 135.2,468.9 135.7,472.3 136.2,475.5 136.8,478.7 137.3,481.9 137.9,485.0 138.4,488.1 139.0,491.2 139.6,494.1 140.3,497.1 140.9,500.0 141.6,502.9 142.2,505.7 142.9,508.5 143.6,511.2 144.3,513.9 145.1,516.6 145.8,519.2 146.5,521.8 147.3,524.4 148.1,526.9 148.8,529.4 149.6,531.9 150.4,534.4 151.2,536.8 152.0,539.2 152.8,541.6 153.6,543.9 154.4,546.2 155.3,548.5 156.1,550.7 156.9,553.0 157.8,555.2 158.7,557.3 159.5,559.5 160.4,561.6 161.3,563.7 162.2,565.8 163.1,567.9 164.0,569.9 164.9,571.9 165.8,573.9 166.7,575.9 167.6,577.8 168.5,579.7 169.4,581.7 170.4,583.5 171.3,585.4 172.2,587.3 173.1,589.1 174.1,591.0 175.0,592.8 175.9,594.6 176.8,596.4 177.8,598.2 178.7,599.9 179.6,601.6 180.6,603.4 181.5,605.1 182.5,606.7 183.4,608.4 184.4,610.1 185.3,611.7 186.3,613.3 187.2,614.9 188.2,616.5 189.2,618.1 190.1,619.7 191.1,621.2 192.1,622.8 193.0,624.3 194.0,625.8 195.0,627.3 196.0,628.8 197.0,630.3 197.9,631.7 198.9,633.2 199.9,634.6 200.9,636.0 201.9,637.5 202.9,638.9 203.9,640.2 204.9,641.6 205.8,643.0 206.8,644.3 207.8,645.7 208.8,647.0 209.8,648.3 210.8,649.7 211.8,651.0 212.8,652.3 213.8,653.5 214.8,654.8 215.8,656.1 216.8,657.3 217.8,658.6 218.8,659.8 219.8,661.0 220.8,662.2 221.8,663.5 222.8,664.7 223.8,665.8 224.8,667.0 225.8,668.2 226.8,669.4 227.8,670.5 228.8,671.7 229.8,672.8 230.8,674.0 231.8,675.1 232.8,676.2 233.8,677.4 234.8,678.5 235.8,679.6 236.8,680.7 237.8,681.7 238.8,682.8 239.8,683.9 240.8,685.0 241.8,686.0 242.7,687.1 243.7,688.1 244.7,689.1 245.7,690.2 246.7,691.2 247.7,692.2 248.7,693.2 249.7,694.2 250.7,695.2 251.7,696.2 252.6,697.3 253.6,698.3 254.6,699.2 255.5,700.2 256.5,701.2 257.5,702.2 258.5,703.2 259.4,704.1 260.4,705.1 261.4,706.0 262.3,707.0 263.3,707.9 264.3,708.8 265.2,709.8 266.2,710.7 267.2,711.6 268.1,712.5 269.1,713.4 270.1,714.3 271.0,715.2 272.0,716.1 272.9,717.0 273.9,717.9 274.9,718.8 275.8,719.6 276.8,720.5 277.8,721.3 278.8,722.2 279.8,723.0 280.7,723.8 281.7,724.6 282.7,725.5 283.7,726.3 284.6,727.1 285.6,727.9 286.6,728.7 287.6,729.5 288.5,730.3 289.5,731.1 290.5,731.8 291.5,732.6 292.4,733.4 293.4,734.2 294.4,734.9 295.3,735.7 296.3,736.5 297.3,737.2 298.2,738.0 299.2,738.7 300.1,739.5 301.1,740.2 302.1,740.9 303.0,741.7 304.0,742.4 305.0,743.1 305.9,743.8 306.9,744.6 307.8,745.3 308.8,746.0 309.7,746.7 310.7,747.4 311.6,748.1 312.6,748.8 313.5,749.5 314.5,750.2 315.4,750.9 316.4,751.6 317.3,752.2 318.3,752.9 319.2,753.6" fill="none" stroke="#8c0000" stroke-width="1" shape-rendering="crispEdges"/>
<polyline points="271.9,27.7 264.0,45.0 256.6,61.4 249.8,77.1 243.6,92.0 237.7,106.2 232.4,119.8 227.4,132.9 222.7,145.4 218.4,157.4 214.4,168.9 210.7,180.0 207.2,190.7 204.0,201.1 201.0,211.0 198.3,220.7 195.7,230.0 193.3,239.0 191.1,247.7 189.0,256.1 187.1,264.4 185.3,272.3 183.7,280.0 182.2,287.6 180.8,294.9 179.5,302.0 178.3,308.9 177.3,315.6 176.3,322.2 175.6,328.5 174.9,334.6 174.3,340.6 173.8,346.4 173.3,352.1 172.9,357.7 172.6,363.1 172.3,368.4 172.1,373.6 172.0,378.7 171.9,383.7 171.8,388.6 171.8,393.4 171.9,398.0 172.0,402.6 172.1,407.1 172.3,411.6 172.5,415.9 172.7,420.1 173.0,424.3 173.3,428.4 173.6,432.4 174.0,436.4 174.4,440.3 174.8,444.1 175.3,447.8 175.8,451.5 176.3,455.1 176.8,458.6 177.4,462.1 178.0,465.6 178.6,468.9 179.2,472.3 179.9,475.5 180.5,478.7 181.2,481.9 181.9,485.0 182.7,488.1 183.4,491.2 184.1,494.1 184.9,497.1 185.7,500.0 186.5,502.9 187.3,505.7 188.1,508.5 188.9,511.2 189.8,513.9 190.6,516.6 191.5,519.2 192.3,521.8 193.2,524.4 194.1,526.9 195.0,529.4 195.9,531.9 196.8,534.4 197.7,536.8 198.6,539.2 199.6,541.6 200.5,543.9 201.5,546.2 202.4,548.5 203.4,550.7 204.3,553.0 205.3,555.2 206.3,557.3 207.3,559.5 208.2,561.6 209.2,563.7 210.2,565.8 211.2,567.9 212.2,569.9 213.3,571.9 214.3,573.9 215.3,575.9 216.3,577.8 217.3,579.7 218.4,581.7 219.4,583.5 220.5,585.4 221.5,587.3 222.5,589.1 223.5,591.0 224.6,592.8 225.6,594.6 226.6,596.4 227.6,598.2 228.7,599.9 229.7,601.6 230.8,603.4 231.8,605.1 232.9,606.7 233.9,608.4 235.0,610.1 236.0,611.7 237.1,613.3 238.1,614.9 239.2,616.5 240.3,618.1 241.3,619.7 242.4,621.2 243.4,622.8 244.5,624.3 245.6,625.8 246.6,627.3 247.7,628.8 248.8,630.3 249.9,631.7 250.9,633.2 252.0,634.6 253.1,636.0 254.2,637.5 255.3,638.9 256.3,640.2 257.4,641.6 258.5,643.0 259.6,644.3 260.7,645.7 261.8,647.0 262.8,648.3 263.9,649.7 265.0,651.0 266.1,652.3 267.2,653.5 268.3,654.8 269.3,656.1 270.4,657.3 271.5,658.6 272.6,659.8 273.7,661.0 274.8,662.2 275.9,663.5 276.9,664.7 278.0,665.8 279.1,667.0 280.2,668.2 281.3,669.4 282.3,670.5 283.4,671.7 284.5,672.8 285.6,674.0 286.7,675.1 287.7,676.2 288.8,677.4 289.9,678.5 291.0,679.6 292.0,680.7 293.1,681.7 294.2,682.8 295.3,683.9 296.3,685.0 297.4,686.0 298.5,687.1 299.6,688.1 300.6,689.1 301.7,690.2 302.8,691.2 303.8,692.2 304.9,693.2 306.0,694.2 307.0,695.2 308.1,696.2 309.1,697.3 310.2,698.3 311.2,699.2 312.3,700.2 313.3,701.2 314.4,702.2 315.4,703.2 316.4,704.1 317.5,705.1 318.5,706.0 319.6,707.0 320.6,707.9 321.6,708.8 322.7,709.8 323.7,710.7 324.8,711.6 325.8,712.5 326.8,713.4 327.9,714.3 328.9,715.2 329.9,716.1 331.0,717.0 332.0,717.9 333.0,718.8 334.1,719.6 335.1,720.5 336.2,721.3 337.2,722.2 338.3,723.0 339.3,723.8 340.4,724.6 341.4,725.5 342.4,726.3 343.5,727.1 344.5,727.9 345.6,728.7 346.6,729.5 347.7,730.3 348.7,731.1 349.7,731.8 350.8,732.6 351.8,733.4 352.8,734.2 353.9,734.9 354.9,735.7 355.9,736.5 357.0,737.2 358.0,738.0 359.0,738.7 360.1,739.5 361.1,740.2 362.1,740.9 363.1,741.7 364.2,742.4 365.2,743.1 366.2,743.8 367.2,744.6 368.2,745.3 369.3,746.0 370.3,746.7 371.3,747.4 372.3,748.1 373.3,748.8 374.3,749.5 375.4,750.2 376.4,750.9 377.4,751.6 378.4,752.2 379.4,752.9 380.4,753.6" fill="none" stroke="#8c0000" stroke-width="1" shape-rendering="crispEdges"/>
<polyline points="302.6,27.7 294.9,45.0 287.9,61.4 281.5,77.1 275.5,92.0 270.0,106.2 264.9,119.8 260.2,132.9 255.9,145.4 251.8,157.4 248.1,168.9 244.7,180.0 241.5,190.7 238.5,201.1 235.8,211.0 233.2,220.7 230.9,230.0 228.8,239.0 226.8,247.7 224.9,256.1 223.3,264.4 221.7,272.3 220.3,280.0 219.0,287.6 217.9,294.9 216.8,302.0 215.8,308.9 215.0,315.6 214.2,322.2 213.7,328.5 213.2,334.6 212.8,340.6 212.5,346.4 212.2,352.1 212.0,357.7 211.9,363.1 211.8,368.4 211.8,373.6 211.8,378.7 211.9,383.7 212.0,388.6 212.2,393.4 212.4,398.0 212.7,402.6 212.9,407.1 213.3,411.6 213.7,415.9 214.1,420.1 214.5,424.3 215.0,428.4 215.5,432.4 216.0,436.4 216.6,440.3 217.1,444.1 217.7,447.8 218.4,451.5 219.1,455.1 219.8,458.6 220.5,462.1 221.2,465.6 222.0,468.9 222.7,472.3 223.5,475.5 224.3,478.7 225.2,481.9 226.0,485.0 226.9,488.1 227.7,491.2 228.6,494.1 229.5,497.1 230.4,500.0 231.4,502.9 232.3,505.7 233.2,508.5 234.2,511.2 235.2,513.9 236.1,516.6 237.1,519.2 238.1,521.8 239.1,524.4 240.2,526.9 241.2,529.4 242.2,531.9 243.2,534.4 244.3,536.8 245.3,539.2 246.4,541.6 247.4,543.9 248.5,546.2 249.6,548.5 250.6,550.7 251.7,553.0 252.8,555.2 253.9,557.3 255.0,559.5 256.1,561.6 257.2,563.7 258.3,565.8 259.4,567.9 260.5,569.9 261.7,571.9 262.8,573.9 263.9,575.9 265.0,577.8 266.2,579.7 267.3,581.7 268.5,583.5 269.6,585.4 270.7,587.3 271.9,589.1 273.0,591.0 274.1,592.8 275.3,594.6 276.4,596.4 277.5,598.2 278.7,599.9 279.8,601.6 281.0,603.4 282.1,605.1 283.3,606.7 284.4,608.4 285.6,610.1 286.7,611.7 287.9,613.3 289.0,614.9 290.2,616.5 291.3,618.1 292.5,619.7 293.6,621.2 294.8,622.8 296.0,624.3 297.1,625.8 298.3,627.3 299.5,628.8 300.6,630.3 301.8,631.7 303.0,633.2 304.1,634.6 305.3,636.0 306.5,637.5 307.6,638.9 308.8,640.2 310.0,641.6 311.2,643.0 312.3,644.3 313.5,645.7 314.7,647.0 315.8,648.3 317.0,649.7 318.2,651.0 319.4,652.3 320.5,653.5 321.7,654.8 322.9,656.1 324.1,657.3 325.2,658.6 326.4,659.8 327.6,661.0 328.7,662.2 329.9,663.5 331.1,664.7 332.2,665.8 333.4,667.0 334.6,668.2 335.7,669.4 336.9,670.5 338.0,671.7 339.2,672.8 340.4,674.0 341.5,675.1 342.7,676.2 343.8,677.4 345.0,678.5 346.1,679.6 347.3,680.7 348.5,681.7 349.6,682.8 350.8,683.9 351.9,685.0 353.1,686.0 354.2,687.1 355.4,688.1 356.5,689.1 357.7,690.2 358.8,691.2 360.0,692.2 361.1,693.2 362.3,694.2 363.4,695.2 364.5,696.2 365.6,697.3 366.7,698.3 367.9,699.2 369.0,700.2 370.1,701.2 371.2,702.2 372.3,703.2 373.5,704.1 374.6,705.1 375.7,706.0 376.8,707.0 377.9,707.9 379.0,708.8 380.1,709.8 381.2,710.7 382.4,711.6 383.5,712.5 384.6,713.4 385.7,714.3 386.8,715.2 387.9,716.1 389.0,717.0 390.1,717.9 391.2,718.8 392.3,719.6 393.4,720.5 394.5,721.3 395.7,722.2 396.8,723.0 397.9,723.8 399.0,724.6 400.1,725.5 401.2,726.3 402.3,727.1 403.5,727.9 404.6,728.7 405.7,729.5 406.8,730.3 407.9,731.1 409.0,731.8 410.1,732.6 411.2,733.4 412.3,734.2 413.4,734.9 414.5,735.7 415.6,736.5 416.7,737.2 417.8,738.0 418.9,738.7 420.0,739.5 421.1,740.2 422.1,740.9 423.2,741.7 424.3,742.4 425.4,743.1 426.5,743.8 427.6,744.6 428.7,745.3 429.7,746.0 430.8,746.7 431.9,747.4 433.0,748.1 434.1,748.8 435.1,749.5 436.2,750.2 437.3,750.9 438.4,751.6 439.4,752.2 440.5,752.9 441.6,753.6" fill="none" stroke="#8c0000" stroke-width="1" shape-rendering="crispEdges"/>
<polyline points="333.2,27.7 325.9,45.0 319.2,61.4 313.1,77.1 307.4,92.0 302.2,106.2 297.5,119.8 293.0,132.9 289.0,145.4 285.2,157.4 281.8,168.9 278.6,180.0 275.7,190.7 273.0,201.1 270.5,211.0 268.2,220.7 266.1,230.0 264.2,239.0 262.5,247.7 260.9,256.1 259.4,264.4 258.1,272.3 256.9,280.0 255.9,287.6 254.9,294.9 254.1,302.0 253.3,308.9 252.7,315.6 252.1,322.2 251.8,328.5 251.5,334.6 251.3,340.6 251.2,346.4 251.1,352.1 251.1,357.7 251.1,363.1 251.2,368.4 251.4,373.6 251.6,378.7 251.9,383.7 252.2,388.6 252.5,393.4 252.9,398.0 253.3,402.6 253.8,407.1 254.3,411.6 254.9,415.9 255.4,420.1 256.0,424.3 256.7,428.4 257.3,432.4 258.0,436.4 258.7,440.3 259.4,444.1 260.2,447.8 261.0,451.5 261.8,455.1 262.7,458.6 263.5,462.1 264.4,465.6 265.3,468.9 266.2,472.3 267.2,475.5 268.1,478.7 269.1,481.9 270.1,485.0 271.1,488.1 272.1,491.2 273.1,494.1 274.1,497.1 275.2,500.0 276.3,502.9 277.3,505.7 278.4,508.5 279.5,511.2 280.6,513.9 281.7,516.6 282.8,519.2 283.9,521.8 285.1,524.4 286.2,526.9 287.4,529.4 288.5,531.9 289.7,534.4 290.8,536.8 292.0,539.2 293.2,541.6 294.3,543.9 295.5,546.2 296.7,548.5 297.9,550.7 299.1,553.0 300.3,555.2 301.5,557.3 302.7,559.5 303.9,561.6 305.1,563.7 306.4,565.8 307.6,567.9 308.8,569.9 310.1,571.9 311.3,573.9 312.5,575.9 313.8,577.8 315.0,579.7 316.3,581.7 317.5,583.5 318.8,585.4 320.0,587.3 321.2,589.1 322.5,591.0 323.7,592.8 324.9,594.6 326.2,596.4 327.4,598.2 328.7,599.9 329.9,601.6 331.2,603.4 332.4,605.1 333.6,606.7 334.9,608.4 336.1,610.1 337.4,611.7 338.7,613.3 339.9,614.9 341.2,616.5 342.4,618.1 343.7,619.7 344.9,621.2 346.2,622.8 347.4,624.3 348.7,625.8 350.0,627.3 351.2,628.8 352.5,630.3 353.7,631.7 355.0,633.2 356.3,634.6 357.5,636.0 358.8,637.5 360.0,638.9 361.3,640.2 362.6,641.6 363.8,643.0 365.1,644.3 366.3,645.7 367.6,647.0 368.9,648.3 370.1,649.7 371.4,651.0 372.6,652.3 373.9,653.5 375.2,654.8 376.4,656.1 377.7,657.3 378.9,658.6 380.2,659.8 381.4,661.0 382.7,662.2 383.9,663.5 385.2,664.7 386.5,665.8 387.7,667.0 388.9,668.2 390.2,669.4 391.4,670.5 392.7,671.7 393.9,672.8 395.1,674.0 396.4,675.1 397.6,676.2 398.9,677.4 400.1,678.5 401.3,679.6 402.6,680.7 403.8,681.7 405.0,682.8 406.3,683.9 407.5,685.0 408.7,686.0 410.0,687.1 411.2,688.1 412.4,689.1 413.6,690.2 414.9,691.2 416.1,692.2 417.3,693.2 418.5,694.2 419.7,695.2 420.9,696.2 422.1,697.3 423.3,698.3 424.5,699.2 425.7,700.2 426.9,701.2 428.1,702.2 429.3,703.2 430.5,704.1 431.7,705.1 432.9,706.0 434.0,707.0 435.2,707.9 436.4,708.8 437.6,709.8 438.8,710.7 440.0,711.6 441.1,712.5 442.3,713.4 443.5,714.3 444.7,715.2 445.8,716.1 447.0,717.0 448.2,717.9 449.4,718.8 450.5,719.6 451.7,720.5 452.9,721.3 454.1,722.2 455.3,723.0 456.5,723.8 457.7,724.6 458.8,725.5 460.0,726.3 461.2,727.1 462.4,727.9 463.5,728.7 464.7,729.5 465.9,730.3 467.1,731.1 468.2,731.8 469.4,732.6 470.6,733.4 471.7,734.2 472.9,734.9 474.1,735.7 475.2,736.5 476.4,737.2 477.6,738.0 478.7,738.7 479.9,739.5 481.0,740.2 482.2,740.9 483.3,741.7 484.5,742.4 485.6,743.1 486.8,743.8 487.9,744.6 489.1,745.3 490.2,746.0 491.4,746.7 492.5,747.4 493.7,748.1 494.8,748.8 495.9,749.5 497.1,750.2 498.2,750.9 499.4,751.6 500.5,752.2 501.6,752.9 502.7,753.6" fill="none" stroke="#8c0000" stroke-width="1" shape-rendering="crispEdges"/>
<polyline points="363.8,27.7 356.9,45.0 350.5,61.4 344.7,77.1 339.4,92.0 334.5,106.2 330.0,119.8 325.9,132.9 322.1,145.4 318.7,157.4 315.5,168.9 312.6,180.0 309.9,190.7 307.5,201.1 305.3,211.0 303.2,220.7 301.4,230.0 299.7,239.0 298.2,247.7 296.8,256.1 295.6,264.4 294.5,272.3 293.6,280.0 292.7,287.6 292.0,294.9 291.4,302.0 290.8,308.9 290.4,315.6 290.0,322.2 289.9,328.5 289.8,334.6 289.8,340.6 289.9,346.4 290.0,352.1 290.2,357.7 290.4,363.1 290.7,368.4 291.0,373.6 291.4,378.7 291.9,383.7 292.3,388.6 292.9,393.4 293.4,398.0 294.0,402.6 294.7,407.1 295.3,411.6 296.0,415.9 296.8,420.1 297.5,424.3 298.3,428.4 299.2,432.4 300.0,436.4 300.9,440.3 301.8,444.1 302.7,447.8 303.6,451.5 304.6,455.1 305.6,458.6 306.6,462.1 307.6,465.6 308.7,468.9 309.8,472.3 310.8,475.5 311.9,478.7 313.0,481.9 314.2,485.0 315.3,488.1 316.4,491.2 317.6,494.1 318.8,497.1 320.0,500.0 321.1,502.9 322.3,505.7 323.6,508.5 324.8,511.2 326.0,513.9 327.2,516.6 328.5,519.2 329.7,521.8 331.0,524.4 332.3,526.9 333.5,529.4 334.8,531.9 336.1,534.4 337.4,536.8 338.6,539.2 339.9,541.6 341.2,543.9 342.5,546.2 343.8,548.5 345.2,550.7 346.5,553.0 347.8,555.2 349.1,557.3 350.4,559.5 351.8,561.6 353.1,563.7 354.4,565.8 355.8,567.9 357.1,569.9 358.5,571.9 359.8,573.9 361.2,575.9 362.5,577.8 363.9,579.7 365.2,581.7 366.6,583.5 367.9,585.4 369.3,587.3 370.6,589.1 371.9,591.0 373.3,592.8 374.6,594.6 376.0,596.4 377.3,598.2 378.7,599.9 380.0,601.6 381.3,603.4 382.7,605.1 384.0,606.7 385.4,608.4 386.7,610.1 388.1,611.7 389.4,613.3 390.8,614.9 392.1,616.5 393.5,618.1 394.8,619.7 396.2,621.2 397.5,622.8 398.9,624.3 400.3,625.8 401.6,627.3 403.0,628.8 404.3,630.3 405.7,631.7 407.0,633.2 408.4,634.6 409.7,636.0 411.1,637.5 412.4,638.9 413.8,640.2 415.1,641.6 416.5,643.0 417.8,644.3 419.2,645.7 420.5,647.0 421.9,648.3 423.2,649.7 424.6,651.0 425.9,652.3 427.3,653.5 428.6,654.8 430.0,656.1 431.3,657.3 432.6,658.6 434.0,659.8 435.3,661.0 436.7,662.2 438.0,663.5 439.3,664.7 440.7,665.8 442.0,667.0 443.3,668.2 444.6,669.4 446.0,670.5 447.3,671.7 448.6,672.8 449.9,674.0 451.3,675.1 452.6,676.2 453.9,677.4 455.2,678.5 456.5,679.6 457.8,680.7 459.1,681.7 460.5,682.8 461.8,683.9 463.1,685.0 464.4,686.0 465.7,687.1 467.0,688.1 468.3,689.1 469.6,690.2 470.9,691.2 472.2,692.2 473.5,693.2 474.8,694.2 476.1,695.2 477.4,696.2 478.6,697.3 479.9,698.3 481.2,699.2 482.4,700.2 483.7,701.2 485.0,702.2 486.2,703.2 487.5,704.1 488.8,705.1 490.0,706.0 491.3,707.0 492.5,707.9 493.8,708.8 495.0,709.8 496.3,710.7 497.6,711.6 498.8,712.5 500.1,713.4 501.3,714.3 502.5,715.2 503.8,716.1 505.0,717.0 506.3,717.9 507.5,718.8 508.8,719.6 510.0,720.5 511.3,721.3 512.5,722.2 513.8,723.0 515.0,723.8 516.3,724.6 517.5,725.5 518.8,726.3 520.0,727.1 521.3,727.9 522.5,728.7 523.8,729.5 525.0,730.3 526.3,731.1 527.5,731.8 528.7,732.6 530.0,733.4 531.2,734.2 532.4,734.9 533.7,735.7 534.9,736.5 536.1,737.2 537.3,738.0 538.6,738.7 539.8,739.5 541.0,740.2 542.2,740.9 543.4,741.7 544.7,742.4 545.9,743.1 547.1,743.8 548.3,744.6 549.5,745.3 550.7,746.0 551.9,746.7 553.1,747.4 554.3,748.1 555.5,748.8 556.7,749.5 557.9,750.2 559.1,750.9 560.3,751.6 561.5,752.2 562.7,752.9 563.9,753.6" fill="none" stroke="#8c0000" stroke-width="1" shape-rendering="crispEdges"/>
<polyline points="394.4,27.7 387.8,45.0 381.8,61.4 376.3,77.1 371.3,92.0 366.7,106.2 362.6,119.8 358.7,132.9 355.3,145.4 352.1,157.4 349.2,168.9 346.5,180.0 344.1,190.7 342.0,201.1 340.0,211.0 338.2,220.7 336.6,230.0 335.2,239.0 333.9,247.7 332.8,256.1 331.8,264.4 331.0,272.3 330.2,280.0 329.6,287.6 329.1,294.9 328.6,302.0 328.3,308.9 328.1,315.6 327.9,322.2 328.0,328.5 328.1,334.6 328.3,340.6 328.6,346.4 328.9,352.1 329.2,357.7 329.7,363.1 330.1,368.4 330.7,373.6 331.2,378.7 331.9,383.7 332.5,388.6 333.2,393.4 334.0,398.0 334.7,402.6 335.5,407.1 336.4,411.6 337.2,415.9 338.1,420.1 339.1,424.3 340.0,428.4 341.0,432.4 342.0,436.4 343.0,440.3 344.1,444.1 345.1,447.8 346.2,451.5 347.4,455.1 348.5,458.6 349.7,462.1 350.9,465.6 352.1,468.9 353.3,472.3 354.5,475.5 355.7,478.7 357.0,481.9 358.2,485.0 359.5,488.1 360.8,491.2 362.1,494.1 363.4,497.1 364.7,500.0 366.0,502.9 367.4,505.7 368.7,508.5 370.1,511.2 371.4,513.9 372.8,516.6 374.2,519.2 375.5,521.8 376.9,524.4 378.3,526.9 379.7,529.4 381.1,531.9 382.5,534.4 383.9,536.8 385.3,539.2 386.7,541.6 388.1,543.9 389.6,546.2 391.0,548.5 392.4,550.7 393.8,553.0 395.3,555.2 396.7,557.3 398.2,559.5 399.6,561.6 401.1,563.7 402.5,565.8 403.9,567.9 405.4,569.9 406.9,571.9 408.3,573.9 409.8,575.9 411.2,577.8 412.7,579.7 414.2,581.7 415.6,583.5 417.1,585.4 418.5,587.3 420.0,589.1 421.4,591.0 422.9,592.8 424.3,594.6 425.8,596.4 427.2,598.2 428.6,599.9 430.1,601.6 431.5,603.4 433.0,605.1 434.4,606.7 435.9,608.4 437.3,610.1 438.8,611.7 440.2,613.3 441.7,614.9 443.1,616.5 444.6,618.1 446.0,619.7 447.5,621.2 448.9,622.8 450.4,624.3 451.8,625.8 453.3,627.3 454.7,628.8 456.1,630.3 457.6,631.7 459.0,633.2 460.5,634.6 461.9,636.0 463.4,637.5 464.8,638.9 466.3,640.2 467.7,641.6 469.1,643.0 470.6,644.3 472.0,645.7 473.5,647.0 474.9,648.3 476.3,649.7 477.8,651.0 479.2,652.3 480.6,653.5 482.1,654.8 483.5,656.1 484.9,657.3 486.3,658.6 487.8,659.8 489.2,661.0 490.6,662.2 492.0,663.5 493.5,664.7 494.9,665.8 496.3,667.0 497.7,668.2 499.1,669.4 500.5,670.5 501.9,671.7 503.3,672.8 504.7,674.0 506.1,675.1 507.5,676.2 508.9,677.4 510.3,678.5 511.7,679.6 513.1,680.7 514.5,681.7 515.9,682.8 517.3,683.9 518.7,685.0 520.0,686.0 521.4,687.1 522.8,688.1 524.2,689.1 525.6,690.2 527.0,691.2 528.3,692.2 529.7,693.2 531.1,694.2 532.4,695.2 533.8,696.2 535.1,697.3 536.5,698.3 537.8,699.2 539.2,700.2 540.5,701.2 541.8,702.2 543.2,703.2 544.5,704.1 545.8,705.1 547.2,706.0 548.5,707.0 549.8,707.9 551.2,708.8 552.5,709.8 553.8,710.7 555.1,711.6 556.5,712.5 557.8,713.4 559.1,714.3 560.4,715.2 561.7,716.1 563.1,717.0 564.4,717.9 565.7,718.8 567.0,719.6 568.3,720.5 569.7,721.3 571.0,722.2 572.3,723.0 573.6,723.8 574.9,724.6 576.3,725.5 577.6,726.3 578.9,727.1 580.2,727.9 581.5,728.7 582.8,729.5 584.1,730.3 585.4,731.1 586.7,731.8 588.0,732.6 589.3,733.4 590.6,734.2 591.9,734.9 593.2,735.7 594.5,736.5 595.8,737.2 597.1,738.0 598.4,738.7 599.7,739.5 601.0,740.2 602.3,740.9 603.5,741.7 604.8,742.4 606.1,743.1 607.4,743.8 608.7,744.6 609.9,745.3 611.2,746.0 612.5,746.7 613.7,747.4 615.0,748.1 616.3,748.8 617.5,749.5 618.8,750.2 620.1,750.9 621.3,751.6 622.6,752.2 623.8,752.9 625.1,753.6" fill="none" stroke="#8c0000" stroke-width="1" shape-rendering="crispEdges"/>
<polyline points="425.1,27.7 418.8,45.0 413.1,61.4 408.0,77.1 403.3,92.0 399.0,106.2 395.1,119.8 391.6,132.9 388.4,145.4 385.5,157.4 382.9,168.9 380.5,180.0 378.4,190.7 376.4,201.1 374.7,211.0 373.2,220.7 371.9,230.0 370.7,239.0 369.6,247.7 368.8,256.1 368.0,264.4 367.4,272.3 366.8,280.0 366.4,287.6 366.1,294.9 365.9,302.0 365.8,308.9 365.8,315.6 365.8,322.2 366.1,328.5 366.4,334.6 366.8,340.6 367.3,346.4 367.8,352.1 368.3,357.7 368.9,363.1 369.6,368.4 370.3,373.6 371.1,378.7 371.9,383.7 372.7,388.6 373.6,393.4 374.5,398.0 375.4,402.6 376.4,407.1 377.4,411.6 378.4,415.9 379.5,420.1 380.6,424.3 381.7,428.4 382.8,432.4 384.0,436.4 385.2,440.3 386.4,444.1 387.6,447.8 388.9,451.5 390.1,455.1 391.4,458.6 392.7,462.1 394.1,465.6 395.4,468.9 396.8,472.3 398.1,475.5 399.5,478.7 400.9,481.9 402.3,485.0 403.7,488.1 405.1,491.2 406.6,494.1 408.0,497.1 409.5,500.0 410.9,502.9 412.4,505.7 413.9,508.5 415.4,511.2 416.8,513.9 418.3,516.6 419.8,519.2 421.3,521.8 422.9,524.4 424.4,526.9 425.9,529.4 427.4,531.9 428.9,534.4 430.5,536.8 432.0,539.2 433.5,541.6 435.1,543.9 436.6,546.2 438.1,548.5 439.7,550.7 441.2,553.0 442.8,555.2 444.3,557.3 445.9,559.5 447.4,561.6 449.0,563.7 450.6,565.8 452.1,567.9 453.7,569.9 455.3,571.9 456.8,573.9 458.4,575.9 460.0,577.8 461.5,579.7 463.1,581.7 464.7,583.5 466.2,585.4 467.8,587.3 469.4,589.1 470.9,591.0 472.4,592.8 474.0,594.6 475.5,596.4 477.1,598.2 478.6,599.9 480.2,601.6 481.7,603.4 483.3,605.1 484.8,606.7 486.4,608.4 487.9,610.1 489.5,611.7 491.0,613.3 492.6,614.9 494.1,616.5 495.7,618.1 497.2,619.7 498.7,621.2 500.3,622.8 501.8,624.3 503.4,625.8 504.9,627.3 506.4,628.8 508.0,630.3 509.5,631.7 511.1,633.2 512.6,634.6 514.1,636.0 515.7,637.5 517.2,638.9 518.7,640.2 520.3,641.6 521.8,643.0 523.3,644.3 524.9,645.7 526.4,647.0 527.9,648.3 529.4,649.7 530.9,651.0 532.5,652.3 534.0,653.5 535.5,654.8 537.0,656.1 538.5,657.3 540.0,658.6 541.6,659.8 543.1,661.0 544.6,662.2 546.1,663.5 547.6,664.7 549.1,665.8 550.6,667.0 552.1,668.2 553.6,669.4 555.0,670.5 556.5,671.7 558.0,672.8 559.5,674.0 561.0,675.1 562.5,676.2 563.9,677.4 565.4,678.5 566.9,679.6 568.4,680.7 569.8,681.7 571.3,682.8 572.8,683.9 574.2,685.0 575.7,686.0 577.2,687.1 578.6,688.1 580.1,689.1 581.5,690.2 583.0,691.2 584.4,692.2 585.9,693.2 587.3,694.2 588.8,695.2 590.2,696.2 591.6,697.3 593.0,698.3 594.5,699.2 595.9,700.2 597.3,701.2 598.7,702.2 600.1,703.2 601.5,704.1 602.9,705.1 604.3,706.0 605.8,707.0 607.2,707.9 608.6,708.8 610.0,709.8 611.4,710.7 612.7,711.6 614.1,712.5 615.5,713.4 616.9,714.3 618.3,715.2 619.7,716.1 621.1,717.0 622.5,717.9 623.8,718.8 625.2,719.6 626.6,720.5 628.0,721.3 629.4,722.2 630.8,723.0 632.2,723.8 633.6,724.6 635.0,725.5 636.4,726.3 637.7,727.1 639.1,727.9 640.5,728.7 641.9,729.5 643.3,730.3 644.6,731.1 646.0,731.8 647.4,732.6 648.7,733.4 650.1,734.2 651.5,734.9 652.8,735.7 654.2,736.5 655.5,737.2 656.9,738.0 658.3,738.7 659.6,739.5 661.0,740.2 662.3,740.9 663.6,741.7 665.0,742.4 666.3,743.1 667.7,743.8 669.0,744.6 670.4,745.3 671.7,746.0 673.0,746.7 674.4,747.4 675.7,748.1 677.0,748.8 678.3,749.5 679.7,750.2 681.0,750.9 682.3,751.6 683.6,752.2 684.9,752.9 686.3,753.6" fill="none" stroke="#8c0000" stroke-width="1" shape-rendering="crispEdges"/>
<polyline points="455.7,27.7 449.8,45.0 444.4,61.4 439.6,77.1 435.2,92.0 431.2,106.2 427.7,119.8 424.4,132.9 421.5,145.4 418.9,157.4 416.6,168.9 414.5,180.0 412.6,190.7 410.9,201.1 409.5,211.0 408.2,220.7 407.1,230.0 406.2,239.0 405.4,247.7 404.7,256.1 404.2,264.4 403.8,272.3 403.5,280.0 403.3,287.6 403.2,294.9 403.2,302.0 403.3,308.9 403.5,315.6 403.7,322.2 404.2,328.5 404.7,334.6 405.3,340.6 406.0,346.4 406.7,352.1 407.4,357.7 408.2,363.1 409.1,368.4 409.9,373.6 410.9,378.7 411.9,383.7 412.9,388.6 413.9,393.4 415.0,398.0 416.1,402.6 417.3,407.1 418.4,411.6 419.6,415.9 420.9,420.1 422.1,424.3 423.4,428.4 424.7,432.4 426.0,436.4 427.3,440.3 428.7,444.1 430.1,447.8 431.5,451.5 432.9,455.1 434.4,458.6 435.8,462.1 437.3,465.6 438.8,468.9 440.3,472.3 441.8,475.5 443.3,478.7 444.8,481.9 446.4,485.0 447.9,488.1 449.5,491.2 451.1,494.1 452.6,497.1 454.2,500.0 455.8,502.9 457.4,505.7 459.0,508.5 460.6,511.2 462.3,513.9 463.9,516.6 465.5,519.2 467.1,521.8 468.8,524.4 470.4,526.9 472.1,529.4 473.7,531.9 475.4,534.4 477.0,536.8 478.7,539.2 480.3,541.6 482.0,543.9 483.6,546.2 485.3,548.5 486.9,550.7 488.6,553.0 490.3,555.2 491.9,557.3 493.6,559.5 495.3,561.6 497.0,563.7 498.6,565.8 500.3,567.9 502.0,569.9 503.7,571.9 505.3,573.9 507.0,575.9 508.7,577.8 510.4,579.7 512.0,581.7 513.7,583.5 515.4,585.4 517.1,587.3 518.7,589.1 520.4,591.0 522.0,592.8 523.7,594.6 525.3,596.4 527.0,598.2 528.6,599.9 530.3,601.6 531.9,603.4 533.6,605.1 535.2,606.7 536.9,608.4 538.5,610.1 540.2,611.7 541.8,613.3 543.5,614.9 545.1,616.5 546.7,618.1 548.4,619.7 550.0,621.2 551.7,622.8 553.3,624.3 554.9,625.8 556.6,627.3 558.2,628.8 559.8,630.3 561.5,631.7 563.1,633.2 564.7,634.6 566.3,636.0 568.0,637.5 569.6,638.9 571.2,640.2 572.8,641.6 574.5,643.0 576.1,644.3 577.7,645.7 579.3,647.0 580.9,648.3 582.5,649.7 584.1,651.0 585.7,652.3 587.4,653.5 589.0,654.8 590.6,656.1 592.2,657.3 593.8,658.6 595.3,659.8 596.9,661.0 598.5,662.2 600.1,663.5 601.7,664.7 603.3,665.8 604.9,667.0 606.4,668.2 608.0,669.4 609.6,670.5 611.2,671.7 612.7,672.8 614.3,674.0 615.9,675.1 617.4,676.2 619.0,677.4 620.5,678.5 622.1,679.6 623.6,680.7 625.2,681.7 626.7,682.8 628.3,683.9 629.8,685.0 631.4,686.0 632.9,687.1 634.4,688.1 636.0,689.1 637.5,690.2 639.0,691.2 640.6,692.2 642.1,693.2 643.6,694.2 645.1,695.2 646.6,696.2 648.1,697.3 649.6,698.3 651.1,699.2 652.6,700.2 654.1,701.2 655.6,702.2 657.1,703.2 658.6,704.1 660.0,705.1 661.5,706.0 663.0,707.0 664.5,707.9 665.9,708.8 667.4,709.8 668.9,710.7 670.3,711.6 671.8,712.5 673.3,713.4 674.7,714.3 676.2,715.2 677.6,716.1 679.1,717.0 680.6,717.9 682.0,718.8 683.5,719.6 684.9,720.5 686.4,721.3 687.9,722.2 689.3,723.0 690.8,723.8 692.2,724.6 693.7,725.5 695.1,726.3 696.6,727.1 698.0,727.9 699.5,728.7 700.9,729.5 702.4,730.3 703.8,731.1 705.2,731.8 706.7,732.6 708.1,733.4 709.5,734.2 711.0,734.9 712.4,735.7 713.8,736.5 715.3,737.2 716.7,738.0 718.1,738.7 719.5,739.5 720.9,740.2 722.3,740.9 723.8,741.7 725.2,742.4 726.6,743.1 728.0,743.8 729.4,744.6 730.8,745.3 732.2,746.0 733.6,746.7 735.0,747.4 736.4,748.1 737.8,748.8 739.1,749.5 740.5,750.2 741.9,750.9 743.3,751.6 744.7,752.2 746.1,752.9 747.4,753.6" fill="none" stroke="#8c0000" stroke-width="1" shape-rendering="crispEdges"/>
<polyline points="486.3,27.7 480.7,45.0 475.7,61.4 471.2,77.1 467.1,92.0 463.5,106.2 460.2,119.8 457.3,132.9 454.6,145.4 452.3,157.4 450.2,168.9 448.4,180.0 446.8,190.7 445.4,201.1 444.2,211.0 443.2,220.7 442.3,230.0 441.6,239.0 441.1,247.7 440.7,256.1 440.4,264.4 440.2,272.3 440.1,280.0 440.1,287.6 440.3,294.9 440.5,302.0 440.8,308.9 441.2,315.6 441.7,322.2 442.3,328.5 443.0,334.6 443.8,340.6 444.7,346.4 445.5,352.1 446.5,357.7 447.5,363.1 448.5,368.4 449.6,373.6 450.7,378.7 451.9,383.7 453.0,388.6 454.3,393.4 455.5,398.0 456.8,402.6 458.1,407.1 459.5,411.6 460.8,415.9 462.2,420.1 463.6,424.3 465.1,428.4 466.5,432.4 468.0,436.4 469.5,440.3 471.0,444.1 472.5,447.8 474.1,451.5 475.7,455.1 477.3,458.6 478.9,462.1 480.5,465.6 482.1,468.9 483.8,472.3 485.4,475.5 487.1,478.7 488.8,481.9 490.5,485.0 492.1,488.1 493.8,491.2 495.6,494.1 497.3,497.1 499.0,500.0 500.7,502.9 502.4,505.7 504.2,508.5 505.9,511.2 507.7,513.9 509.4,516.6 511.2,519.2 512.9,521.8 514.7,524.4 516.5,526.9 518.3,529.4 520.0,531.9 521.8,534.4 523.6,536.8 525.3,539.2 527.1,541.6 528.9,543.9 530.6,546.2 532.4,548.5 534.2,550.7 536.0,553.0 537.8,555.2 539.6,557.3 541.3,559.5 543.1,561.6 544.9,563.7 546.7,565.8 548.5,567.9 550.3,569.9 552.1,571.9 553.8,573.9 555.6,575.9 557.4,577.8 559.2,579.7 561.0,581.7 562.8,583.5 564.6,585.4 566.3,587.3 568.1,589.1 569.8,591.0 571.6,592.8 573.4,594.6 575.1,596.4 576.9,598.2 578.6,599.9 580.4,601.6 582.1,603.4 583.9,605.1 585.6,606.7 587.4,608.4 589.1,610.1 590.9,611.7 592.6,613.3 594.3,614.9 596.1,616.5 597.8,618.1 599.6,619.7 601.3,621.2 603.0,622.8 604.8,624.3 606.5,625.8 608.2,627.3 609.9,628.8 611.7,630.3 613.4,631.7 615.1,633.2 616.8,634.6 618.5,636.0 620.3,637.5 622.0,638.9 623.7,640.2 625.4,641.6 627.1,643.0 628.8,644.3 630.5,645.7 632.2,647.0 633.9,648.3 635.6,649.7 637.3,651.0 639.0,652.3 640.7,653.5 642.4,654.8 644.1,656.1 645.8,657.3 647.5,658.6 649.1,659.8 650.8,661.0 652.5,662.2 654.2,663.5 655.8,664.7 657.5,665.8 659.2,667.0 660.8,668.2 662.5,669.4 664.1,670.5 665.8,671.7 667.4,672.8 669.1,674.0 670.7,675.1 672.4,676.2 674.0,677.4 675.6,678.5 677.3,679.6 678.9,680.7 680.5,681.7 682.2,682.8 683.8,683.9 685.4,685.0 687.0,686.0 688.6,687.1 690.3,688.1 691.9,689.1 693.5,690.2 695.1,691.2 696.7,692.2 698.3,693.2 699.9,694.2 701.5,695.2 703.1,696.2 704.6,697.3 706.2,698.3 707.8,699.2 709.3,700.2 710.9,701.2 712.5,702.2 714.0,703.2 715.6,704.1 717.1,705.1 718.7,706.0 720.2,707.0 721.8,707.9 723.3,708.8 724.9,709.8 726.4,710.7 727.9,711.6 729.5,712.5 731.0,713.4 732.5,714.3 734.1,715.2 735.6,716.1 737.1,717.0 738.6,717.9 740.2,718.8 741.7,719.6 743.2,720.5 744.8,721.3 746.3,722.2 747.8,723.0 749.4,723.8 750.9,724.6 752.4,725.5 753.9,726.3 755.4,727.1 757.0,727.9 758.5,728.7 760.0,729.5 761.5,730.3 763.0,731.1 764.5,731.8 766.0,732.6 767.5,733.4 769.0,734.2 770.5,734.9 772.0,735.7 773.5,736.5 775.0,737.2 776.5,738.0 777.9,738.7 779.4,739.5 780.9,740.2 782.4,740.9 783.9,741.7 785.3,742.4 786.8,743.1 788.3,743.8 789.7,744.6 791.2,745.3 792.7,746.0 794.1,746.7 795.6,747.4 797.0,748.1 798.5,748.8 799.9,749.5 801.4,750.2 802.8,750.9 804.3,751.6 805.7,752.2 807.2,752.9 808.6,753.6" fill="none" stroke="#8c0000" stroke-width="1" shape-rendering="crispEdges"/>
<polyline points="516.9,27.7 511.7,45.0 507.0,61.4 502.8,77.1 499.1,92.0 495.7,106.2 492.8,119.8 490.1,132.9 487.8,145.4 485.7,157.4 483.9,168.9 482.4,180.0 481.0,190.7 479.9,201.1 479.0,211.0 478.2,220.7 477.6,230.0 477.1,239.0 476.8,247.7 476.6,256.1 476.5,264.4 476.6,272.3 476.7,280.0 477.0,287.6 477.3,294.9 477.8,302.0 478.3,308.9 478.9,315.6 479.6,322.2 480.4,328.5 481.3,334.6 482.3,340.6 483.4,346.4 484.4,352.1 485.6,357.7 486.7,363.1 488.0,368.4 489.2,373.6 490.5,378.7 491.8,383.7 493.2,388.6 494.6,393.4 496.0,398.0 497.5,402.6 499.0,407.1 500.5,411.6 502.0,415.9 503.6,420.1 505.2,424.3 506.8,428.4 508.4,432.4 510.0,436.4 511.7,440.3 513.3,444.1 515.0,447.8 516.7,451.5 518.5,455.1 520.2,458.6 522.0,462.1 523.7,465.6 525.5,468.9 527.3,472.3 529.1,475.5 530.9,478.7 532.7,481.9 534.5,485.0 536.4,488.1 538.2,491.2 540.0,494.1 541.9,497.1 543.7,500.0 545.6,502.9 547.5,505.7 549.3,508.5 551.2,511.2 553.1,513.9 555.0,516.6 556.9,519.2 558.7,521.8 560.6,524.4 562.5,526.9 564.4,529.4 566.3,531.9 568.2,534.4 570.1,536.8 572.0,539.2 573.9,541.6 575.8,543.9 577.7,546.2 579.6,548.5 581.5,550.7 583.4,553.0 585.3,555.2 587.2,557.3 589.1,559.5 591.0,561.6 592.9,563.7 594.8,565.8 596.7,567.9 598.6,569.9 600.5,571.9 602.4,573.9 604.3,575.9 606.1,577.8 608.0,579.7 609.9,581.7 611.8,583.5 613.7,585.4 615.6,587.3 617.5,589.1 619.3,591.0 621.2,592.8 623.0,594.6 624.9,596.4 626.8,598.2 628.6,599.9 630.5,601.6 632.3,603.4 634.2,605.1 636.0,606.7 637.9,608.4 639.7,610.1 641.5,611.7 643.4,613.3 645.2,614.9 647.1,616.5 648.9,618.1 650.7,619.7 652.6,621.2 654.4,622.8 656.2,624.3 658.0,625.8 659.9,627.3 661.7,628.8 663.5,630.3 665.3,631.7 667.1,633.2 668.9,634.6 670.8,636.0 672.6,637.5 674.4,638.9 676.2,640.2 678.0,641.6 679.8,643.0 681.6,644.3 683.4,645.7 685.2,647.0 686.9,648.3 688.7,649.7 690.5,651.0 692.3,652.3 694.1,653.5 695.9,654.8 697.6,656.1 699.4,657.3 701.2,658.6 702.9,659.8 704.7,661.0 706.5,662.2 708.2,663.5 710.0,664.7 711.7,665.8 713.5,667.0 715.2,668.2 716.9,669.4 718.7,670.5 720.4,671.7 722.1,672.8 723.9,674.0 725.6,675.1 727.3,676.2 729.0,677.4 730.7,678.5 732.5,679.6 734.2,680.7 735.9,681.7 737.6,682.8 739.3,683.9 741.0,685.0 742.7,686.0 744.4,687.1 746.1,688.1 747.8,689.1 749.4,690.2 751.1,691.2 752.8,692.2 754.5,693.2 756.2,694.2 757.8,695.2 759.5,696.2 761.1,697.3 762.8,698.3 764.4,699.2 766.1,700.2 767.7,701.2 769.3,702.2 771.0,703.2 772.6,704.1 774.2,705.1 775.8,706.0 777.5,707.0 779.1,707.9 780.7,708.8 782.3,709.8 783.9,710.7 785.5,711.6 787.1,712.5 788.8,713.4 790.4,714.3 792.0,715.2 793.6,716.1 795.1,717.0 796.7,717.9 798.3,718.8 799.9,719.6 801.5,720.5 803.1,721.3 804.7,722.2 806.3,723.0 807.9,723.8 809.5,724.6 811.1,725.5 812.7,726.3 814.3,727.1 815.9,727.9 817.5,728.7 819.0,729.5 820.6,730.3 822.2,731.1 823.8,731.8 825.3,732.6 826.9,733.4 828.5,734.2 830.0,734.9 831.6,735.7 833.1,736.5 834.7,737.2 836.2,738.0 837.8,738.7 839.3,739.5 840.9,740.2 842.4,740.9 844.0,741.7 845.5,742.4 847.0,743.1 848.6,743.8 850.1,744.6 851.6,745.3 853.1,746.0 854.7,746.7 856.2,747.4 857.7,748.1 859.2,748.8 860.7,749.5 862.3,750.2 863.8,750.9 865.3,751.6 866.8,752.2 868.3,752.9 869.8,753.6" fill="none" stroke="#8c0000" stroke-width="1" shape-rendering="crispEdges"/>
<polyline points="547.6,27.7 542.7,45.0 538.3,61.4 534.5,77.1 531.0,92.0 528.0,106.2 525.3,119.8 523.0,132.9 520.9,145.4 519.1,157.4 517.6,168.9 516.3,180.0 515.3,190.7 514.4,201.1 513.7,211.0 513.2,220.7 512.8,230.0 512.6,239.0 512.5,247.7 512.6,256.1 512.7,264.4 513.0,272.3 513.4,280.0 513.8,287.6 514.4,294.9 515.1,302.0 515.8,308.9 516.6,315.6 517.5,322.2 518.5,328.5 519.6,334.6 520.8,340.6 522.1,346.4 523.3,352.1 524.6,357.7 526.0,363.1 527.4,368.4 528.9,373.6 530.3,378.7 531.8,383.7 533.4,388.6 535.0,393.4 536.6,398.0 538.2,402.6 539.8,407.1 541.5,411.6 543.2,415.9 544.9,420.1 546.7,424.3 548.4,428.4 550.2,432.4 552.0,436.4 553.8,440.3 555.6,444.1 557.5,447.8 559.3,451.5 561.2,455.1 563.1,458.6 565.0,462.1 566.9,465.6 568.9,468.9 570.8,472.3 572.7,475.5 574.7,478.7 576.6,481.9 578.6,485.0 580.6,488.1 582.5,491.2 584.5,494.1 586.5,497.1 588.5,500.0 590.5,502.9 592.5,505.7 594.5,508.5 596.5,511.2 598.5,513.9 600.5,516.6 602.5,519.2 604.5,521.8 606.6,524.4 608.6,526.9 610.6,529.4 612.6,531.9 614.6,534.4 616.6,536.8 618.7,539.2 620.7,541.6 622.7,543.9 624.7,546.2 626.7,548.5 628.7,550.7 630.7,553.0 632.8,555.2 634.8,557.3 636.8,559.5 638.8,561.6 640.8,563.7 642.8,565.8 644.8,567.9 646.9,569.9 648.9,571.9 650.9,573.9 652.9,575.9 654.9,577.8 656.9,579.7 658.9,581.7 660.9,583.5 662.9,585.4 664.9,587.3 666.8,589.1 668.8,591.0 670.8,592.8 672.7,594.6 674.7,596.4 676.6,598.2 678.6,599.9 680.6,601.6 682.5,603.4 684.5,605.1 686.4,606.7 688.4,608.4 690.3,610.1 692.2,611.7 694.2,613.3 696.1,614.9 698.0,616.5 700.0,618.1 701.9,619.7 703.8,621.2 705.8,622.8 707.7,624.3 709.6,625.8 711.5,627.3 713.4,628.8 715.3,630.3 717.2,631.7 719.2,633.2 721.1,634.6 723.0,636.0 724.9,637.5 726.8,638.9 728.7,640.2 730.5,641.6 732.4,643.0 734.3,644.3 736.2,645.7 738.1,647.0 740.0,648.3 741.8,649.7 743.7,651.0 745.6,652.3 747.4,653.5 749.3,654.8 751.2,656.1 753.0,657.3 754.9,658.6 756.7,659.8 758.6,661.0 760.4,662.2 762.3,663.5 764.1,664.7 765.9,665.8 767.8,667.0 769.6,668.2 771.4,669.4 773.2,670.5 775.0,671.7 776.8,672.8 778.6,674.0 780.5,675.1 782.3,676.2 784.1,677.4 785.8,678.5 787.6,679.6 789.4,680.7 791.2,681.7 793.0,682.8 794.8,683.9 796.6,685.0 798.3,686.0 800.1,687.1 801.9,688.1 803.7,689.1 805.4,690.2 807.2,691.2 808.9,692.2 810.7,693.2 812.4,694.2 814.2,695.2 815.9,696.2 817.6,697.3 819.3,698.3 821.1,699.2 822.8,700.2 824.5,701.2 826.2,702.2 827.9,703.2 829.6,704.1 831.3,705.1 833.0,706.0 834.7,707.0 836.4,707.9 838.1,708.8 839.8,709.8 841.5,710.7 843.1,711.6 844.8,712.5 846.5,713.4 848.2,714.3 849.8,715.2 851.5,716.1 853.2,717.0 854.8,717.9 856.5,718.8 858.2,719.6 859.8,720.5 861.5,721.3 863.2,722.2 864.8,723.0 866.5,723.8 868.2,724.6 869.8,725.5 871.5,726.3 873.1,727.1 874.8,727.9 876.4,728.7 878.1,729.5 879.7,730.3 881.4,731.1 883.0,731.8 884.6,732.6 886.3,733.4 887.9,734.2 889.5,734.9 891.2,735.7 892.8,736.5 894.4,737.2 896.0,738.0 897.6,738.7 899.2,739.5 900.8,740.2 902.5,740.9 904.1,741.7 905.7,742.4 907.3,743.1 908.9,743.8 910.5,744.6 912.0,745.3 913.6,746.0 915.2,746.7 916.8,747.4 918.4,748.1 920.0,748.8 921.5,749.5 923.1,750.2 924.7,750.9 926.3,751.6 927.8,752.2 929.4,752.9 930.9,753.6" fill="none" stroke="#8c0000" stroke-width="1" shape-rendering="crispEdges"/>
<polyline points="578.2,27.7 573.6,45.0 569.6,61.4 566.1,77.1 563.0,92.0 560.2,106.2 557.9,119.8 555.8,132.9 554.0,145.4 552.6,157.4 551.3,168.9 550.3,180.0 549.5,190.7 548.9,201.1 548.4,211.0 548.2,220.7 548.1,230.0 548.1,239.0 548.2,247.7 548.5,256.1 548.9,264.4 549.4,272.3 550.0,280.0 550.7,287.6 551.5,294.9 552.3,302.0 553.3,308.9 554.3,315.6 555.4,322.2 556.6,328.5 558.0,334.6 559.3,340.6 560.7,346.4 562.2,352.1 563.7,357.7 565.3,363.1 566.9,368.4 568.5,373.6 570.1,378.7 571.8,383.7 573.6,388.6 575.3,393.4 577.1,398.0 578.9,402.6 580.7,407.1 582.5,411.6 584.4,415.9 586.3,420.1 588.2,424.3 590.1,428.4 592.1,432.4 594.0,436.4 596.0,440.3 598.0,444.1 599.9,447.8 602.0,451.5 604.0,455.1 606.0,458.6 608.1,462.1 610.2,465.6 612.2,468.9 614.3,472.3 616.4,475.5 618.5,478.7 620.6,481.9 622.7,485.0 624.8,488.1 626.9,491.2 629.0,494.1 631.1,497.1 633.3,500.0 635.4,502.9 637.5,505.7 639.7,508.5 641.8,511.2 643.9,513.9 646.1,516.6 648.2,519.2 650.4,521.8 652.5,524.4 654.6,526.9 656.8,529.4 658.9,531.9 661.1,534.4 663.2,536.8 665.3,539.2 667.5,541.6 669.6,543.9 671.7,546.2 673.9,548.5 676.0,550.7 678.1,553.0 680.3,555.2 682.4,557.3 684.5,559.5 686.6,561.6 688.8,563.7 690.9,565.8 693.0,567.9 695.1,569.9 697.3,571.9 699.4,573.9 701.5,575.9 703.6,577.8 705.7,579.7 707.8,581.7 709.9,583.5 712.0,585.4 714.1,587.3 716.2,589.1 718.3,591.0 720.3,592.8 722.4,594.6 724.5,596.4 726.5,598.2 728.6,599.9 730.6,601.6 732.7,603.4 734.8,605.1 736.8,606.7 738.8,608.4 740.9,610.1 742.9,611.7 745.0,613.3 747.0,614.9 749.0,616.5 751.1,618.1 753.1,619.7 755.1,621.2 757.1,622.8 759.1,624.3 761.2,625.8 763.2,627.3 765.2,628.8 767.2,630.3 769.2,631.7 771.2,633.2 773.2,634.6 775.2,636.0 777.2,637.5 779.2,638.9 781.1,640.2 783.1,641.6 785.1,643.0 787.1,644.3 789.0,645.7 791.0,647.0 793.0,648.3 794.9,649.7 796.9,651.0 798.9,652.3 800.8,653.5 802.8,654.8 804.7,656.1 806.6,657.3 808.6,658.6 810.5,659.8 812.4,661.0 814.4,662.2 816.3,663.5 818.2,664.7 820.1,665.8 822.0,667.0 824.0,668.2 825.9,669.4 827.8,670.5 829.7,671.7 831.5,672.8 833.4,674.0 835.3,675.1 837.2,676.2 839.1,677.4 841.0,678.5 842.8,679.6 844.7,680.7 846.6,681.7 848.4,682.8 850.3,683.9 852.1,685.0 854.0,686.0 855.9,687.1 857.7,688.1 859.5,689.1 861.4,690.2 863.2,691.2 865.1,692.2 866.9,693.2 868.7,694.2 870.5,695.2 872.3,696.2 874.1,697.3 875.9,698.3 877.7,699.2 879.5,700.2 881.3,701.2 883.1,702.2 884.8,703.2 886.6,704.1 888.4,705.1 890.2,706.0 891.9,707.0 893.7,707.9 895.5,708.8 897.2,709.8 899.0,710.7 900.7,711.6 902.5,712.5 904.2,713.4 906.0,714.3 907.7,715.2 909.5,716.1 911.2,717.0 912.9,717.9 914.7,718.8 916.4,719.6 918.1,720.5 919.9,721.3 921.6,722.2 923.4,723.0 925.1,723.8 926.8,724.6 928.5,725.5 930.3,726.3 932.0,727.1 933.7,727.9 935.4,728.7 937.1,729.5 938.8,730.3 940.6,731.1 942.3,731.8 944.0,732.6 945.7,733.4 947.4,734.2 949.0,734.9 950.7,735.7 952.4,736.5 954.1,737.2 955.8,738.0 957.5,738.7 959.1,739.5 960.8,740.2 962.5,740.9 964.2,741.7 965.8,742.4 967.5,743.1 969.2,743.8 970.8,744.6 972.5,745.3 974.1,746.0 975.8,746.7 977.4,747.4 979.1,748.1 980.7,748.8 982.3,749.5 984.0,750.2 985.6,750.9 987.2,751.6 988.9,752.2 990.5,752.9 992.1,753.6" fill="none" stroke="#8c0000" stroke-width="1" shape-rendering="crispEdges"/>
<line x1="-38.50" y1="1560.50" x2="861.50" y2="660.50" stroke="#fff" stroke-width="1" shape-rendering="crispEdges"/>
<line x1="-38.50" y1="1500.50" x2="861.50" y2="600.50" stroke="#fff" stroke-width="1" shape-rendering="crispEdges"/>
<line x1="-38.50" y1="1440.50" x2="861.50" y2="540.50" stroke="#fff" stroke-width="1" shape-rendering="crispEdges"/>
<line x1="-38.50" y1="1380.50" x2="861.50" y2="480.50" stroke="#fff" stroke-width="1" shape-rendering="crispEdges"/>
<line x1="-38.50" y1="1320.50" x2="861.50" y2="420.50" stroke="#fff" stroke-width="1" shape-rendering="crispEdges"/>
<line x1="-38.50" y1="1260.50" x2="861.50" y2="360.50" stroke="#fff" stroke-width="1" shape-rendering="crispEdges"/>
<line x1="-38.50" y1="1200.50" x2="861.50" y2="300.50" stroke="#fff" stroke-width="1" shape-rendering="crispEdges"/>
<line x1="-38.50" y1="1140.50" x2="861.50" y2="240.50" stroke="#fff" stroke-width="1" shape-rendering="crispEdges"/>
<line x1="-38.50" y1="1080.50" x2="861.50" y2="180.50" stroke="#fff" stroke-width="1" shape-rendering="crispEdges"/>
<line x1="-38.50" y1="1020.50" x2="861.50" y2="120.50" stroke="#fff" stroke-width="1" shape-rendering="crispEdges"/>
<line x1="-38.50" y1="960.50" x2="861.50" y2="60.50" stroke="#fff" stroke-width="1" shape-rendering="crispEdges"/>
<line x1="-38.50" y1="900.50" x2="861.50" y2="0.50" stroke="#fff" stroke-width="1" shape-rendering="crispEdges"/>
<line x1="-38.50" y1="840.50" x2="861.50" y2="-59.50" stroke="#fff" stroke-width="1" shape-rendering="crispEdges"/>
<line x1="-38.50" y1="780.50" x2="861.50" y2="-119.50" stroke="#fff" stroke-width="1" shape-rendering="crispEdges"/>
<line x1="-38.50" y1="720.50" x2="861.50" y2="-179.50" stroke="#fff" stroke-width="1" shape-rendering="crispEdges"/>
<line x1="-38.50" y1="660.50" x2="861.50" y2="-239.50" stroke="#fff" stroke-width="1" shape-rendering="crispEdges"/>
<line x1="-38.50" y1="600.50" x2="861.50" y2="-299.50" stroke="#fff" stroke-width="1" shape-rendering="crispEdges"/>
<line x1="-38.50" y1="540.50" x2="861.50" y2="-359.50" stroke="#fff" stroke-width="1" shape-rendering="crispEdges"/>
<line x1="-38.50" y1="480.50" x2="861.50" y2="-419.50" stroke="#fff" stroke-width="1" shape-rendering="crispEdges"/>
<line x1="-38.50" y1="420.50" x2="861.50" y2="-479.50" stroke="#fff" stroke-width="1" shape-rendering="crispEdges"/>
<line x1="-38.50" y1="360.50" x2="861.50" y2="-539.50" stroke="#fff" stroke-width="1" shape-rendering="crispEdges"/>
<line x1="-38.50" y1="300.50" x2="861.50" y2="-599.50" stroke="#fff" stroke-width="1" shape-rendering="crispEdges"/>
<line x1="-38.50" y1="240.50" x2="861.50" y2="-659.50" stroke="#fff" stroke-width="1" shape-rendering="crispEdges"/>
<line x1="-38.50" y1="180.50" x2="861.50" y2="-719.50" stroke="#fff" stroke-width="1" shape-rendering="crispEdges"/>
</g>
<line x1="56.00" y1="50.50" x2="667.00" y2="50.50" stroke="#fff" stroke-width="1" shape-rendering="crispEdges"/>
<text x="34.00" y="55.50" font-size="14" fill="#fff" textLength="19.00" lengthAdjust="spacingAndGlyphs">100</text>
<line x1="56.00" y1="321.50" x2="667.00" y2="321.50" stroke="#fff" stroke-width="1" shape-rendering="crispEdges"/>
<text x="34.00" y="326.50" font-size="14" fill="#fff" textLength="19.00" lengthAdjust="spacingAndGlyphs">200</text>
<line x1="56.00" y1="449.50" x2="667.00" y2="449.50" stroke="#fff" stroke-width="1" shape-rendering="crispEdges"/>
<text x="34.00" y="454.50" font-size="14" fill="#fff" textLength="19.00" lengthAdjust="spacingAndGlyphs">300</text>
<line x1="56.00" y1="529.50" x2="667.00" y2="529.50" stroke="#fff" stroke-width="1" shape-rendering="crispEdges"/>
<text x="34.00" y="534.50" font-size="14" fill="#fff" textLength="19.00" lengthAdjust="spacingAndGlyphs">400</text>
<line x1="56.00" y1="586.50" x2="667.00" y2="586.50" stroke="#fff" stroke-width="1" shape-rendering="crispEdges"/>
<text x="34.00" y="591.50" font-size="14" fill="#fff" textLength="19.00" lengthAdjust="spacingAndGlyphs">500</text>
<line x1="56.00" y1="630.50" x2="667.00" y2="630.50" stroke="#fff" stroke-width="1" shape-rendering="crispEdges"/>
<text x="34.00" y="635.50" font-size="14" fill="#fff" textLength="19.00" lengthAdjust="spacingAndGlyphs">600</text>
<line x1="56.00" y1="665.50" x2="667.00" y2="665.50" stroke="#fff" stroke-width="1" shape-rendering="crispEdges"/>
<text x="34.00" y="670.50" font-size="14" fill="#fff" textLength="19.00" lengthAdjust="spacingAndGlyphs">700</text>
<line x1="56.00" y1="694.50" x2="667.00" y2="694.50" stroke="#fff" stroke-width="1" shape-rendering="crispEdges"/>
<text x="34.00" y="699.50" font-size="14" fill="#fff" textLength="19.00" lengthAdjust="spacingAndGlyphs">800</text>
<line x1="56.00" y1="719.50" x2="667.00" y2="719.50" stroke="#fff" stroke-width="1" shape-rendering="crispEdges"/>
<text x="34.00" y="724.50" font-size="14" fill="#fff" textLength="19.00" lengthAdjust="spacingAndGlyphs">900</text>
<line x1="56.00" y1="740.50" x2="667.00" y2="740.50" stroke="#fff" stroke-width="1" shape-rendering="crispEdges"/>
<text x="27.50" y="745.50" font-size="14" fill="#fff" textLength="25.50" lengthAdjust="spacingAndGlyphs">1000</text>
<line x1="61.50" y1="50.50" x2="61.50" y2="752.00" stroke="#fff" stroke-width="1" shape-rendering="crispEdges"/>
<line x1="661.50" y1="50.50" x2="661.50" y2="752.00" stroke="#fff" stroke-width="1" shape-rendering="crispEdges"/>
<line x1="61.50" y1="749.50" x2="661.50" y2="749.50" stroke="#fff" stroke-width="1" shape-rendering="crispEdges"/>
<text x="670.50" y="50.50" font-size="14" fill="#fff" textLength="44.50" lengthAdjust="spacingAndGlyphs">16340m</text>
<text x="670.50" y="321.50" font-size="14" fill="#fff" textLength="44.50" lengthAdjust="spacingAndGlyphs">12020m</text>
<text x="670.50" y="449.50" font-size="14" fill="#fff" textLength="38.00" lengthAdjust="spacingAndGlyphs">9420m</text>
<text x="670.50" y="529.50" font-size="14" fill="#fff" textLength="38.00" lengthAdjust="spacingAndGlyphs">7420m</text>
<text x="670.50" y="586.50" font-size="14" fill="#fff" textLength="38.00" lengthAdjust="spacingAndGlyphs">5770m</text>
<text x="670.50" y="630.50" font-size="14" fill="#fff" textLength="38.00" lengthAdjust="spacingAndGlyphs">4368m</text>
<text x="670.50" y="665.50" font-size="14" fill="#fff" textLength="38.00" lengthAdjust="spacingAndGlyphs">3137m</text>
<text x="670.50" y="694.50" font-size="14" fill="#fff" textLength="38.00" lengthAdjust="spacingAndGlyphs">2034m</text>
<text x="670.50" y="719.50" font-size="14" fill="#fff" textLength="38.00" lengthAdjust="spacingAndGlyphs">1036m</text>
<line x1="61.50" y1="749.00" x2="61.50" y2="752.50" stroke="#fff" stroke-width="1" shape-rendering="crispEdges"/>
<text x="52.25" y="767.50" font-size="13.5" fill="#fff" textLength="18.50" lengthAdjust="spacingAndGlyphs">-50</text>
<line x1="121.50" y1="749.00" x2="121.50" y2="752.50" stroke="#fff" stroke-width="1" shape-rendering="crispEdges"/>
<text x="112.25" y="767.50" font-size="13.5" fill="#fff" textLength="18.50" lengthAdjust="spacingAndGlyphs">-40</text>
<line x1="181.50" y1="749.00" x2="181.50" y2="752.50" stroke="#fff" stroke-width="1" shape-rendering="crispEdges"/>
<text x="172.25" y="767.50" font-size="13.5" fill="#fff" textLength="18.50" lengthAdjust="spacingAndGlyphs">-30</text>
<line x1="241.50" y1="749.00" x2="241.50" y2="752.50" stroke="#fff" stroke-width="1" shape-rendering="crispEdges"/>
<text x="232.25" y="767.50" font-size="13.5" fill="#fff" textLength="18.50" lengthAdjust="spacingAndGlyphs">-20</text>
<line x1="301.50" y1="749.00" x2="301.50" y2="752.50" stroke="#fff" stroke-width="1" shape-rendering="crispEdges"/>
<text x="292.25" y="767.50" font-size="13.5" fill="#fff" textLength="18.50" lengthAdjust="spacingAndGlyphs">-10</text>
<line x1="361.50" y1="749.00" x2="361.50" y2="752.50" stroke="#fff" stroke-width="1" shape-rendering="crispEdges"/>
<text x="357.94" y="767.50" font-size="13.5" fill="#fff" textLength="7.12" lengthAdjust="spacingAndGlyphs">0</text>
<line x1="421.50" y1="749.00" x2="421.50" y2="752.50" stroke="#fff" stroke-width="1" shape-rendering="crispEdges"/>
<text x="414.38" y="767.50" font-size="13.5" fill="#fff" textLength="14.24" lengthAdjust="spacingAndGlyphs">10</text>
<line x1="481.50" y1="749.00" x2="481.50" y2="752.50" stroke="#fff" stroke-width="1" shape-rendering="crispEdges"/>
<text x="474.38" y="767.50" font-size="13.5" fill="#fff" textLength="14.24" lengthAdjust="spacingAndGlyphs">20</text>
<line x1="541.50" y1="749.00" x2="541.50" y2="752.50" stroke="#fff" stroke-width="1" shape-rendering="crispEdges"/>
<text x="534.38" y="767.50" font-size="13.5" fill="#fff" textLength="14.24" lengthAdjust="spacingAndGlyphs">30</text>
<line x1="601.50" y1="749.00" x2="601.50" y2="752.50" stroke="#fff" stroke-width="1" shape-rendering="crispEdges"/>
<text x="594.38" y="767.50" font-size="13.5" fill="#fff" textLength="14.24" lengthAdjust="spacingAndGlyphs">40</text>
<line x1="661.50" y1="749.00" x2="661.50" y2="752.50" stroke="#fff" stroke-width="1" shape-rendering="crispEdges"/>
<text x="654.38" y="767.50" font-size="13.5" fill="#fff" textLength="14.24" lengthAdjust="spacingAndGlyphs">50</text>
<text x="276.50" y="781.00" font-size="13.5" fill="#fff" textLength="171.00" lengthAdjust="spacingAndGlyphs">Temperature, Dewpoint  [ °C ]</text>
<line x1="61.50" y1="788.00" x2="61.50" y2="792.00" stroke="#fff" stroke-width="1" shape-rendering="crispEdges"/>
<text x="57.94" y="805.50" font-size="13.5" fill="#fff" textLength="7.12" lengthAdjust="spacingAndGlyphs">0</text>
<line x1="121.50" y1="788.00" x2="121.50" y2="792.00" stroke="#fff" stroke-width="1" shape-rendering="crispEdges"/>
<text x="114.38" y="805.50" font-size="13.5" fill="#fff" textLength="14.24" lengthAdjust="spacingAndGlyphs">10</text>
<line x1="181.50" y1="788.00" x2="181.50" y2="792.00" stroke="#fff" stroke-width="1" shape-rendering="crispEdges"/>
<text x="174.38" y="805.50" font-size="13.5" fill="#fff" textLength="14.24" lengthAdjust="spacingAndGlyphs">20</text>
<line x1="241.50" y1="788.00" x2="241.50" y2="792.00" stroke="#fff" stroke-width="1" shape-rendering="crispEdges"/>
<text x="234.38" y="805.50" font-size="13.5" fill="#fff" textLength="14.24" lengthAdjust="spacingAndGlyphs">30</text>
<line x1="301.50" y1="788.00" x2="301.50" y2="792.00" stroke="#fff" stroke-width="1" shape-rendering="crispEdges"/>
<text x="294.38" y="805.50" font-size="13.5" fill="#fff" textLength="14.24" lengthAdjust="spacingAndGlyphs">40</text>
<line x1="361.50" y1="788.00" x2="361.50" y2="792.00" stroke="#fff" stroke-width="1" shape-rendering="crispEdges"/>
<text x="354.38" y="805.50" font-size="13.5" fill="#fff" textLength="14.24" lengthAdjust="spacingAndGlyphs">50</text>
<line x1="421.50" y1="788.00" x2="421.50" y2="792.00" stroke="#fff" stroke-width="1" shape-rendering="crispEdges"/>
<text x="414.38" y="805.50" font-size="13.5" fill="#fff" textLength="14.24" lengthAdjust="spacingAndGlyphs">60</text>
<line x1="481.50" y1="788.00" x2="481.50" y2="792.00" stroke="#fff" stroke-width="1" shape-rendering="crispEdges"/>
<text x="474.38" y="805.50" font-size="13.5" fill="#fff" textLength="14.24" lengthAdjust="spacingAndGlyphs">70</text>
<line x1="541.50" y1="788.00" x2="541.50" y2="792.00" stroke="#fff" stroke-width="1" shape-rendering="crispEdges"/>
<text x="534.38" y="805.50" font-size="13.5" fill="#fff" textLength="14.24" lengthAdjust="spacingAndGlyphs">80</text>
<line x1="601.50" y1="788.00" x2="601.50" y2="792.00" stroke="#fff" stroke-width="1" shape-rendering="crispEdges"/>
<text x="594.38" y="805.50" font-size="13.5" fill="#fff" textLength="14.24" lengthAdjust="spacingAndGlyphs">90</text>
<line x1="661.50" y1="788.00" x2="661.50" y2="792.00" stroke="#fff" stroke-width="1" shape-rendering="crispEdges"/>
<text x="650.82" y="805.50" font-size="13.5" fill="#fff" textLength="21.35" lengthAdjust="spacingAndGlyphs">100</text>
<text x="307.00" y="819.00" font-size="13.5" fill="#fff" textLength="106.50" lengthAdjust="spacingAndGlyphs">Windspeed  [ knt ]</text>
<line x1="61.50" y1="826.00" x2="61.50" y2="830.00" stroke="#fff" stroke-width="1" shape-rendering="crispEdges"/>
<text x="57.94" y="842.50" font-size="13.5" fill="#fff" textLength="7.12" lengthAdjust="spacingAndGlyphs">0</text>
<line x1="121.50" y1="826.00" x2="121.50" y2="830.00" stroke="#fff" stroke-width="1" shape-rendering="crispEdges"/>
<text x="110.82" y="842.50" font-size="13.5" fill="#fff" textLength="21.35" lengthAdjust="spacingAndGlyphs">300</text>
<line x1="181.50" y1="826.00" x2="181.50" y2="830.00" stroke="#fff" stroke-width="1" shape-rendering="crispEdges"/>
<text x="170.82" y="842.50" font-size="13.5" fill="#fff" textLength="21.35" lengthAdjust="spacingAndGlyphs">600</text>
<line x1="241.50" y1="826.00" x2="241.50" y2="830.00" stroke="#fff" stroke-width="1" shape-rendering="crispEdges"/>
<text x="230.82" y="842.50" font-size="13.5" fill="#fff" textLength="21.35" lengthAdjust="spacingAndGlyphs">900</text>
<line x1="301.50" y1="826.00" x2="301.50" y2="830.00" stroke="#fff" stroke-width="1" shape-rendering="crispEdges"/>
<text x="287.26" y="842.50" font-size="13.5" fill="#fff" textLength="28.47" lengthAdjust="spacingAndGlyphs">1200</text>
<line x1="361.50" y1="826.00" x2="361.50" y2="830.00" stroke="#fff" stroke-width="1" shape-rendering="crispEdges"/>
<text x="347.26" y="842.50" font-size="13.5" fill="#fff" textLength="28.47" lengthAdjust="spacingAndGlyphs">1500</text>
<line x1="421.50" y1="826.00" x2="421.50" y2="830.00" stroke="#fff" stroke-width="1" shape-rendering="crispEdges"/>
<text x="407.26" y="842.50" font-size="13.5" fill="#fff" textLength="28.47" lengthAdjust="spacingAndGlyphs">1800</text>
<line x1="481.50" y1="826.00" x2="481.50" y2="830.00" stroke="#fff" stroke-width="1" shape-rendering="crispEdges"/>
<text x="467.26" y="842.50" font-size="13.5" fill="#fff" textLength="28.47" lengthAdjust="spacingAndGlyphs">2100</text>
<line x1="541.50" y1="826.00" x2="541.50" y2="830.00" stroke="#fff" stroke-width="1" shape-rendering="crispEdges"/>
<text x="527.26" y="842.50" font-size="13.5" fill="#fff" textLength="28.47" lengthAdjust="spacingAndGlyphs">2400</text>
<line x1="601.50" y1="826.00" x2="601.50" y2="830.00" stroke="#fff" stroke-width="1" shape-rendering="crispEdges"/>
<text x="587.26" y="842.50" font-size="13.5" fill="#fff" textLength="28.47" lengthAdjust="spacingAndGlyphs">2700</text>
<line x1="661.50" y1="826.00" x2="661.50" y2="830.00" stroke="#fff" stroke-width="1" shape-rendering="crispEdges"/>
<text x="647.26" y="842.50" font-size="13.5" fill="#fff" textLength="28.47" lengthAdjust="spacingAndGlyphs">3000</text>
<text x="292.00" y="856.50" font-size="13.5" fill="#fff" textLength="137.50" lengthAdjust="spacingAndGlyphs">CAPE, CINH * 5  [ J/kg ]</text>
<line x1="61.50" y1="863.00" x2="61.50" y2="867.00" stroke="#fff" stroke-width="1" shape-rendering="crispEdges"/>
<text x="48.69" y="879.50" font-size="13.5" fill="#fff" textLength="25.61" lengthAdjust="spacingAndGlyphs">-100</text>
<line x1="136.50" y1="863.00" x2="136.50" y2="867.00" stroke="#fff" stroke-width="1" shape-rendering="crispEdges"/>
<text x="127.25" y="879.50" font-size="13.5" fill="#fff" textLength="18.50" lengthAdjust="spacingAndGlyphs">-50</text>
<line x1="211.50" y1="863.00" x2="211.50" y2="867.00" stroke="#fff" stroke-width="1" shape-rendering="crispEdges"/>
<text x="207.94" y="879.50" font-size="13.5" fill="#fff" textLength="7.12" lengthAdjust="spacingAndGlyphs">0</text>
<line x1="286.50" y1="863.00" x2="286.50" y2="867.00" stroke="#fff" stroke-width="1" shape-rendering="crispEdges"/>
<text x="279.38" y="879.50" font-size="13.5" fill="#fff" textLength="14.24" lengthAdjust="spacingAndGlyphs">50</text>
<line x1="361.50" y1="863.00" x2="361.50" y2="867.00" stroke="#fff" stroke-width="1" shape-rendering="crispEdges"/>
<text x="350.82" y="879.50" font-size="13.5" fill="#fff" textLength="21.35" lengthAdjust="spacingAndGlyphs">100</text>
<line x1="436.50" y1="863.00" x2="436.50" y2="867.00" stroke="#fff" stroke-width="1" shape-rendering="crispEdges"/>
<text x="425.82" y="879.50" font-size="13.5" fill="#fff" textLength="21.35" lengthAdjust="spacingAndGlyphs">150</text>
<line x1="511.50" y1="863.00" x2="511.50" y2="867.00" stroke="#fff" stroke-width="1" shape-rendering="crispEdges"/>
<text x="500.82" y="879.50" font-size="13.5" fill="#fff" textLength="21.35" lengthAdjust="spacingAndGlyphs">200</text>
<line x1="586.50" y1="863.00" x2="586.50" y2="867.00" stroke="#fff" stroke-width="1" shape-rendering="crispEdges"/>
<text x="575.82" y="879.50" font-size="13.5" fill="#fff" textLength="21.35" lengthAdjust="spacingAndGlyphs">250</text>
<line x1="661.50" y1="863.00" x2="661.50" y2="867.00" stroke="#fff" stroke-width="1" shape-rendering="crispEdges"/>
<text x="650.82" y="879.50" font-size="13.5" fill="#fff" textLength="21.35" lengthAdjust="spacingAndGlyphs">300</text>
<text x="259.00" y="893.00" font-size="13.5" fill="#fff" textLength="204.50" lengthAdjust="spacingAndGlyphs">Storm Relative Helicity  [ m^2/s^2 ]</text>
<text x="62.00" y="29.00" font-size="15.5" font-weight="bold" fill="#fff" textLength="229.50" lengthAdjust="spacingAndGlyphs">Station: 06610 LSMP Payerne</text>
<text x="317.50" y="29.00" font-size="15.5" font-weight="bold" fill="#fff" textLength="140.50" lengthAdjust="spacingAndGlyphs">Date: 21 May 2009</text>
<text x="479.50" y="29.00" font-size="15.5" font-weight="bold" fill="#fff" textLength="92.50" lengthAdjust="spacingAndGlyphs">Time: 1200Z</text>
<text x="747.50" y="32.00" font-size="12.5" font-weight="bold" fill="#00ff00" textLength="26.50" lengthAdjust="spacingAndGlyphs">OBS</text>
<text x="817.50" y="32.00" font-size="12.5" font-weight="bold" fill="#ff0080" textLength="17.50" lengthAdjust="spacingAndGlyphs">SR</text>
<text x="894.00" y="40.00" font-size="13.5" fill="#fff" textLength="59.75" lengthAdjust="spacingAndGlyphs">Parameter</text>
<rect x="894" y="41" width="60" height="1" fill="#fff"/>
<text x="1092.22" y="40.00" font-size="13.5" fill="#fff" textLength="31.78" lengthAdjust="spacingAndGlyphs">Value</text>
<rect x="1092" y="41" width="32" height="1" fill="#fff"/>
<text x="1171.00" y="40.00" font-size="13.5" fill="#fff" textLength="22.76" lengthAdjust="spacingAndGlyphs">Unit</text>
<rect x="1171" y="41" width="23" height="1" fill="#fff"/>
<text x="1234.00" y="40.00" font-size="13.5" fill="#fff" textLength="55.47" lengthAdjust="spacingAndGlyphs">Comment</text>
<rect x="1234" y="41" width="55" height="1" fill="#fff"/>
<text x="894.00" y="62.00" font-size="13.5" fill="#fff" textLength="142.03" lengthAdjust="spacingAndGlyphs">Convective Temperature:</text>
<text x="1091.97" y="62.00" font-size="13.5" fill="#ff0000" textLength="32.03" lengthAdjust="spacingAndGlyphs">28.39</text>
<text x="1171.00" y="62.00" font-size="13.5" fill="#fff" textLength="21.47" lengthAdjust="spacingAndGlyphs">[°C]</text>
<text x="894.00" y="79.00" font-size="13.5" fill="#fff" textLength="92.48" lengthAdjust="spacingAndGlyphs">Snowfall Height:</text>
<text x="1077.74" y="79.00" font-size="13.5" fill="#ffffff" textLength="46.26" lengthAdjust="spacingAndGlyphs">3085.73</text>
<text x="1171.00" y="79.00" font-size="13.5" fill="#fff" textLength="17.77" lengthAdjust="spacingAndGlyphs">[m]</text>
<text x="894.00" y="104.00" font-size="13.5" fill="#fff" textLength="206.99" lengthAdjust="spacingAndGlyphs">Parcel: Using 50mB mean layer LCL</text>
<rect x="894" y="105" width="207" height="1" fill="#fff"/>
<text x="894.00" y="124.00" font-size="13.5" fill="#fff" textLength="69.73" lengthAdjust="spacingAndGlyphs">Lifted Index:</text>
<text x="1094.83" y="124.00" font-size="13.5" fill="#ff0000" textLength="29.17" lengthAdjust="spacingAndGlyphs">-2.02</text>
<text x="1171.00" y="124.00" font-size="13.5" fill="#fff" textLength="21.47" lengthAdjust="spacingAndGlyphs">[°C]</text>
<text x="1234.00" y="124.00" font-size="13.5" fill="#fff" textLength="213.17" lengthAdjust="spacingAndGlyphs">Widespread Thunderstorms expected</text>
<text x="894.00" y="141.00" font-size="13.5" fill="#fff" textLength="38.41" lengthAdjust="spacingAndGlyphs">CAPE:</text>
<text x="1084.86" y="141.00" font-size="13.5" fill="#ff0000" textLength="39.14" lengthAdjust="spacingAndGlyphs">425.92</text>
<text x="1171.00" y="141.00" font-size="13.5" fill="#fff" textLength="30.58" lengthAdjust="spacingAndGlyphs">[J/kg]</text>
<text x="1234.00" y="141.00" font-size="13.5" fill="#fff" textLength="213.17" lengthAdjust="spacingAndGlyphs">Widespread Thunderstorms expected</text>
<text x="894.00" y="158.00" font-size="13.5" fill="#fff" textLength="34.84" lengthAdjust="spacingAndGlyphs">CINH:</text>
<text x="1084.86" y="158.00" font-size="13.5" fill="#ffff00" textLength="39.14" lengthAdjust="spacingAndGlyphs">140.47</text>
<text x="1171.00" y="158.00" font-size="13.5" fill="#fff" textLength="30.58" lengthAdjust="spacingAndGlyphs">[J/kg]</text>
<text x="894.00" y="175.00" font-size="13.5" fill="#fff" textLength="64.48" lengthAdjust="spacingAndGlyphs">CAPE Virt.:</text>
<text x="1084.86" y="175.00" font-size="13.5" fill="#ff0000" textLength="39.14" lengthAdjust="spacingAndGlyphs">480.94</text>
<text x="1171.00" y="175.00" font-size="13.5" fill="#fff" textLength="30.58" lengthAdjust="spacingAndGlyphs">[J/kg]</text>
<text x="1234.00" y="175.00" font-size="13.5" fill="#fff" textLength="213.17" lengthAdjust="spacingAndGlyphs">Widespread Thunderstorms expected</text>
<text x="894.00" y="192.00" font-size="13.5" fill="#fff" textLength="60.92" lengthAdjust="spacingAndGlyphs">CINH Virt.:</text>
<text x="1084.86" y="192.00" font-size="13.5" fill="#ffff00" textLength="39.14" lengthAdjust="spacingAndGlyphs">106.09</text>
<text x="1171.00" y="192.00" font-size="13.5" fill="#fff" textLength="30.58" lengthAdjust="spacingAndGlyphs">[J/kg]</text>
<text x="894.00" y="209.00" font-size="13.5" fill="#fff" textLength="138.34" lengthAdjust="spacingAndGlyphs">DCAPE (LFS = 539mB):</text>
<text x="1084.86" y="209.00" font-size="13.5" fill="#ff0000" textLength="39.14" lengthAdjust="spacingAndGlyphs">684.58</text>
<text x="1171.00" y="209.00" font-size="13.5" fill="#fff" textLength="30.58" lengthAdjust="spacingAndGlyphs">[J/kg]</text>
<text x="894.00" y="226.00" font-size="13.5" fill="#fff" textLength="119.54" lengthAdjust="spacingAndGlyphs">850-600 Lapse Rate:</text>
<text x="1091.97" y="226.00" font-size="13.5" fill="#ff0000" textLength="32.03" lengthAdjust="spacingAndGlyphs">20.92</text>
<text x="1171.00" y="226.00" font-size="13.5" fill="#fff" textLength="21.47" lengthAdjust="spacingAndGlyphs">[°C]</text>
<text x="894.00" y="243.00" font-size="13.5" fill="#fff" textLength="144.37" lengthAdjust="spacingAndGlyphs">Fawbush-Miller Hail Size:</text>
<text x="1077.04" y="243.00" font-size="13.5" fill="#ffff00" textLength="46.96" lengthAdjust="spacingAndGlyphs">0.6 - 1.3</text>
<text x="1171.00" y="243.00" font-size="13.5" fill="#fff" textLength="24.17" lengthAdjust="spacingAndGlyphs">[cm]</text>
<text x="894.00" y="260.00" font-size="13.5" fill="#fff" textLength="137.97" lengthAdjust="spacingAndGlyphs">Sig. Hail Param. (SHIP):</text>
<text x="1099.09" y="260.00" font-size="13.5" fill="#ff0000" textLength="24.91" lengthAdjust="spacingAndGlyphs">1.08</text>
<text x="1171.00" y="260.00" font-size="13.5" fill="#fff" textLength="14.23" lengthAdjust="spacingAndGlyphs">[1]</text>
<text x="1234.00" y="260.00" font-size="13.5" fill="#fff" textLength="108.85" lengthAdjust="spacingAndGlyphs">Large Hail possible</text>
<text x="894.00" y="277.00" font-size="13.5" fill="#fff" textLength="182.09" lengthAdjust="spacingAndGlyphs">Max. Hail Size (new, new2, old):</text>
<text x="1099.09" y="277.00" font-size="13.5" fill="#ff0000" textLength="24.91" lengthAdjust="spacingAndGlyphs">4.53</text>
<text x="1125.00" y="277.00" font-size="13.5" fill="#fff" textLength="3.56" lengthAdjust="spacingAndGlyphs">,</text>
<text x="1136.09" y="277.00" font-size="13.5" fill="#ff0000" textLength="24.91" lengthAdjust="spacingAndGlyphs">3.93</text>
<text x="1162.00" y="277.00" font-size="13.5" fill="#fff" textLength="3.56" lengthAdjust="spacingAndGlyphs">,</text>
<text x="1173.09" y="277.00" font-size="13.5" fill="#ff0000" textLength="24.91" lengthAdjust="spacingAndGlyphs">5.51</text>
<text x="1208.00" y="277.00" font-size="13.5" fill="#fff" textLength="24.17" lengthAdjust="spacingAndGlyphs">[cm]</text>
<text x="894.00" y="297.00" font-size="13.5" fill="#fff" textLength="55.02" lengthAdjust="spacingAndGlyphs">LCL AGL:</text>
<text x="1077.74" y="297.00" font-size="13.5" fill="#ffff00" textLength="46.26" lengthAdjust="spacingAndGlyphs">1604.99</text>
<text x="1171.00" y="297.00" font-size="13.5" fill="#fff" textLength="17.77" lengthAdjust="spacingAndGlyphs">[m]</text>
<text x="894.00" y="314.00" font-size="13.5" fill="#fff" textLength="107.41" lengthAdjust="spacingAndGlyphs">Convective Height:</text>
<text x="1099.09" y="314.00" font-size="13.5" fill="#ff0000" textLength="24.91" lengthAdjust="spacingAndGlyphs">8.41</text>
<text x="1171.00" y="314.00" font-size="13.5" fill="#fff" textLength="24.17" lengthAdjust="spacingAndGlyphs">[km]</text>
<text x="894.00" y="339.00" font-size="13.5" fill="#fff" textLength="107.41" lengthAdjust="spacingAndGlyphs">Convective Indices</text>
<rect x="894" y="340" width="107" height="1" fill="#fff"/>
<text x="894.00" y="359.00" font-size="13.5" fill="#fff" textLength="95.33" lengthAdjust="spacingAndGlyphs">Showalter Index:</text>
<text x="1099.09" y="359.00" font-size="13.5" fill="#ff0000" textLength="24.91" lengthAdjust="spacingAndGlyphs">0.32</text>
<text x="1171.00" y="359.00" font-size="13.5" fill="#fff" textLength="21.47" lengthAdjust="spacingAndGlyphs">[°C]</text>
<text x="1234.00" y="359.00" font-size="13.5" fill="#fff" textLength="213.17" lengthAdjust="spacingAndGlyphs">Widespread Thunderstorms expected</text>
<text x="894.00" y="376.00" font-size="13.5" fill="#fff" textLength="150.58" lengthAdjust="spacingAndGlyphs">Modified Thompson Index:</text>
<text x="1091.97" y="376.00" font-size="13.5" fill="#ff0000" textLength="32.03" lengthAdjust="spacingAndGlyphs">38.40</text>
<text x="1171.00" y="376.00" font-size="13.5" fill="#fff" textLength="21.47" lengthAdjust="spacingAndGlyphs">[°C]</text>
<text x="1234.00" y="376.00" font-size="13.5" fill="#fff" textLength="213.17" lengthAdjust="spacingAndGlyphs">Widespread Thunderstorms expected</text>
<text x="894.00" y="393.00" font-size="13.5" fill="#fff" textLength="102.21" lengthAdjust="spacingAndGlyphs">Total Totals Index:</text>
<text x="1091.97" y="393.00" font-size="13.5" fill="#ff0000" textLength="32.03" lengthAdjust="spacingAndGlyphs">50.60</text>
<text x="1171.00" y="393.00" font-size="13.5" fill="#fff" textLength="21.47" lengthAdjust="spacingAndGlyphs">[°C]</text>
<text x="1234.00" y="393.00" font-size="13.5" fill="#fff" textLength="213.17" lengthAdjust="spacingAndGlyphs">Widespread Thunderstorms expected</text>
<text x="894.00" y="410.00" font-size="13.5" fill="#fff" textLength="56.91" lengthAdjust="spacingAndGlyphs">KO Index:</text>
<text x="1087.71" y="410.00" font-size="13.5" fill="#ff0000" textLength="36.29" lengthAdjust="spacingAndGlyphs">-13.92</text>
<text x="1171.00" y="410.00" font-size="13.5" fill="#fff" textLength="14.23" lengthAdjust="spacingAndGlyphs">[1]</text>
<text x="1234.00" y="410.00" font-size="13.5" fill="#fff" textLength="213.17" lengthAdjust="spacingAndGlyphs">Widespread Thunderstorms expected</text>
<text x="894.00" y="427.00" font-size="13.5" fill="#fff" textLength="125.20" lengthAdjust="spacingAndGlyphs">Craven SigSvr / 1000:</text>
<text x="1099.09" y="427.00" font-size="13.5" fill="#ff0000" textLength="24.91" lengthAdjust="spacingAndGlyphs">9.73</text>
<text x="1171.00" y="427.00" font-size="13.5" fill="#fff" textLength="53.97" lengthAdjust="spacingAndGlyphs">[m^3/s^3]</text>
<text x="1234.00" y="427.00" font-size="13.5" fill="#fff" textLength="185.43" lengthAdjust="spacingAndGlyphs">Severe Thunderstorms expected</text>
<text x="894.00" y="444.00" font-size="13.5" fill="#fff" textLength="112.14" lengthAdjust="spacingAndGlyphs">SCP RM (new, old):</text>
<text x="1099.09" y="444.00" font-size="13.5" fill="#ffff00" textLength="24.91" lengthAdjust="spacingAndGlyphs">0.71</text>
<text x="1125.00" y="444.00" font-size="13.5" fill="#fff" textLength="3.56" lengthAdjust="spacingAndGlyphs">,</text>
<text x="1136.00" y="444.00" font-size="13.5" fill="#ff0000" textLength="24.91" lengthAdjust="spacingAndGlyphs">6.12</text>
<text x="1171.00" y="444.00" font-size="13.5" fill="#fff" textLength="14.23" lengthAdjust="spacingAndGlyphs">[1]</text>
<text x="1234.00" y="444.00" font-size="13.5" fill="#fff" textLength="110.26" lengthAdjust="spacingAndGlyphs">Supercells possible</text>
<text x="894.00" y="461.00" font-size="13.5" fill="#fff" textLength="110.01" lengthAdjust="spacingAndGlyphs">SCP LM (new, old):</text>
<text x="1099.09" y="461.00" font-size="13.5" fill="#00ff00" textLength="24.91" lengthAdjust="spacingAndGlyphs">0.18</text>
<text x="1125.00" y="461.00" font-size="13.5" fill="#fff" textLength="3.56" lengthAdjust="spacingAndGlyphs">,</text>
<text x="1136.00" y="461.00" font-size="13.5" fill="#ffff00" textLength="24.91" lengthAdjust="spacingAndGlyphs">0.74</text>
<text x="1171.00" y="461.00" font-size="13.5" fill="#fff" textLength="14.23" lengthAdjust="spacingAndGlyphs">[1]</text>
<text x="1234.00" y="461.00" font-size="13.5" fill="#fff" textLength="113.10" lengthAdjust="spacingAndGlyphs">Supercells not likely</text>
<text x="894.00" y="478.00" font-size="13.5" fill="#fff" textLength="87.26" lengthAdjust="spacingAndGlyphs">STP (new, old):</text>
<text x="1099.09" y="478.00" font-size="13.5" fill="#00ff00" textLength="24.91" lengthAdjust="spacingAndGlyphs">0.02</text>
<text x="1125.00" y="478.00" font-size="13.5" fill="#fff" textLength="3.56" lengthAdjust="spacingAndGlyphs">,</text>
<text x="1136.00" y="478.00" font-size="13.5" fill="#ff0000" textLength="24.91" lengthAdjust="spacingAndGlyphs">0.14</text>
<text x="1171.00" y="478.00" font-size="13.5" fill="#fff" textLength="14.23" lengthAdjust="spacingAndGlyphs">[1]</text>
<text x="1234.00" y="478.00" font-size="13.5" fill="#fff" textLength="113.11" lengthAdjust="spacingAndGlyphs">Tornadoes not likely</text>
<text x="894.00" y="495.00" font-size="13.5" fill="#fff" textLength="73.72" lengthAdjust="spacingAndGlyphs">SB STP (fix):</text>
<text x="1099.09" y="495.00" font-size="13.5" fill="#ff0000" textLength="24.91" lengthAdjust="spacingAndGlyphs">0.39</text>
<text x="1171.00" y="495.00" font-size="13.5" fill="#fff" textLength="14.23" lengthAdjust="spacingAndGlyphs">[1]</text>
<text x="1234.00" y="495.00" font-size="13.5" fill="#fff" textLength="110.28" lengthAdjust="spacingAndGlyphs">Tornadoes possible</text>
<text x="894.00" y="512.00" font-size="13.5" fill="#fff" textLength="130.87" lengthAdjust="spacingAndGlyphs">Derecho Comp Param:</text>
<text x="1099.09" y="512.00" font-size="13.5" fill="#ff0000" textLength="24.91" lengthAdjust="spacingAndGlyphs">1.52</text>
<text x="1171.00" y="512.00" font-size="13.5" fill="#fff" textLength="14.23" lengthAdjust="spacingAndGlyphs">[1]</text>
<text x="894.00" y="529.00" font-size="13.5" fill="#fff" textLength="145.53" lengthAdjust="spacingAndGlyphs">MCS 18m/s (MMP, MSP):</text>
<text x="1091.97" y="529.00" font-size="13.5" fill="#ff0000" textLength="32.03" lengthAdjust="spacingAndGlyphs">95.94</text>
<text x="1125.00" y="529.00" font-size="13.5" fill="#fff" textLength="3.56" lengthAdjust="spacingAndGlyphs">,</text>
<text x="1136.00" y="529.00" font-size="13.5" fill="#ffffff" textLength="12.79" lengthAdjust="spacingAndGlyphs">---</text>
<text x="1171.00" y="529.00" font-size="13.5" fill="#fff" textLength="18.49" lengthAdjust="spacingAndGlyphs">[%]</text>
<text x="894.00" y="546.00" font-size="13.5" fill="#fff" textLength="142.98" lengthAdjust="spacingAndGlyphs">Exp. Supercell Index CH:</text>
<text x="1099.09" y="546.00" font-size="13.5" fill="#ff0000" textLength="24.91" lengthAdjust="spacingAndGlyphs">3.35</text>
<text x="1171.00" y="546.00" font-size="13.5" fill="#fff" textLength="14.23" lengthAdjust="spacingAndGlyphs">[1]</text>
<text x="1234.00" y="546.00" font-size="13.5" fill="#fff" textLength="115.25" lengthAdjust="spacingAndGlyphs">Supercells expected</text>
<text x="894.00" y="563.00" font-size="13.5" fill="#fff" textLength="97.45" lengthAdjust="spacingAndGlyphs">SWISS 12 Index:</text>
<text x="1087.71" y="563.00" font-size="13.5" fill="#ff0000" textLength="36.29" lengthAdjust="spacingAndGlyphs">-13.04</text>
<text x="1171.00" y="563.00" font-size="13.5" fill="#fff" textLength="14.23" lengthAdjust="spacingAndGlyphs">[1]</text>
<text x="1234.00" y="563.00" font-size="13.5" fill="#fff" textLength="141.56" lengthAdjust="spacingAndGlyphs">Thunderstorms expected</text>
<text x="894.00" y="588.00" font-size="13.5" fill="#fff" textLength="98.86" lengthAdjust="spacingAndGlyphs">Wind Parameters</text>
<rect x="894" y="589" width="99" height="1" fill="#fff"/>
<text x="894.00" y="608.00" font-size="13.5" fill="#fff" textLength="91.74" lengthAdjust="spacingAndGlyphs">Storm Direction:</text>
<text x="1084.86" y="608.00" font-size="13.5" fill="#ffffff" textLength="39.14" lengthAdjust="spacingAndGlyphs">271.61</text>
<text x="1171.00" y="608.00" font-size="13.5" fill="#fff" textLength="12.23" lengthAdjust="spacingAndGlyphs">[°]</text>
<text x="894.00" y="625.00" font-size="13.5" fill="#fff" textLength="79.66" lengthAdjust="spacingAndGlyphs">Storm Motion:</text>
<text x="1091.97" y="625.00" font-size="13.5" fill="#ff0000" textLength="32.03" lengthAdjust="spacingAndGlyphs">29.35</text>
<text x="1171.00" y="625.00" font-size="13.5" fill="#fff" textLength="24.18" lengthAdjust="spacingAndGlyphs">[knt]</text>
<text x="894.00" y="645.00" font-size="13.5" fill="#fff" textLength="104.53" lengthAdjust="spacingAndGlyphs">SR Wind Sfc-2km:</text>
<text x="1091.97" y="645.00" font-size="13.5" fill="#ff0000" textLength="32.03" lengthAdjust="spacingAndGlyphs">21.20</text>
<text x="1171.00" y="645.00" font-size="13.5" fill="#fff" textLength="24.18" lengthAdjust="spacingAndGlyphs">[knt]</text>
<text x="1234.00" y="645.00" font-size="13.5" fill="#fff" textLength="115.25" lengthAdjust="spacingAndGlyphs">Supercells expected</text>
<text x="894.00" y="662.00" font-size="13.5" fill="#fff" textLength="110.22" lengthAdjust="spacingAndGlyphs">SR Wind 4km-6km:</text>
<text x="1091.97" y="662.00" font-size="13.5" fill="#00ff00" textLength="32.03" lengthAdjust="spacingAndGlyphs">14.68</text>
<text x="1171.00" y="662.00" font-size="13.5" fill="#fff" textLength="24.18" lengthAdjust="spacingAndGlyphs">[knt]</text>
<text x="1234.00" y="662.00" font-size="13.5" fill="#fff" textLength="165.03" lengthAdjust="spacingAndGlyphs">Tornadic Supercells not likely</text>
<text x="894.00" y="679.00" font-size="13.5" fill="#fff" textLength="116.39" lengthAdjust="spacingAndGlyphs">SR Wind 9km-11km:</text>
<text x="1091.97" y="679.00" font-size="13.5" fill="#ff0000" textLength="32.03" lengthAdjust="spacingAndGlyphs">32.76</text>
<text x="1171.00" y="679.00" font-size="13.5" fill="#fff" textLength="24.18" lengthAdjust="spacingAndGlyphs">[knt]</text>
<text x="1234.00" y="679.00" font-size="13.5" fill="#fff" textLength="161.03" lengthAdjust="spacingAndGlyphs">HP Supercell Type expected</text>
<text x="894.00" y="699.00" font-size="13.5" fill="#fff" textLength="122.14" lengthAdjust="spacingAndGlyphs">Effective Shear 6000:</text>
<text x="1091.97" y="699.00" font-size="13.5" fill="#ff0000" textLength="32.03" lengthAdjust="spacingAndGlyphs">44.39</text>
<text x="1171.00" y="699.00" font-size="13.5" fill="#fff" textLength="24.18" lengthAdjust="spacingAndGlyphs">[knt]</text>
<text x="894.00" y="719.00" font-size="13.5" fill="#fff" textLength="145.82" lengthAdjust="spacingAndGlyphs">Bulk Richardson Number:</text>
<text x="1099.09" y="719.00" font-size="13.5" fill="#ffff00" textLength="24.91" lengthAdjust="spacingAndGlyphs">4.28</text>
<text x="1171.00" y="719.00" font-size="13.5" fill="#fff" textLength="14.23" lengthAdjust="spacingAndGlyphs">[1]</text>
<text x="1234.00" y="719.00" font-size="13.5" fill="#fff" textLength="108.12" lengthAdjust="spacingAndGlyphs">Multicells expected</text>
<text x="894.00" y="739.00" font-size="13.5" fill="#fff" textLength="110.71" lengthAdjust="spacingAndGlyphs">3km Effective SRH:</text>
<text x="1084.86" y="739.00" font-size="13.5" fill="#ff0000" textLength="39.14" lengthAdjust="spacingAndGlyphs">231.14</text>
<text x="1171.00" y="739.00" font-size="13.5" fill="#fff" textLength="53.97" lengthAdjust="spacingAndGlyphs">[m^2/s^2]</text>
<text x="1234.00" y="739.00" font-size="13.5" fill="#fff" textLength="110.26" lengthAdjust="spacingAndGlyphs">Supercells possible</text>
<text x="894.00" y="756.00" font-size="13.5" fill="#fff" textLength="145.05" lengthAdjust="spacingAndGlyphs">Max 3km SRH (Sfc-2km):</text>
<text x="1084.86" y="756.00" font-size="13.5" fill="#ff0000" textLength="39.14" lengthAdjust="spacingAndGlyphs">271.63</text>
<text x="1171.00" y="756.00" font-size="13.5" fill="#fff" textLength="53.97" lengthAdjust="spacingAndGlyphs">[m^2/s^2]</text>
<text x="1234.00" y="756.00" font-size="13.5" fill="#fff" textLength="110.26" lengthAdjust="spacingAndGlyphs">Supercells possible</text>
<text x="894.00" y="773.00" font-size="13.5" fill="#fff" textLength="148.65" lengthAdjust="spacingAndGlyphs">Max 3km SRH Level AGL:</text>
<text x="1077.74" y="773.00" font-size="13.5" fill="#00ff00" textLength="46.26" lengthAdjust="spacingAndGlyphs">1336.00</text>
<text x="1171.00" y="773.00" font-size="13.5" fill="#fff" textLength="17.77" lengthAdjust="spacingAndGlyphs">[m]</text>
<text x="1234.00" y="773.00" font-size="13.5" fill="#fff" textLength="113.11" lengthAdjust="spacingAndGlyphs">Tornadoes not likely</text>
<text x="894.00" y="793.00" font-size="13.5" fill="#fff" textLength="151.50" lengthAdjust="spacingAndGlyphs">3km Energy Helicity Index:</text>
<text x="1099.09" y="793.00" font-size="13.5" fill="#ff0000" textLength="24.91" lengthAdjust="spacingAndGlyphs">0.62</text>
<text x="1171.00" y="793.00" font-size="13.5" fill="#fff" textLength="14.23" lengthAdjust="spacingAndGlyphs">[1]</text>
<text x="1234.00" y="793.00" font-size="13.5" fill="#fff" textLength="110.26" lengthAdjust="spacingAndGlyphs">Supercells possible</text>
<text x="894.00" y="810.00" font-size="13.5" fill="#fff" textLength="133.72" lengthAdjust="spacingAndGlyphs">3km Vorticity Gen. Pot.:</text>
<text x="1099.09" y="810.00" font-size="13.5" fill="#00ff00" textLength="24.91" lengthAdjust="spacingAndGlyphs">0.13</text>
<text x="1171.00" y="810.00" font-size="13.5" fill="#fff" textLength="40.85" lengthAdjust="spacingAndGlyphs">[m/s^2]</text>
<text x="1234.00" y="810.00" font-size="13.5" fill="#fff" textLength="113.11" lengthAdjust="spacingAndGlyphs">Tornadoes not likely</text>
<rect x="729" y="827" width="15" height="8" fill="#ff0000"/>
<text x="753.50" y="835.50" font-size="13.5" fill="#ff0000" textLength="111.68" lengthAdjust="spacingAndGlyphs">Temperature Profile</text>
<rect x="729" y="847" width="15" height="8" fill="#00ffff"/>
<text x="753.50" y="855.50" font-size="13.5" fill="#00ffff" textLength="93.19" lengthAdjust="spacingAndGlyphs">Dewpoint Profile</text>
<rect x="729" y="867" width="15" height="8" fill="#00ff00"/>
<text x="753.50" y="875.50" font-size="13.5" fill="#00ff00" textLength="134.44" lengthAdjust="spacingAndGlyphs">OBS Windspeed Profile</text>
<rect x="729" y="887" width="15" height="8" fill="#ff0080"/>
<text x="753.50" y="895.50" font-size="13.5" fill="#ff0080" textLength="125.19" lengthAdjust="spacingAndGlyphs">SR Windspeed Profile</text>
<rect x="729" y="907" width="15" height="8" fill="#c8c800"/>
<text x="753.50" y="915.50" font-size="13.5" fill="#c8c800" textLength="219.04" lengthAdjust="spacingAndGlyphs">Sfc-3km Storm Relative Helicity Profile</text>
<rect x="729" y="927" width="15" height="8" fill="#404000"/>
<text x="753.50" y="935.50" font-size="13.5" fill="#404000" textLength="201.79" lengthAdjust="spacingAndGlyphs">Effective Layer (CAPE &gt;= 100 J/kg)</text>
<rect x="1079" y="827" width="15" height="8" fill="#00ff00"/>
<text x="1103.50" y="835.50" font-size="13.5" fill="#00ff00" textLength="184.00" lengthAdjust="spacingAndGlyphs">No / Non Severe Thunderstorms</text>
<rect x="1079" y="847" width="15" height="8" fill="#ffff00"/>
<text x="1103.50" y="855.50" font-size="13.5" fill="#ffff00" textLength="208.90" lengthAdjust="spacingAndGlyphs">Scattered / Moderate Thunderstorms</text>
<rect x="1079" y="867" width="15" height="8" fill="#ff0000"/>
<text x="1103.50" y="875.50" font-size="13.5" fill="#ff0000" textLength="208.89" lengthAdjust="spacingAndGlyphs">Widespread / Severe Thunderstorms</text>
<polyline points="61.5,666.5 143.5,672.4 61.5,686.7" fill="none" stroke="#e07000" stroke-width="1" shape-rendering="crispEdges"/>
<polyline points="61.5,690.4 100.2,692.4 116.0,694.5 199.7,699.6 228.0,704.1 219.4,707.0 228.4,716.4 220.2,720.1 243.1,727.3 200.0,730.0 140.0,731.6 128.0,732.3" fill="none" stroke="#e07000" stroke-width="1" shape-rendering="crispEdges"/>
<polyline points="62.0,694.5 63.6,699.5 63.6,704.0 64.8,707.4 65.5,711.5 69.0,716.0 78.1,717.2 93.9,718.1 117.2,719.7 110.3,722.9 114.1,726.7 127.3,728.6 187.5,729.1 212.0,731.1 275.1,732.5" fill="none" stroke="#ffff00" stroke-width="1" shape-rendering="crispEdges"/>
<path d="M61,699.5h5M63.5,697v5M61,704.5h5M63.5,702v5M62,707.5h5M64.5,705v5M63,711.5h5M65.5,709v5M66,716.5h5M68.5,714v5M115,719.5h5M117.5,717v5M112,726.5h5M114.5,724v5M125,728.5h5M127.5,726v5" stroke="#fff" stroke-width="1" fill="none" shape-rendering="crispEdges"/>
<polyline points="140.0,731.0 187.5,727.5 267.5,716.8 324.8,711.8 377.0,708.2 431.0,704.2 444.7,703.2 481.5,699.5 481.0,695.8 480.5,689.5 475.2,686.3 493.1,682.6 531.0,674.2 540.6,672.5 570.9,665.8 565.8,664.6 549.8,660.4" fill="none" stroke="#c8c800" stroke-width="1" shape-rendering="crispEdges"/>
<path d="M185,727.5h5M187.5,725v5M322,711.5h5M324.5,709v5M479,699.5h5M481.5,697v5M478,689.5h5M480.5,687v5M528,674.5h5M530.5,672v5M538,672.5h5M540.5,670v5M563,664.5h5M565.5,662v5" stroke="#fff" stroke-width="1" fill="none" shape-rendering="crispEdges"/>
<polyline points="427.3,50.5 419.1,75.3 412.1,98.3 406.0,119.8 400.8,139.8 396.3,158.7 392.5,176.4 389.3,193.0 386.6,208.8 384.4,223.8 382.5,238.0 381.0,251.5 379.9,264.3 379.0,276.6 378.4,288.4 378.1,299.6 377.9,310.4 378.0,320.8 378.4,330.5 378.9,339.9 379.7,348.9 380.5,357.7 381.4,366.1 382.4,374.2 383.5,382.1 384.7,389.7 386.0,397.0 387.3,404.2 388.6,411.1 390.0,417.8 391.5,424.3 392.9,430.7 394.4,436.8 395.9,442.8 397.4,448.7 398.9,454.3 400.5,459.8 402.0,465.2 403.5,470.4 405.0,475.5 406.6,480.5 408.0,485.4 409.5,490.2 411.0,494.8 412.4,499.4 413.8,503.8 415.2,508.2 416.5,512.5 417.9,516.6 419.2,520.7 420.5,524.7 421.7,528.6 422.9,532.5 424.1,536.3 425.2,540.0 426.3,543.7 427.4,547.3 428.5,550.8 429.5,554.2 430.5,557.6 431.5,560.9 432.5,564.2 433.4,567.4 434.3,570.6 435.2,573.7 436.0,576.8 436.8,579.8 437.7,582.7 438.4,585.7 439.2,588.5 439.9,591.4 440.6,594.2 441.2,597.0 441.9,599.7 442.5,602.4 443.1,605.1 443.7,607.7 444.3,610.3 444.9,612.8 445.4,615.3 446.0,617.8 446.5,620.2 447.0,622.6 447.5,625.0 448.0,627.4 448.5,629.7 448.9,631.9 449.4,634.2 449.8,636.4 450.3,638.6 450.7,640.7 451.1,642.9 451.5,645.0 451.9,647.1 452.3,649.1 452.7,651.1 453.1,653.1 453.4,655.1 453.8,657.1 454.1,659.0 454.5,660.9 454.8,662.8 455.1,664.7 455.5,666.5 455.8,668.4 456.1,670.2 456.4,672.0 456.7,673.8 457.0,675.5 457.3,677.3 457.5,679.0 457.8,680.7 458.1,682.4 458.3,684.0 458.6,685.7 458.9,687.3 459.1,688.9 459.4,690.5 459.6,692.1 459.9,693.7 460.0,693.7" fill="none" stroke="#ff00ff" stroke-width="1" shape-rendering="crispEdges"/>
<polyline points="460.0,693.7 470.5,701.5 481.5,709.5 496.3,720.0 504.7,728.4 514.2,732.1 518.4,732.6" fill="none" stroke="#ff00ff" stroke-width="1" shape-rendering="crispEdges"/>
<polyline points="460.0,693.7 437.3,732.6" fill="none" stroke="#ff00ff" stroke-width="1" shape-rendering="crispEdges"/>
<path d="M657,99.5h5M659.5,97v5M643,118.5h5M645.5,116v5M639,122.5h5M641.5,120v5M631,136.5h5M633.5,134v5M626,146.5h5M628.5,144v5M597,168.5h5M599.5,166v5M581,180.5h5M583.5,178v5M580,185.5h5M582.5,183v5M544,195.5h5M546.5,193v5M511,205.5h5M513.5,203v5M506,210.5h5M508.5,208v5M502,216.5h5M504.5,214v5M501,218.5h5M503.5,216v5M481,244.5h5M483.5,242v5M473,251.5h5M475.5,249v5M444,262.5h5M446.5,260v5M440,268.5h5M442.5,266v5M434,278.5h5M436.5,276v5M404,301.5h5M406.5,299v5M395,331.5h5M397.5,329v5M393,343.5h5M395.5,341v5M389,346.5h5M391.5,344v5M387,366.5h5M389.5,364v5M386,373.5h5M388.5,371v5M386,386.5h5M388.5,384v5M385,394.5h5M387.5,392v5M382,409.5h5M384.5,407v5M382,416.5h5M384.5,414v5M384,426.5h5M386.5,424v5M382,434.5h5M384.5,432v5M384,441.5h5M386.5,439v5M387,455.5h5M389.5,453v5M395,478.5h5M397.5,476v5M397,484.5h5M399.5,482v5M398,487.5h5M400.5,485v5M400,500.5h5M402.5,498v5M405,510.5h5M407.5,508v5M408,518.5h5M410.5,516v5M410,524.5h5M412.5,522v5M412,535.5h5M414.5,533v5M416,540.5h5M418.5,538v5M414,546.5h5M416.5,544v5M417,554.5h5M419.5,552v5M415,561.5h5M417.5,559v5M419,571.5h5M421.5,569v5M420,576.5h5M422.5,574v5M423,584.5h5M425.5,582v5M421,588.5h5M423.5,586v5M423,592.5h5M425.5,590v5M422,596.5h5M424.5,594v5M418,605.5h5M420.5,603v5M436,630.5h5M438.5,628v5M437,636.5h5M439.5,634v5M438,642.5h5M440.5,640v5M450,660.5h5M452.5,658v5M454,665.5h5M456.5,663v5M459,672.5h5M461.5,670v5M471,686.5h5M473.5,684v5M482,698.5h5M484.5,696v5M483,703.5h5M485.5,701v5M484,707.5h5M486.5,705v5M489,711.5h5M491.5,709v5M492,715.5h5M494.5,713v5M498,723.5h5M500.5,721v5M504,727.5h5M506.5,725v5M516,732.5h5M518.5,730v5" stroke="#fff" stroke-width="1" fill="none" shape-rendering="crispEdges"/>
<path d="M344,321.5h5M346.5,319v5M341,331.5h5M343.5,329v5M339,342.5h5M341.5,340v5M335,346.5h5M337.5,344v5M333,366.5h5M335.5,364v5M332,373.5h5M334.5,371v5M332,386.5h5M334.5,384v5M331,394.5h5M333.5,392v5M328,409.5h5M330.5,407v5M327,416.5h5M329.5,414v5M324,426.5h5M326.5,424v5M334,434.5h5M336.5,432v5M320,441.5h5M322.5,439v5M328,455.5h5M330.5,453v5M334,478.5h5M336.5,476v5M349,484.5h5M351.5,482v5M356,488.5h5M358.5,486v5M309,500.5h5M311.5,498v5M296,510.5h5M298.5,508v5M300,518.5h5M302.5,516v5M277,524.5h5M279.5,522v5M309,529.5h5M311.5,527v5M328,535.5h5M330.5,533v5M307,540.5h5M309.5,538v5M354,546.5h5M356.5,544v5M369,554.5h5M371.5,552v5M349,561.5h5M351.5,559v5M359,571.5h5M361.5,569v5M345,576.5h5M347.5,574v5M337,579.5h5M339.5,577v5M298,584.5h5M300.5,582v5M322,586.5h5M324.5,584v5M331,587.5h5M333.5,585v5M302,592.5h5M304.5,590v5M333,595.5h5M335.5,593v5M342,597.5h5M344.5,595v5M382,605.5h5M384.5,603v5M406,630.5h5M408.5,628v5M413,635.5h5M415.5,633v5M408,640.5h5M410.5,638v5M410,660.5h5M412.5,658v5M416,672.5h5M418.5,670v5M409,689.5h5M411.5,687v5M416,700.5h5M418.5,698v5M423,706.5h5M425.5,704v5M427,716.5h5M429.5,714v5M438,718.5h5M440.5,716v5M433,724.5h5M435.5,722v5M438,728.5h5M440.5,726v5M444,732.5h5M446.5,730v5" stroke="#fff" stroke-width="1" fill="none" shape-rendering="crispEdges"/>
<path d="M185,54.5h5M187.5,52v5M191,62.5h5M193.5,60v5M197,80.5h5M199.5,78v5M203,92.5h5M205.5,90v5M203,100.5h5M205.5,98v5M209,118.5h5M211.5,116v5M209,122.5h5M211.5,120v5M221,136.5h5M223.5,134v5M233,146.5h5M235.5,144v5M269,168.5h5M271.5,166v5M293,180.5h5M295.5,178v5M312,185.5h5M314.5,183v5M353,205.5h5M355.5,203v5M365,210.5h5M367.5,208v5M377,215.5h5M379.5,213v5M377,218.5h5M379.5,216v5M365,244.5h5M367.5,242v5M359,251.5h5M361.5,249v5M389,262.5h5M391.5,260v5M407,268.5h5M409.5,266v5M419,278.5h5M421.5,276v5M442,300.5h5M444.5,298v5M461,302.5h5M463.5,300v5M472,321.5h5M474.5,319v5M467,331.5h5M469.5,329v5M497,342.5h5M499.5,340v5M510,345.5h5M512.5,343v5M504,348.5h5M506.5,346v5M461,366.5h5M463.5,364v5M443,373.5h5M445.5,371v5M455,386.5h5M457.5,384v5M455,394.5h5M457.5,392v5M407,409.5h5M409.5,407v5M384,416.5h5M386.5,414v5M382,426.5h5M384.5,424v5M389,434.5h5M391.5,432v5M389,442.5h5M391.5,440v5M389,449.5h5M391.5,447v5M346,454.5h5M348.5,452v5M365,478.5h5M367.5,476v5M371,486.5h5M373.5,484v5M365,500.5h5M367.5,498v5M365,510.5h5M367.5,508v5M359,518.5h5M361.5,516v5M359,524.5h5M361.5,522v5M359,535.5h5M361.5,533v5M365,540.5h5M367.5,538v5M354,546.5h5M356.5,544v5M335,554.5h5M337.5,552v5M329,561.5h5M331.5,559v5M323,571.5h5M325.5,569v5M317,576.5h5M319.5,574v5M305,579.5h5M307.5,577v5M275,586.5h5M277.5,584v5M293,592.5h5M295.5,590v5M305,596.5h5M307.5,594v5M305,605.5h5M307.5,603v5M305,630.5h5M307.5,628v5M305,636.5h5M307.5,634v5M305,641.5h5M307.5,639v5M269,660.5h5M271.5,658v5M287,664.5h5M289.5,662v5M294,665.5h5M296.5,663v5M269,672.5h5M271.5,670v5M215,686.5h5M217.5,684v5M221,690.5h5M223.5,688v5M233,699.5h5M235.5,697v5M194,704.5h5M196.5,702v5M173,706.5h5M175.5,704v5M131,711.5h5M133.5,709v5M101,715.5h5M103.5,713v5M65,723.5h5M67.5,721v5M89,729.5h5M91.5,727v5M65,732.5h5M67.5,730v5" stroke="#fff" stroke-width="1" fill="none" shape-rendering="crispEdges"/>
<path d="M134,54.5h5M136.5,52v5M131,63.5h5M133.5,61v5M129,80.5h5M131.5,78v5M127,92.5h5M129.5,90v5M127,100.5h5M129.5,98v5M125,118.5h5M127.5,116v5M120,122.5h5M122.5,120v5M96,136.5h5M98.5,134v5M104,146.5h5M106.5,144v5M139,168.5h5M141.5,166v5M152,179.5h5M154.5,177v5M163,185.5h5M165.5,183v5M195,205.5h5M197.5,203v5M208,210.5h5M210.5,208v5M216,216.5h5M218.5,214v5M216,218.5h5M218.5,216v5M205,245.5h5M207.5,243v5M200,251.5h5M202.5,249v5M228,262.5h5M230.5,260v5M245,268.5h5M247.5,266v5M262,278.5h5M264.5,276v5M298,300.5h5M300.5,298v5M306,302.5h5M308.5,300v5M309,321.5h5M311.5,319v5M303,331.5h5M305.5,329v5M333,342.5h5M335.5,340v5M345,345.5h5M347.5,343v5M339,348.5h5M341.5,346v5M298,366.5h5M300.5,364v5M280,373.5h5M282.5,371v5M281,386.5h5M283.5,384v5M281,394.5h5M283.5,392v5M236,409.5h5M238.5,407v5M215,416.5h5M217.5,414v5M217,426.5h5M219.5,424v5M225,434.5h5M227.5,432v5M228,442.5h5M230.5,440v5M228,449.5h5M230.5,447v5M199,455.5h5M201.5,453v5M215,478.5h5M217.5,476v5M220,486.5h5M222.5,484v5M207,500.5h5M209.5,498v5M202,510.5h5M204.5,508v5M191,518.5h5M193.5,516v5M191,524.5h5M193.5,522v5M189,535.5h5M191.5,533v5M192,540.5h5M194.5,538v5M182,546.5h5M184.5,544v5M168,554.5h5M170.5,552v5M162,561.5h5M164.5,559v5M157,571.5h5M159.5,569v5M152,576.5h5M154.5,574v5M145,579.5h5M147.5,577v5M129,586.5h5M131.5,584v5M134,592.5h5M136.5,590v5M142,595.5h5M144.5,593v5M147,605.5h5M149.5,603v5M166,630.5h5M168.5,628v5M172,635.5h5M174.5,633v5M178,641.5h5M180.5,639v5M154,659.5h5M156.5,657v5M168,666.5h5M170.5,664v5M163,672.5h5M165.5,670v5M164,686.5h5M166.5,684v5M177,690.5h5M179.5,688v5M211,699.5h5M213.5,697v5M202,702.5h5M204.5,700v5M196,706.5h5M198.5,704v5M208,711.5h5M210.5,709v5M204,716.5h5M206.5,714v5M214,719.5h5M216.5,717v5M230,724.5h5M232.5,722v5M214,725.5h5M216.5,723v5M210,730.5h5M212.5,728v5M231,732.5h5M233.5,730v5" stroke="#fff" stroke-width="1" fill="none" shape-rendering="crispEdges"/>
<polyline points="187.3,50.5 187.7,54.6 193.2,63.0 199.4,80.4 205.2,92.5 205.2,100.2 211.1,118.6 211.4,122.5 223.4,136.5 235.5,146.6 271.7,168.8 295.3,180.2 314.2,185.6 355.3,205.5 367.5,210.3 379.7,215.2 379.7,218.2 367.5,244.7 361.2,251.3 391.5,262.4 409.6,268.3 421.3,278.4 444.8,300.3 463.7,302.5 474.9,321.1 469.8,331.2 499.3,342.2 512.0,345.2 506.0,348.6 463.4,366.6 445.4,373.3 457.2,386.3 457.2,394.7 409.2,409.4 386.4,416.4 384.9,426.7 391.2,434.1 391.2,442.2 391.2,449.9 348.8,454.9 367.3,478.2 373.5,486.5 367.1,500.3 367.1,510.4 361.7,518.8 361.7,524.3 361.7,535.3 367.4,540.7 356.2,546.6 337.6,555.0 331.4,561.7 325.6,571.3 319.4,576.2 307.6,579.5 277.6,586.3 295.4,592.3 307.6,596.6 307.4,605.5 307.4,631.0 307.4,636.0 307.4,641.9 271.7,660.1 289.4,664.6 296.2,665.8 271.7,672.5 217.5,686.5 223.7,690.7 235.5,699.2 196.5,704.1 175.2,707.0 133.3,711.2 103.3,715.9 67.4,723.2 91.4,729.2 67.4,732.0" fill="none" stroke="#00ff00" stroke-width="1" shape-rendering="crispEdges"/>
<polyline points="136.5,50.5 136.0,54.6 133.4,63.5 131.4,80.4 129.4,92.5 129.4,100.2 127.5,118.6 122.5,122.5 98.9,136.5 106.5,146.6 141.5,168.8 154.1,179.7 165.4,185.3 197.8,205.4 210.0,211.0 218.4,216.0 218.4,218.3 207.1,245.2 202.6,251.4 230.2,262.9 247.9,268.6 264.4,278.4 300.9,300.8 309.0,302.1 311.5,321.3 305.6,331.4 335.4,342.5 347.4,345.4 341.4,348.5 300.5,366.3 282.3,373.4 283.4,386.4 283.6,394.8 238.5,409.6 217.4,416.3 219.1,426.8 227.5,434.4 230.1,442.0 230.1,449.5 201.4,455.4 217.4,478.2 222.6,486.5 209.6,500.6 204.2,510.7 193.3,518.8 193.3,524.2 191.6,535.3 194.6,541.0 184.0,546.6 170.4,555.0 165.0,561.7 159.6,571.3 154.6,576.0 147.3,579.4 131.3,586.2 136.0,592.4 144.0,595.9 149.5,605.5 168.7,630.8 174.7,635.4 180.6,641.3 157.0,659.8 170.5,666.0 165.8,672.4 166.8,686.7 179.3,690.2 213.6,699.2 204.6,702.9 198.9,707.0 210.4,711.1 206.3,716.4 216.1,719.7 232.5,724.2 216.9,725.4 212.0,730.7 233.3,732.4" fill="none" stroke="#ff0080" stroke-width="1" shape-rendering="crispEdges"/>
<polyline points="346.4,321.5 343.5,331.4 341.8,342.4 337.8,346.5 335.8,366.2 334.5,373.4 334.1,386.4 333.1,394.3 330.3,409.1 329.4,416.7 326.4,426.8 336.2,434.4 322.3,441.9 330.6,455.4 337.0,479.0 351.1,484.8 358.3,488.1 311.5,500.3 298.9,510.0 302.3,518.8 279.2,524.3 311.5,529.7 330.0,535.3 309.8,540.7 356.7,546.6 371.3,555.0 351.1,561.7 361.7,571.3 347.5,576.5 339.3,579.5 300.0,584.4 324.6,586.5 333.3,587.4 304.4,592.5 335.5,595.3 344.5,597.2 384.8,605.5 408.8,631.0 415.5,635.2 410.5,640.3 413.0,660.5 418.9,672.3 411.3,689.1 418.9,700.0 425.6,706.8 429.8,716.9 440.8,718.6 435.7,724.2 440.5,729.0 446.8,732.1" fill="none" stroke="#00ffff" stroke-width="1" shape-rendering="crispEdges"/>
<polyline points="661.0,97.5 659.7,99.8 645.3,118.3 641.2,122.4 633.4,136.4 628.2,146.8 599.1,168.2 583.1,180.5 582.4,185.6 546.5,195.8 513.9,205.5 508.3,210.5 504.6,216.1 503.3,218.3 483.2,244.2 475.2,251.5 446.5,262.4 442.3,268.3 436.8,278.4 406.9,301.2 397.3,331.1 395.1,343.4 391.7,346.8 389.2,366.2 388.7,373.4 388.0,386.4 387.5,394.3 384.5,409.4 384.2,416.4 386.0,426.7 384.5,434.4 386.7,441.8 389.2,455.4 397.6,479.0 399.3,484.9 400.2,487.4 402.0,500.3 407.1,510.4 410.5,518.8 412.2,524.7 414.7,535.3 418.9,540.7 416.4,546.6 419.4,555.0 417.7,561.7 421.4,571.3 422.8,576.9 425.6,584.5 423.1,588.7 425.1,592.9 424.0,596.3 420.6,605.5 438.3,630.0 439.1,636.0 440.8,642.8 452.0,660.0 456.3,665.8 461.5,672.6 473.6,686.3 484.2,699.0 485.2,703.2 486.8,707.4 491.5,711.6 494.7,715.3 500.5,723.2 506.8,727.9 518.4,732.6" fill="none" stroke="#ff0000" stroke-width="1" shape-rendering="crispEdges"/>
<rect x="62" y="693" width="563" height="1" fill="#ff00ff"/>
<rect x="625.5" y="684.5" width="30" height="17" fill="#000" stroke="#ff00ff" stroke-width="1" shape-rendering="crispEdges"/>
<text x="629.50" y="698.00" font-size="14" fill="#ff00ff" textLength="22.00" lengthAdjust="spacingAndGlyphs">LCL</text>
<rect x="67.5" y="607.5" width="43" height="17" fill="#000" stroke="#ffff00" stroke-width="1" shape-rendering="crispEdges"/>
<text x="71.50" y="621.00" font-size="14" fill="#ffff00" textLength="34.50" lengthAdjust="spacingAndGlyphs">CAPE</text>
<rect x="67.5" y="636.5" width="57" height="17" fill="#000" stroke="#e07000" stroke-width="1" shape-rendering="crispEdges"/>
<text x="71.50" y="650.00" font-size="14" fill="#e07000" textLength="49.00" lengthAdjust="spacingAndGlyphs">CINH * 5</text>
<rect x="374" y="705" width="7" height="7" fill="#c8c800"/>
<text x="377.5" y="711.5" font-size="8" text-anchor="middle" fill="#000">1</text>
<rect x="490" y="679" width="7" height="7" fill="#c8c800"/>
<text x="493.5" y="685.5" font-size="8" text-anchor="middle" fill="#000">2</text>
<rect x="555" y="652" width="7" height="7" fill="#c8c800"/>
<text x="558.5" y="658.5" font-size="8" text-anchor="middle" fill="#000">3</text>
<path d="M761.5,54.3L733.8,64.6M761.5,63.6L733.8,73.7M761.5,80.4L734.0,90.5M761.5,92.6L734.0,102.7M761.5,100.6L734.0,110.5M761.5,119.0L735.0,129.5M761.5,122.5L733.5,131.6M761.5,136.4L732.0,141.5M761.5,146.3L733.0,153.7M761.5,168.4L734.0,178.5M761.5,180.6L734.0,190.5M761.5,185.3L733.0,194.7M761.5,205.9L733.4,213.0M761.5,210.5L733.4,218.5M761.5,215.8L733.4,223.2M761.5,219.0L733.4,226.3M761.5,244.8L733.4,252.2M761.5,251.6L733.4,259.4M761.5,262.7L733.4,270.5M761.5,268.4L733.4,276.2M761.5,278.9L733.4,287.4M761.5,301.0L734.5,312.6M761.5,302.0L734.5,313.6M761.5,321.7L733.4,329.5M761.5,331.6L733.4,339.4M761.5,342.7L733.4,349.9M761.5,345.3L733.4,353.3M761.5,348.4L733.4,356.2M761.5,367.0L733.4,374.3M761.5,373.7L733.4,381.5M761.5,386.3L732.4,389.5M761.5,394.1L732.4,397.9M761.5,409.4L732.4,413.2M761.5,416.3L732.4,421.6M761.5,426.8L733.0,432.1M761.5,434.2L733.0,440.9M761.5,441.6L733.0,450.0M761.5,442.6L733.0,451.0M761.5,450.0L733.0,457.4M761.5,455.7L733.8,464.7M761.5,478.4L734.5,487.9M761.5,485.8L734.5,494.8M761.5,488.5L734.5,498.4M761.5,500.5L733.0,508.3M761.5,510.0L733.0,517.4M761.5,518.4L732.4,523.7M761.5,519.4L732.4,524.7M761.5,524.7L732.4,529.0M761.5,530.6L732.4,535.3M761.5,535.3L732.4,539.5M761.5,540.5L732.4,543.7M761.5,541.5L732.4,544.7M761.5,545.8L732.4,550.0M761.5,554.2L732.4,559.5M761.5,555.2L732.4,560.5M761.5,561.6L732.4,565.8M761.5,572.1L732.4,576.3M761.5,577.4L732.4,581.6M761.5,582.6L732.4,586.8M761.5,586.6L733.0,591.0M761.5,589.7L733.0,594.0M761.5,592.9L733.0,597.5M761.5,596.0L733.0,600.5M761.5,598.2L733.0,602.5M761.5,605.5L733.0,612.5M761.5,631.4L734.5,642.4M761.5,637.1L734.5,647.6M761.5,642.0L734.5,655.0M761.5,660.3L735.5,672.9M761.5,665.5L735.5,678.2M761.5,666.5L735.5,679.2M761.5,671.8L735.5,685.5M761.5,686.6L737.6,702.4M761.5,699.2L740.8,706.6M761.5,702.9L737.6,712.9M761.5,707.0L746.0,735.0M761.5,711.1L732.4,728.7M761.5,716.4L742.0,724.0M761.5,719.7L748.0,730.0M761.5,724.2L737.0,732.0M761.5,725.4L745.0,718.0M761.5,730.7L741.0,734.0M826.5,54.3L848.8,72.6M826.5,63.6L847.7,83.8M826.5,80.4L846.1,102.1M826.5,92.6L843.9,115.8M826.5,100.6L843.9,123.6M826.5,119.0L841.4,142.1M826.5,122.5L841.8,146.3M826.5,136.4L839.7,162.5M826.5,146.3L830.5,175.0M826.5,168.4L820.8,190.5M826.5,180.6L820.3,192.6M826.5,185.3L809.2,208.4M826.5,205.9L804.5,223.7M826.5,210.5L803.4,227.4M826.5,215.8L802.4,231.6M826.5,218.4L802.4,234.7M826.5,244.8L802.5,260.6M826.5,251.6L803.3,268.4M826.5,262.7L802.5,277.5M826.5,268.4L801.2,282.5M826.5,278.9L802.5,294.7M826.5,301.0L802.5,318.9M826.5,301.5L805.0,320.4M826.5,321.7L800.4,334.3M826.5,331.6L800.4,344.8M826.5,342.7L800.4,355.8M826.5,345.3L800.4,359.0M826.5,348.4L800.4,361.7M826.5,367.0L800.4,380.0M826.5,373.7L801.2,386.3M826.5,386.3L797.6,391.6M826.5,394.1L797.6,399.5M826.5,409.4L797.6,418.4M826.5,416.3L799.1,427.9M826.5,426.8L800.4,439.5M826.5,434.2L801.2,447.3M826.5,441.6L802.5,457.4M826.5,442.6L802.5,458.4M826.5,450.0L802.5,464.7M826.5,455.7L807.1,476.3M826.5,478.4L806.1,498.4M826.5,485.8L805.0,505.8M826.5,488.5L806.1,506.8M826.5,500.5L802.9,517.4M826.5,510.0L801.2,525.8M826.5,518.4L800.4,532.1M826.5,519.4L800.4,533.1M826.5,524.7L799.7,537.4M826.5,530.6L799.1,541.6M826.5,535.3L798.7,545.8M826.5,540.5L798.3,548.3M826.5,541.5L798.3,549.3M826.5,545.8L799.1,556.3M826.5,554.2L801.2,568.9M826.5,555.2L801.2,569.9M826.5,561.6L801.2,575.3M826.5,572.1L802.9,584.7M826.5,577.4L801.8,585.5M826.5,582.6L804.0,591.8M826.5,586.6L805.0,598.2M826.5,589.7L813.4,606.6M826.5,592.9L808.0,604.0M826.5,596.0L802.9,612.9M826.5,598.2L815.0,611.0M826.5,605.5L805.0,625.5M826.5,631.4L812.4,656.0M826.5,637.1L814.5,669.7M826.5,642.0L815.5,663.4M826.5,660.3L817.6,692.9M826.5,665.5L821.8,688.7M826.5,671.8L824.0,701.3M826.5,686.6L839.7,711.8M826.5,699.2L845.0,718.0M826.5,702.9L855.5,722.0M826.5,707.0L855.5,724.0M826.5,711.1L855.5,726.0M826.5,716.4L855.5,728.0M826.5,719.7L855.5,730.0M826.5,724.2L855.5,732.0M826.5,725.4L850.0,728.0M826.5,730.7L855.5,733.0" stroke="#fff" stroke-width="1" fill="none" shape-rendering="crispEdges"/>
<line x1="761.50" y1="40.00" x2="761.50" y2="770.00" stroke="#00ff00" stroke-width="1" shape-rendering="crispEdges"/>
<line x1="826.50" y1="40.00" x2="826.50" y2="770.00" stroke="#ff0080" stroke-width="1" shape-rendering="crispEdges"/>
</svg></body></html>
